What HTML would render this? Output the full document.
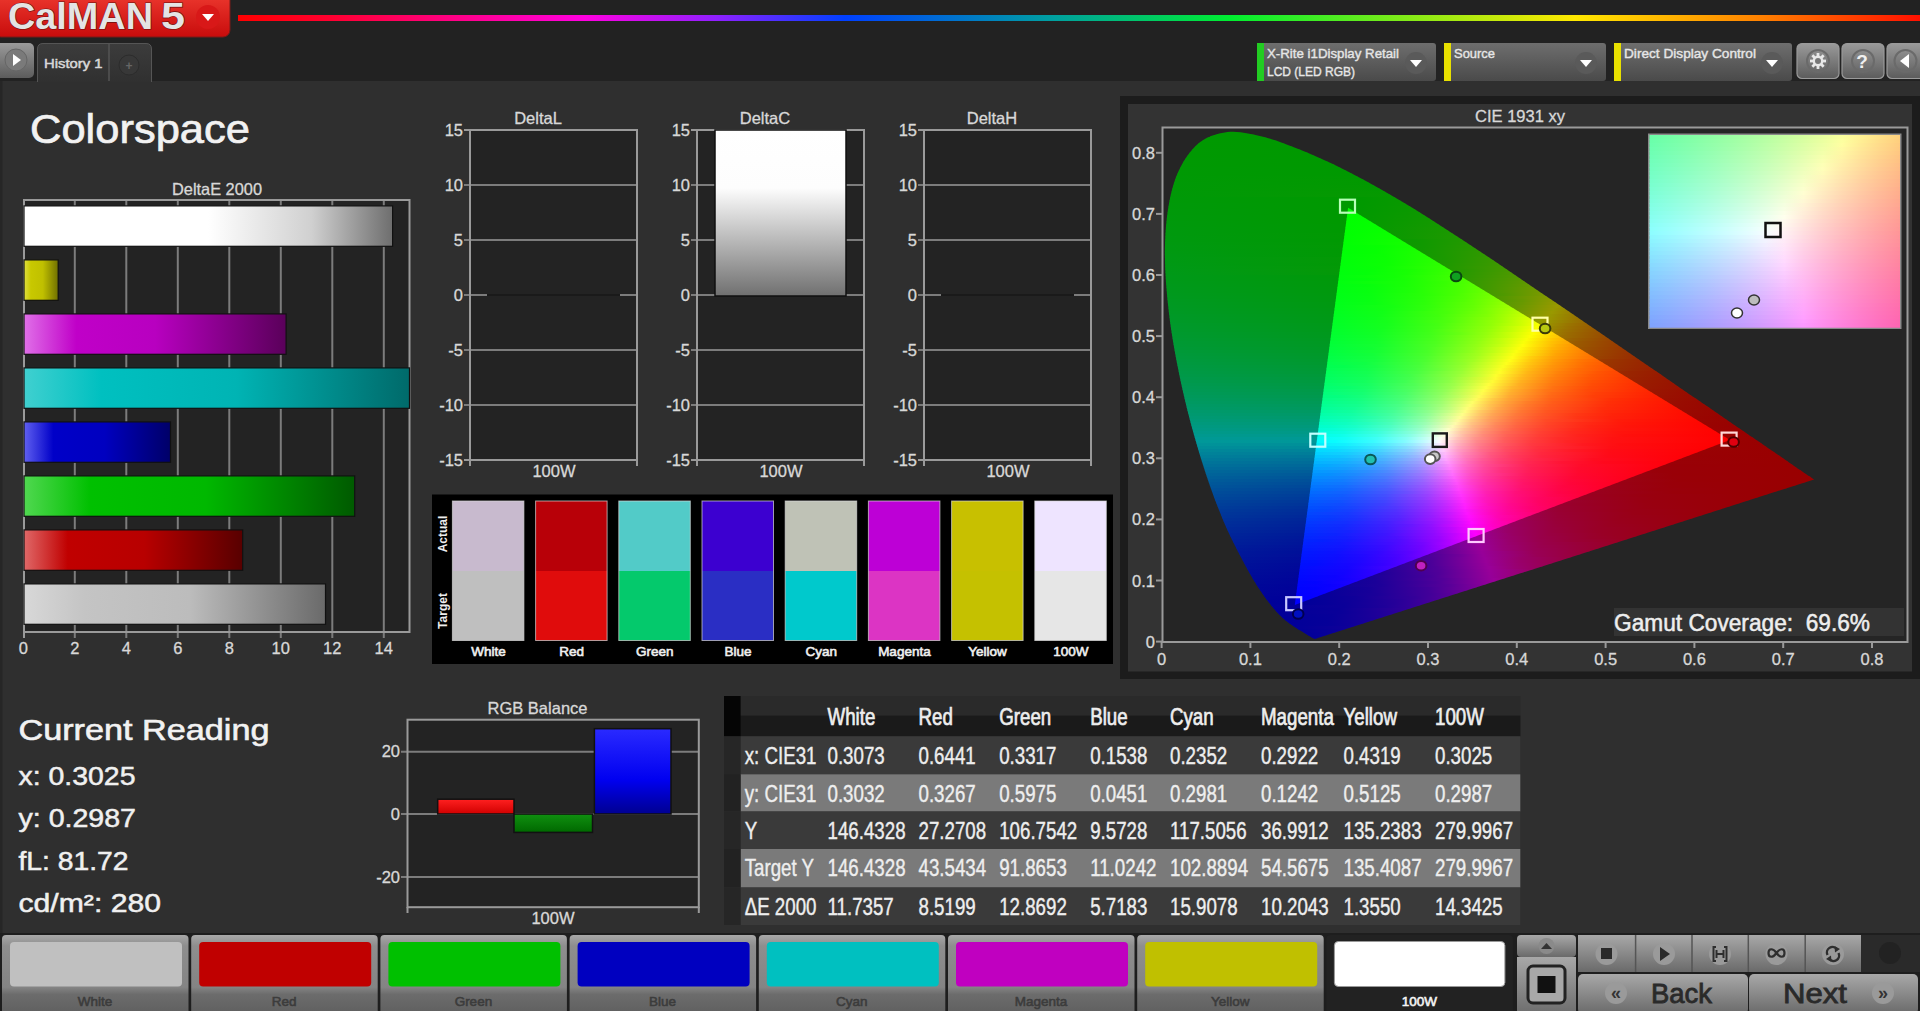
<!DOCTYPE html>
<html><head><meta charset="utf-8"><title>CalMAN 5</title>
<style>
html,body{margin:0;padding:0;background:#222;width:1920px;height:1011px;overflow:hidden}
svg{position:absolute;left:0;top:0;display:block}
text{font-family:"Liberation Sans", sans-serif}
</style></head><body>
<svg width="1920" height="1011" viewBox="0 0 1920 1011" font-family='"Liberation Sans", sans-serif'>
<defs>
<linearGradient id="logo" x1="0" y1="0" x2="0" y2="1"><stop offset="0" stop-color="#ee3a30"/><stop offset="1" stop-color="#c80c0c"/></linearGradient>
<linearGradient id="rb" gradientUnits="userSpaceOnUse" x1="238" x2="1920" y1="0" y2="0"><stop offset="0.000" stop-color="#ff0000"/><stop offset="0.055" stop-color="#ff0030"/><stop offset="0.206" stop-color="#ff00e0"/><stop offset="0.284" stop-color="#9020ff"/><stop offset="0.361" stop-color="#0040ff"/><stop offset="0.485" stop-color="#00a0a0"/><stop offset="0.590" stop-color="#00ee30"/><stop offset="0.795" stop-color="#ffe800"/><stop offset="0.906" stop-color="#ff8000"/><stop offset="1.000" stop-color="#ff1000"/></linearGradient>
<linearGradient id="gbtn" x1="0" y1="0" x2="0" y2="1"><stop offset="0" stop-color="#9a9a9a"/><stop offset="1" stop-color="#5c5c5c"/></linearGradient>
<linearGradient id="gtab" x1="0" y1="0" x2="0" y2="1"><stop offset="0" stop-color="#3c3c3c"/><stop offset="1" stop-color="#303030"/></linearGradient>
<linearGradient id="gsel" x1="0" y1="0" x2="0" y2="1"><stop offset="0" stop-color="#6e6e6e"/><stop offset="1" stop-color="#4a4a4a"/></linearGradient>
<linearGradient id="bar0" x1="0" x2="1" y1="0" y2="0"><stop offset="0" stop-color="#ffffff"/><stop offset="0.5" stop-color="#ffffff"/><stop offset="0.78" stop-color="#d0d0d0"/><stop offset="1" stop-color="#6e6e6e"/></linearGradient>
<linearGradient id="bar1" x1="0" x2="1" y1="0" y2="0"><stop offset="0" stop-color="#e0e040"/><stop offset="0.2" stop-color="#c8c800"/><stop offset="0.55" stop-color="#c0c000"/><stop offset="1" stop-color="#707000"/></linearGradient>
<linearGradient id="bar2" x1="0" x2="1" y1="0" y2="0"><stop offset="0" stop-color="#e070e8"/><stop offset="0.2" stop-color="#c000c8"/><stop offset="0.5" stop-color="#b800c0"/><stop offset="1" stop-color="#5a005a"/></linearGradient>
<linearGradient id="bar3" x1="0" x2="1" y1="0" y2="0"><stop offset="0" stop-color="#40d0d0"/><stop offset="0.2" stop-color="#00c0c0"/><stop offset="0.55" stop-color="#00b4b4"/><stop offset="1" stop-color="#006a6a"/></linearGradient>
<linearGradient id="bar4" x1="0" x2="1" y1="0" y2="0"><stop offset="0" stop-color="#6060f0"/><stop offset="0.2" stop-color="#0000c8"/><stop offset="0.55" stop-color="#0000c0"/><stop offset="1" stop-color="#000068"/></linearGradient>
<linearGradient id="bar5" x1="0" x2="1" y1="0" y2="0"><stop offset="0" stop-color="#50d850"/><stop offset="0.2" stop-color="#00c000"/><stop offset="0.55" stop-color="#00b800"/><stop offset="1" stop-color="#005a00"/></linearGradient>
<linearGradient id="bar6" x1="0" x2="1" y1="0" y2="0"><stop offset="0" stop-color="#e06868"/><stop offset="0.2" stop-color="#c00000"/><stop offset="0.55" stop-color="#b80000"/><stop offset="1" stop-color="#580000"/></linearGradient>
<linearGradient id="bar7" x1="0" x2="1" y1="0" y2="0"><stop offset="0" stop-color="#d8d8d8"/><stop offset="0.2" stop-color="#c4c4c4"/><stop offset="0.55" stop-color="#bcbcbc"/><stop offset="1" stop-color="#6a6a6a"/></linearGradient>
<linearGradient id="dc" x1="0" y1="0" x2="0" y2="1"><stop offset="0" stop-color="#ffffff"/><stop offset=".35" stop-color="#fdfdfd"/><stop offset="1" stop-color="#707070"/></linearGradient>
<clipPath id="hs"><path d="M1316.2 638.5 C1316.0 638.6 1315.3 638.7 1314.9 638.7 C1314.5 638.7 1314.1 638.6 1313.8 638.5 C1313.5 638.4 1313.2 638.2 1312.8 638.1 C1312.5 637.9 1312.1 637.7 1311.6 637.4 C1311.1 637.1 1310.5 636.8 1309.8 636.3 C1309.1 635.9 1308.4 635.5 1307.6 634.9 C1306.7 634.4 1305.8 633.9 1304.7 633.2 C1303.5 632.5 1302.2 631.7 1300.7 630.8 C1299.2 629.9 1297.6 629.0 1295.7 627.7 C1293.8 626.5 1291.8 625.2 1289.5 623.5 C1287.2 621.7 1284.9 620.1 1281.9 617.2 C1279.0 614.4 1275.6 611.1 1271.8 606.3 C1268.0 601.5 1263.8 596.2 1258.9 588.6 C1254.1 580.9 1248.7 572.1 1242.7 560.5 C1236.6 548.9 1229.4 535.5 1222.6 519.0 C1215.8 502.4 1208.6 482.9 1201.9 461.4 C1195.2 439.8 1188.0 414.2 1182.5 389.4 C1177.0 364.7 1171.8 337.3 1168.9 312.6 C1166.0 288.0 1164.2 263.1 1165.1 241.5 C1165.9 219.9 1168.8 199.2 1173.9 183.2 C1179.1 167.2 1187.2 154.0 1196.1 145.5 C1205.1 137.0 1216.4 133.6 1227.6 132.1 C1238.7 130.7 1251.1 134.0 1263.0 136.8 C1274.9 139.6 1287.3 144.7 1299.0 149.2 C1310.6 153.7 1321.8 158.8 1332.9 164.0 C1344.0 169.3 1354.7 174.9 1365.5 180.7 C1376.3 186.6 1387.0 192.7 1397.6 199.1 C1408.3 205.4 1418.8 211.9 1429.4 218.6 C1440.0 225.3 1450.5 232.1 1461.1 239.0 C1471.7 245.9 1482.3 253.0 1492.9 260.0 C1503.5 267.1 1514.0 274.2 1524.5 281.4 C1535.0 288.5 1545.6 295.6 1556.0 302.7 C1566.3 309.7 1576.7 316.8 1586.8 323.8 C1596.9 330.7 1606.9 337.6 1616.7 344.3 C1626.5 351.0 1636.1 357.6 1645.4 364.0 C1654.7 370.3 1663.8 376.5 1672.4 382.4 C1681.0 388.3 1689.3 394.1 1697.0 399.3 C1704.6 404.6 1711.7 409.4 1718.4 414.0 C1725.1 418.6 1731.5 423.0 1737.2 426.9 C1742.9 430.8 1748.1 434.3 1752.8 437.5 C1757.6 440.8 1761.7 443.6 1765.5 446.3 C1769.3 448.9 1772.6 451.2 1775.7 453.2 C1778.7 455.3 1781.3 457.1 1783.7 458.7 C1786.2 460.4 1788.2 461.8 1790.2 463.2 C1792.2 464.6 1794.0 465.8 1795.6 466.9 C1797.3 468.0 1798.7 469.1 1800.1 470.0 C1801.4 470.9 1802.6 471.7 1803.6 472.4 C1804.7 473.1 1805.3 473.5 1806.3 474.2 C1807.3 474.9 1808.7 475.9 1809.8 476.6 C1810.9 477.4 1812.2 478.2 1812.9 478.7 C1813.6 479.2 1813.8 479.4 1814.0 479.5 Z"/></clipPath>
<clipPath id="tri"><path d="M1729.9 440.0 L1348.1 207.8 L1294.8 604.9 Z"/></clipPath>
<linearGradient id="c0" gradientUnits="userSpaceOnUse" x1="1216.7" x2="1256.2" y1="0" y2="0"><stop offset="0.000" stop-color="#009900"/><stop offset="1.000" stop-color="#009900"/></linearGradient>
<linearGradient id="c1" gradientUnits="userSpaceOnUse" x1="1209.6" x2="1271.0" y1="0" y2="0"><stop offset="0.000" stop-color="#009900"/><stop offset="1.000" stop-color="#009900"/></linearGradient>
<linearGradient id="c2" gradientUnits="userSpaceOnUse" x1="1202.5" x2="1279.7" y1="0" y2="0"><stop offset="0.000" stop-color="#009901"/><stop offset="1.000" stop-color="#009900"/></linearGradient>
<linearGradient id="c3" gradientUnits="userSpaceOnUse" x1="1195.4" x2="1288.4" y1="0" y2="0"><stop offset="0.000" stop-color="#009901"/><stop offset="1.000" stop-color="#009900"/></linearGradient>
<linearGradient id="c4" gradientUnits="userSpaceOnUse" x1="1191.9" x2="1297.1" y1="0" y2="0"><stop offset="0.000" stop-color="#009901"/><stop offset="1.000" stop-color="#009900"/></linearGradient>
<linearGradient id="c5" gradientUnits="userSpaceOnUse" x1="1190.2" x2="1305.0" y1="0" y2="0"><stop offset="0.000" stop-color="#009901"/><stop offset="1.000" stop-color="#009900"/></linearGradient>
<linearGradient id="c6" gradientUnits="userSpaceOnUse" x1="1188.4" x2="1311.8" y1="0" y2="0"><stop offset="0.000" stop-color="#009902"/><stop offset="1.000" stop-color="#009900"/></linearGradient>
<linearGradient id="c7" gradientUnits="userSpaceOnUse" x1="1186.7" x2="1318.7" y1="0" y2="0"><stop offset="0.000" stop-color="#009902"/><stop offset="1.000" stop-color="#009900"/></linearGradient>
<linearGradient id="c8" gradientUnits="userSpaceOnUse" x1="1184.9" x2="1325.5" y1="0" y2="0"><stop offset="0.000" stop-color="#009902"/><stop offset="1.000" stop-color="#009900"/></linearGradient>
<linearGradient id="c9" gradientUnits="userSpaceOnUse" x1="1183.1" x2="1332.4" y1="0" y2="0"><stop offset="0.000" stop-color="#009903"/><stop offset="1.000" stop-color="#009900"/></linearGradient>
<linearGradient id="c10" gradientUnits="userSpaceOnUse" x1="1181.4" x2="1338.7" y1="0" y2="0"><stop offset="0.000" stop-color="#009903"/><stop offset="1.000" stop-color="#009900"/></linearGradient>
<linearGradient id="c11" gradientUnits="userSpaceOnUse" x1="1179.6" x2="1344.6" y1="0" y2="0"><stop offset="0.000" stop-color="#009903"/><stop offset="1.000" stop-color="#009900"/></linearGradient>
<linearGradient id="c12" gradientUnits="userSpaceOnUse" x1="1177.8" x2="1350.5" y1="0" y2="0"><stop offset="0.000" stop-color="#009904"/><stop offset="1.000" stop-color="#009900"/></linearGradient>
<linearGradient id="c13" gradientUnits="userSpaceOnUse" x1="1176.1" x2="1356.3" y1="0" y2="0"><stop offset="0.000" stop-color="#009904"/><stop offset="1.000" stop-color="#009900"/></linearGradient>
<linearGradient id="c14" gradientUnits="userSpaceOnUse" x1="1174.3" x2="1362.2" y1="0" y2="0"><stop offset="0.000" stop-color="#009904"/><stop offset="1.000" stop-color="#009900"/></linearGradient>
<linearGradient id="c15" gradientUnits="userSpaceOnUse" x1="1172.5" x2="1368.0" y1="0" y2="0"><stop offset="0.000" stop-color="#009905"/><stop offset="1.000" stop-color="#019900"/></linearGradient>
<linearGradient id="c16" gradientUnits="userSpaceOnUse" x1="1170.9" x2="1373.4" y1="0" y2="0"><stop offset="0.000" stop-color="#009905"/><stop offset="1.000" stop-color="#029900"/></linearGradient>
<linearGradient id="c17" gradientUnits="userSpaceOnUse" x1="1170.4" x2="1378.6" y1="0" y2="0"><stop offset="0.000" stop-color="#009906"/><stop offset="1.000" stop-color="#029900"/></linearGradient>
<linearGradient id="c18" gradientUnits="userSpaceOnUse" x1="1170.0" x2="1383.9" y1="0" y2="0"><stop offset="0.000" stop-color="#009906"/><stop offset="1.000" stop-color="#039900"/></linearGradient>
<linearGradient id="c19" gradientUnits="userSpaceOnUse" x1="1169.5" x2="1389.1" y1="0" y2="0"><stop offset="0.000" stop-color="#009906"/><stop offset="1.000" stop-color="#049900"/></linearGradient>
<linearGradient id="c20" gradientUnits="userSpaceOnUse" x1="1169.1" x2="1394.4" y1="0" y2="0"><stop offset="0.000" stop-color="#009907"/><stop offset="1.000" stop-color="#059900"/></linearGradient>
<linearGradient id="c21" gradientUnits="userSpaceOnUse" x1="1168.6" x2="1399.7" y1="0" y2="0"><stop offset="0.000" stop-color="#009907"/><stop offset="1.000" stop-color="#069900"/></linearGradient>
<linearGradient id="c22" gradientUnits="userSpaceOnUse" x1="1168.2" x2="1404.6" y1="0" y2="0"><stop offset="0.000" stop-color="#009908"/><stop offset="0.798" stop-color="#009900"/><stop offset="1.000" stop-color="#089900"/></linearGradient>
<linearGradient id="c23" gradientUnits="userSpaceOnUse" x1="1167.7" x2="1409.5" y1="0" y2="0"><stop offset="0.000" stop-color="#009908"/><stop offset="0.785" stop-color="#009900"/><stop offset="1.000" stop-color="#099900"/></linearGradient>
<linearGradient id="c24" gradientUnits="userSpaceOnUse" x1="1167.2" x2="1414.4" y1="0" y2="0"><stop offset="0.000" stop-color="#009909"/><stop offset="0.766" stop-color="#009900"/><stop offset="1.000" stop-color="#0a9900"/></linearGradient>
<linearGradient id="c25" gradientUnits="userSpaceOnUse" x1="1166.8" x2="1419.2" y1="0" y2="0"><stop offset="0.000" stop-color="#009909"/><stop offset="0.748" stop-color="#009900"/><stop offset="1.000" stop-color="#0c9900"/></linearGradient>
<linearGradient id="c26" gradientUnits="userSpaceOnUse" x1="1166.3" x2="1424.1" y1="0" y2="0"><stop offset="0.000" stop-color="#00990a"/><stop offset="0.736" stop-color="#009900"/><stop offset="1.000" stop-color="#0d9900"/></linearGradient>
<linearGradient id="c27" gradientUnits="userSpaceOnUse" x1="1165.9" x2="1429.0" y1="0" y2="0"><stop offset="0.000" stop-color="#00990a"/><stop offset="0.720" stop-color="#009900"/><stop offset="1.000" stop-color="#0f9900"/></linearGradient>
<linearGradient id="c28" gradientUnits="userSpaceOnUse" x1="1165.4" x2="1433.8" y1="0" y2="0"><stop offset="0.000" stop-color="#00990b"/><stop offset="0.704" stop-color="#009900"/><stop offset="1.000" stop-color="#119900"/></linearGradient>
<linearGradient id="c29" gradientUnits="userSpaceOnUse" x1="1165.0" x2="1438.5" y1="0" y2="0"><stop offset="0.000" stop-color="#00990b"/><stop offset="0.693" stop-color="#009900"/><stop offset="1.000" stop-color="#139900"/></linearGradient>
<linearGradient id="c30" gradientUnits="userSpaceOnUse" x1="1164.5" x2="1443.1" y1="0" y2="0"><stop offset="0.000" stop-color="#00990c"/><stop offset="0.679" stop-color="#009900"/><stop offset="1.000" stop-color="#159900"/></linearGradient>
<linearGradient id="c31" gradientUnits="userSpaceOnUse" x1="1164.0" x2="1447.8" y1="0" y2="0"><stop offset="0.000" stop-color="#00990c"/><stop offset="0.669" stop-color="#009901"/><stop offset="1.000" stop-color="#179900"/></linearGradient>
<linearGradient id="c32" gradientUnits="userSpaceOnUse" x1="1163.6" x2="1452.5" y1="0" y2="0"><stop offset="0.000" stop-color="#00990d"/><stop offset="0.655" stop-color="#009901"/><stop offset="1.000" stop-color="#1a9900"/></linearGradient>
<linearGradient id="c33" gradientUnits="userSpaceOnUse" x1="1163.1" x2="1457.1" y1="0" y2="0"><stop offset="0.000" stop-color="#00990e"/><stop offset="0.646" stop-color="#009901"/><stop offset="1.000" stop-color="#1c9900"/></linearGradient>
<linearGradient id="c34" gradientUnits="userSpaceOnUse" x1="1162.7" x2="1461.8" y1="0" y2="0"><stop offset="0.000" stop-color="#00990e"/><stop offset="0.667" stop-color="#019901"/><stop offset="1.000" stop-color="#1f9900"/></linearGradient>
<linearGradient id="c35" gradientUnits="userSpaceOnUse" x1="1162.2" x2="1466.4" y1="0" y2="0"><stop offset="0.000" stop-color="#00990f"/><stop offset="0.654" stop-color="#019901"/><stop offset="1.000" stop-color="#219900"/></linearGradient>
<linearGradient id="c36" gradientUnits="userSpaceOnUse" x1="1162.1" x2="1470.9" y1="0" y2="0"><stop offset="0.000" stop-color="#00990f"/><stop offset="0.613" stop-color="#009902"/><stop offset="0.826" stop-color="#0e9900"/><stop offset="1.000" stop-color="#249900"/></linearGradient>
<linearGradient id="c37" gradientUnits="userSpaceOnUse" x1="1162.1" x2="1475.4" y1="0" y2="0"><stop offset="0.000" stop-color="#009910"/><stop offset="0.631" stop-color="#019902"/><stop offset="0.822" stop-color="#0f9900"/><stop offset="1.000" stop-color="#279900"/></linearGradient>
<linearGradient id="c38" gradientUnits="userSpaceOnUse" x1="1162.2" x2="1480.0" y1="0" y2="0"><stop offset="0.000" stop-color="#009911"/><stop offset="0.642" stop-color="#029902"/><stop offset="0.824" stop-color="#119900"/><stop offset="1.000" stop-color="#2b9900"/></linearGradient>
<linearGradient id="c39" gradientUnits="userSpaceOnUse" x1="1162.3" x2="1484.5" y1="0" y2="0"><stop offset="0.000" stop-color="#009911"/><stop offset="0.611" stop-color="#019903"/><stop offset="0.809" stop-color="#119900"/><stop offset="1.000" stop-color="#2e9900"/></linearGradient>
<linearGradient id="c40" gradientUnits="userSpaceOnUse" x1="1162.5" x2="1489.1" y1="0" y2="0"><stop offset="0.000" stop-color="#009912"/><stop offset="0.598" stop-color="#019903"/><stop offset="0.811" stop-color="#139900"/><stop offset="1.000" stop-color="#329900"/></linearGradient>
<linearGradient id="c41" gradientUnits="userSpaceOnUse" x1="1162.7" x2="1493.6" y1="0" y2="0"><stop offset="0.000" stop-color="#009913"/><stop offset="0.590" stop-color="#019903"/><stop offset="0.819" stop-color="#169900"/><stop offset="1.000" stop-color="#359900"/></linearGradient>
<linearGradient id="c42" gradientUnits="userSpaceOnUse" x1="1162.8" x2="1498.1" y1="0" y2="0"><stop offset="0.000" stop-color="#009914"/><stop offset="0.631" stop-color="#049903"/><stop offset="0.839" stop-color="#1b9900"/><stop offset="1.000" stop-color="#3a9900"/></linearGradient>
<linearGradient id="c43" gradientUnits="userSpaceOnUse" x1="1163.0" x2="1502.5" y1="0" y2="0"><stop offset="0.000" stop-color="#009914"/><stop offset="0.606" stop-color="#039904"/><stop offset="0.812" stop-color="#199900"/><stop offset="1.000" stop-color="#3e9900"/></linearGradient>
<linearGradient id="c44" gradientUnits="userSpaceOnUse" x1="1163.1" x2="1507.0" y1="0" y2="0"><stop offset="0.000" stop-color="#009915"/><stop offset="0.581" stop-color="#029904"/><stop offset="0.791" stop-color="#189900"/><stop offset="1.000" stop-color="#429900"/></linearGradient>
<linearGradient id="c45" gradientUnits="userSpaceOnUse" x1="1163.3" x2="1511.4" y1="0" y2="0"><stop offset="0.000" stop-color="#009916"/><stop offset="0.600" stop-color="#049904"/><stop offset="0.777" stop-color="#189900"/><stop offset="1.000" stop-color="#479900"/></linearGradient>
<linearGradient id="c46" gradientUnits="userSpaceOnUse" x1="1163.5" x2="1515.9" y1="0" y2="0"><stop offset="0.000" stop-color="#009917"/><stop offset="0.605" stop-color="#059904"/><stop offset="0.853" stop-color="#289900"/><stop offset="1.000" stop-color="#4c9900"/></linearGradient>
<linearGradient id="c47" gradientUnits="userSpaceOnUse" x1="1163.6" x2="1520.3" y1="0" y2="0"><stop offset="0.000" stop-color="#009918"/><stop offset="0.581" stop-color="#049905"/><stop offset="0.838" stop-color="#289900"/><stop offset="1.000" stop-color="#529900"/></linearGradient>
<linearGradient id="c48" gradientUnits="userSpaceOnUse" x1="1163.8" x2="1524.8" y1="0" y2="0"><stop offset="0.000" stop-color="#009919"/><stop offset="0.503" stop-color="#009908"/><stop offset="0.597" stop-color="#069905"/><stop offset="0.823" stop-color="#289900"/><stop offset="1.000" stop-color="#589900"/></linearGradient>
<linearGradient id="c49" gradientUnits="userSpaceOnUse" x1="1163.9" x2="1529.2" y1="0" y2="0"><stop offset="0.000" stop-color="#009919"/><stop offset="0.497" stop-color="#009909"/><stop offset="0.607" stop-color="#089905"/><stop offset="0.809" stop-color="#289900"/><stop offset="1.000" stop-color="#5e9900"/></linearGradient>
<linearGradient id="c50" gradientUnits="userSpaceOnUse" x1="1164.1" x2="1533.6" y1="0" y2="0"><stop offset="0.000" stop-color="#00991a"/><stop offset="0.486" stop-color="#00990a"/><stop offset="0.605" stop-color="#099905"/><stop offset="0.800" stop-color="#299900"/><stop offset="1.000" stop-color="#649900"/></linearGradient>
<linearGradient id="c51" gradientUnits="userSpaceOnUse" x1="1164.3" x2="1538.1" y1="0" y2="0"><stop offset="0.000" stop-color="#00991b"/><stop offset="0.481" stop-color="#00990a"/><stop offset="0.578" stop-color="#079907"/><stop offset="0.807" stop-color="#2e9900"/><stop offset="1.000" stop-color="#6b9900"/></linearGradient>
<linearGradient id="c52" gradientUnits="userSpaceOnUse" x1="1164.4" x2="1542.5" y1="0" y2="0"><stop offset="0.000" stop-color="#00991c"/><stop offset="0.474" stop-color="#00990b"/><stop offset="0.595" stop-color="#0a9907"/><stop offset="0.821" stop-color="#359900"/><stop offset="1.000" stop-color="#739900"/></linearGradient>
<linearGradient id="c53" gradientUnits="userSpaceOnUse" x1="1164.6" x2="1546.9" y1="0" y2="0"><stop offset="0.000" stop-color="#00991d"/><stop offset="0.469" stop-color="#00990c"/><stop offset="0.578" stop-color="#099908"/><stop offset="0.818" stop-color="#389900"/><stop offset="1.000" stop-color="#7b9900"/></linearGradient>
<linearGradient id="c54" gradientUnits="userSpaceOnUse" x1="1164.7" x2="1551.3" y1="0" y2="0"><stop offset="0.000" stop-color="#00991e"/><stop offset="0.459" stop-color="#00990d"/><stop offset="0.577" stop-color="#0a9908"/><stop offset="0.778" stop-color="#319901"/><stop offset="0.881" stop-color="#519900"/><stop offset="1.000" stop-color="#839900"/></linearGradient>
<linearGradient id="c55" gradientUnits="userSpaceOnUse" x1="1164.9" x2="1555.7" y1="0" y2="0"><stop offset="0.000" stop-color="#00991f"/><stop offset="0.454" stop-color="#00990e"/><stop offset="0.597" stop-color="#0e9908"/><stop offset="0.816" stop-color="#409900"/><stop offset="1.000" stop-color="#8c9900"/></linearGradient>
<linearGradient id="c56" gradientUnits="userSpaceOnUse" x1="1165.1" x2="1560.2" y1="0" y2="0"><stop offset="0.000" stop-color="#009921"/><stop offset="0.449" stop-color="#00990e"/><stop offset="0.581" stop-color="#0d9909"/><stop offset="0.793" stop-color="#3d9901"/><stop offset="0.904" stop-color="#669900"/><stop offset="1.000" stop-color="#969900"/></linearGradient>
<linearGradient id="c57" gradientUnits="userSpaceOnUse" x1="1165.2" x2="1564.5" y1="0" y2="0"><stop offset="0.000" stop-color="#009922"/><stop offset="0.440" stop-color="#009910"/><stop offset="0.585" stop-color="#0f9909"/><stop offset="0.780" stop-color="#3d9902"/><stop offset="0.895" stop-color="#699900"/><stop offset="0.985" stop-color="#979900"/><stop offset="1.000" stop-color="#999200"/></linearGradient>
<linearGradient id="c58" gradientUnits="userSpaceOnUse" x1="1165.4" x2="1568.9" y1="0" y2="0"><stop offset="0.000" stop-color="#009923"/><stop offset="0.436" stop-color="#009910"/><stop offset="0.569" stop-color="#0e990a"/><stop offset="0.757" stop-color="#3a9902"/><stop offset="0.866" stop-color="#639900"/><stop offset="0.970" stop-color="#999900"/><stop offset="1.000" stop-color="#998900"/></linearGradient>
<linearGradient id="c59" gradientUnits="userSpaceOnUse" x1="1165.6" x2="1573.3" y1="0" y2="0"><stop offset="0.000" stop-color="#009924"/><stop offset="0.426" stop-color="#009912"/><stop offset="0.534" stop-color="#0a990d"/><stop offset="0.647" stop-color="#1f9907"/><stop offset="0.760" stop-color="#3f9903"/><stop offset="0.858" stop-color="#669900"/><stop offset="0.951" stop-color="#979900"/><stop offset="1.000" stop-color="#998000"/></linearGradient>
<linearGradient id="c60" gradientUnits="userSpaceOnUse" x1="1165.7" x2="1577.7" y1="0" y2="0"><stop offset="0.000" stop-color="#009925"/><stop offset="0.422" stop-color="#009913"/><stop offset="0.539" stop-color="#0c990d"/><stop offset="0.665" stop-color="#269907"/><stop offset="0.767" stop-color="#469903"/><stop offset="0.864" stop-color="#709900"/><stop offset="0.937" stop-color="#999900"/><stop offset="1.000" stop-color="#997800"/></linearGradient>
<linearGradient id="c61" gradientUnits="userSpaceOnUse" x1="1165.9" x2="1582.1" y1="0" y2="0"><stop offset="0.000" stop-color="#009927"/><stop offset="0.416" stop-color="#009914"/><stop offset="0.531" stop-color="#0c990e"/><stop offset="0.732" stop-color="#3e9904"/><stop offset="0.823" stop-color="#639901"/><stop offset="0.919" stop-color="#979900"/><stop offset="1.000" stop-color="#997000"/></linearGradient>
<linearGradient id="c62" gradientUnits="userSpaceOnUse" x1="1166.4" x2="1586.5" y1="0" y2="0"><stop offset="0.000" stop-color="#009928"/><stop offset="0.412" stop-color="#009915"/><stop offset="0.517" stop-color="#0b9910"/><stop offset="0.640" stop-color="#259909"/><stop offset="0.725" stop-color="#409905"/><stop offset="0.815" stop-color="#669901"/><stop offset="0.905" stop-color="#999900"/><stop offset="1.000" stop-color="#996900"/></linearGradient>
<linearGradient id="c63" gradientUnits="userSpaceOnUse" x1="1166.9" x2="1590.9" y1="0" y2="0"><stop offset="0.000" stop-color="#009929"/><stop offset="0.406" stop-color="#009916"/><stop offset="0.495" stop-color="#099911"/><stop offset="0.594" stop-color="#1c990c"/><stop offset="0.708" stop-color="#3e9906"/><stop offset="0.797" stop-color="#649902"/><stop offset="0.887" stop-color="#979900"/><stop offset="1.000" stop-color="#996200"/></linearGradient>
<linearGradient id="c64" gradientUnits="userSpaceOnUse" x1="1167.4" x2="1595.2" y1="0" y2="0"><stop offset="0.000" stop-color="#00992b"/><stop offset="0.397" stop-color="#009918"/><stop offset="0.500" stop-color="#0b9912"/><stop offset="0.589" stop-color="#1d990d"/><stop offset="0.701" stop-color="#409907"/><stop offset="0.799" stop-color="#6c9902"/><stop offset="0.874" stop-color="#999900"/><stop offset="0.935" stop-color="#997600"/><stop offset="1.000" stop-color="#995b00"/></linearGradient>
<linearGradient id="c65" gradientUnits="userSpaceOnUse" x1="1168.0" x2="1599.6" y1="0" y2="0"><stop offset="0.000" stop-color="#00992c"/><stop offset="0.394" stop-color="#009919"/><stop offset="0.486" stop-color="#0a9914"/><stop offset="0.602" stop-color="#23990d"/><stop offset="0.694" stop-color="#429908"/><stop offset="0.778" stop-color="#689903"/><stop offset="0.856" stop-color="#979900"/><stop offset="0.931" stop-color="#997000"/><stop offset="1.000" stop-color="#995500"/></linearGradient>
<linearGradient id="c66" gradientUnits="userSpaceOnUse" x1="1168.5" x2="1604.0" y1="0" y2="0"><stop offset="0.000" stop-color="#00992d"/><stop offset="0.385" stop-color="#00991a"/><stop offset="0.472" stop-color="#099915"/><stop offset="0.573" stop-color="#1e9910"/><stop offset="0.670" stop-color="#3d990a"/><stop offset="0.757" stop-color="#649905"/><stop offset="0.844" stop-color="#999901"/><stop offset="0.908" stop-color="#997300"/><stop offset="1.000" stop-color="#994f00"/></linearGradient>
<linearGradient id="c67" gradientUnits="userSpaceOnUse" x1="1169.0" x2="1608.3" y1="0" y2="0"><stop offset="0.000" stop-color="#00992f"/><stop offset="0.382" stop-color="#00991c"/><stop offset="0.477" stop-color="#0b9916"/><stop offset="0.659" stop-color="#3d990b"/><stop offset="0.736" stop-color="#609906"/><stop offset="0.827" stop-color="#979902"/><stop offset="0.909" stop-color="#996b00"/><stop offset="1.000" stop-color="#994a00"/></linearGradient>
<linearGradient id="c68" gradientUnits="userSpaceOnUse" x1="1169.6" x2="1612.7" y1="0" y2="0"><stop offset="0.000" stop-color="#009930"/><stop offset="0.374" stop-color="#00991d"/><stop offset="0.486" stop-color="#0e9917"/><stop offset="0.658" stop-color="#41990c"/><stop offset="0.739" stop-color="#689907"/><stop offset="0.815" stop-color="#999902"/><stop offset="0.883" stop-color="#997000"/><stop offset="1.000" stop-color="#994500"/></linearGradient>
<linearGradient id="c69" gradientUnits="userSpaceOnUse" x1="1170.1" x2="1617.1" y1="0" y2="0"><stop offset="0.000" stop-color="#009932"/><stop offset="0.371" stop-color="#00991f"/><stop offset="0.473" stop-color="#0d9919"/><stop offset="0.576" stop-color="#279912"/><stop offset="0.661" stop-color="#47990c"/><stop offset="0.737" stop-color="#6e9907"/><stop offset="0.799" stop-color="#989903"/><stop offset="0.897" stop-color="#996200"/><stop offset="1.000" stop-color="#994000"/></linearGradient>
<linearGradient id="c70" gradientUnits="userSpaceOnUse" x1="1170.6" x2="1621.5" y1="0" y2="0"><stop offset="0.000" stop-color="#009934"/><stop offset="0.363" stop-color="#009921"/><stop offset="0.460" stop-color="#0c991b"/><stop offset="0.624" stop-color="#3c9910"/><stop offset="0.726" stop-color="#6f9908"/><stop offset="0.788" stop-color="#999904"/><stop offset="0.832" stop-color="#997b02"/><stop offset="0.898" stop-color="#995b00"/><stop offset="1.000" stop-color="#993b00"/></linearGradient>
<linearGradient id="c71" gradientUnits="userSpaceOnUse" x1="1171.2" x2="1625.8" y1="0" y2="0"><stop offset="0.000" stop-color="#009935"/><stop offset="0.360" stop-color="#009922"/><stop offset="0.443" stop-color="#0a991d"/><stop offset="0.535" stop-color="#209917"/><stop offset="0.618" stop-color="#3e9911"/><stop offset="0.693" stop-color="#63990b"/><stop offset="0.772" stop-color="#989906"/><stop offset="0.868" stop-color="#996100"/><stop offset="1.000" stop-color="#993700"/></linearGradient>
<linearGradient id="c72" gradientUnits="userSpaceOnUse" x1="1171.7" x2="1630.2" y1="0" y2="0"><stop offset="0.000" stop-color="#009937"/><stop offset="0.352" stop-color="#009924"/><stop offset="0.457" stop-color="#0e991d"/><stop offset="0.591" stop-color="#379914"/><stop offset="0.683" stop-color="#64990d"/><stop offset="0.757" stop-color="#969907"/><stop offset="0.870" stop-color="#995a00"/><stop offset="1.000" stop-color="#993300"/></linearGradient>
<linearGradient id="c73" gradientUnits="userSpaceOnUse" x1="1172.2" x2="1634.6" y1="0" y2="0"><stop offset="0.000" stop-color="#009939"/><stop offset="0.349" stop-color="#009926"/><stop offset="0.440" stop-color="#0c9920"/><stop offset="0.586" stop-color="#399915"/><stop offset="0.681" stop-color="#6a990e"/><stop offset="0.746" stop-color="#989909"/><stop offset="0.810" stop-color="#996f03"/><stop offset="0.866" stop-color="#995500"/><stop offset="1.000" stop-color="#992f00"/></linearGradient>
<linearGradient id="c74" gradientUnits="userSpaceOnUse" x1="1172.8" x2="1639.0" y1="0" y2="0"><stop offset="0.000" stop-color="#00993b"/><stop offset="0.346" stop-color="#009928"/><stop offset="0.427" stop-color="#0b9922"/><stop offset="0.581" stop-color="#3b9917"/><stop offset="0.658" stop-color="#639911"/><stop offset="0.731" stop-color="#96990b"/><stop offset="0.846" stop-color="#995701"/><stop offset="1.000" stop-color="#992b00"/></linearGradient>
<linearGradient id="c75" gradientUnits="userSpaceOnUse" x1="1173.3" x2="1643.3" y1="0" y2="0"><stop offset="0.000" stop-color="#00993d"/><stop offset="0.339" stop-color="#00992a"/><stop offset="0.411" stop-color="#099925"/><stop offset="0.551" stop-color="#32991b"/><stop offset="0.648" stop-color="#649913"/><stop offset="0.720" stop-color="#98990c"/><stop offset="0.784" stop-color="#996e05"/><stop offset="0.843" stop-color="#995201"/><stop offset="1.000" stop-color="#992800"/></linearGradient>
<linearGradient id="c76" gradientUnits="userSpaceOnUse" x1="1173.8" x2="1647.7" y1="0" y2="0"><stop offset="0.000" stop-color="#00993f"/><stop offset="0.333" stop-color="#00992c"/><stop offset="0.409" stop-color="#0a9927"/><stop offset="0.494" stop-color="#209921"/><stop offset="0.591" stop-color="#499919"/><stop offset="0.709" stop-color="#99990e"/><stop offset="0.759" stop-color="#997407"/><stop offset="0.819" stop-color="#995603"/><stop offset="0.911" stop-color="#993700"/><stop offset="1.000" stop-color="#992500"/></linearGradient>
<linearGradient id="c77" gradientUnits="userSpaceOnUse" x1="1174.3" x2="1652.1" y1="0" y2="0"><stop offset="0.000" stop-color="#009941"/><stop offset="0.331" stop-color="#00992e"/><stop offset="0.393" stop-color="#08992a"/><stop offset="0.544" stop-color="#37991e"/><stop offset="0.623" stop-color="#629917"/><stop offset="0.695" stop-color="#979911"/><stop offset="0.762" stop-color="#996b07"/><stop offset="0.816" stop-color="#995103"/><stop offset="0.891" stop-color="#993800"/><stop offset="1.000" stop-color="#992200"/></linearGradient>
<linearGradient id="c78" gradientUnits="userSpaceOnUse" x1="1174.9" x2="1656.5" y1="0" y2="0"><stop offset="0.000" stop-color="#009943"/><stop offset="0.324" stop-color="#009931"/><stop offset="0.407" stop-color="#0c992b"/><stop offset="0.548" stop-color="#3d991f"/><stop offset="0.614" stop-color="#63991a"/><stop offset="0.685" stop-color="#999913"/><stop offset="0.747" stop-color="#996c09"/><stop offset="0.809" stop-color="#994e03"/><stop offset="0.871" stop-color="#993901"/><stop offset="1.000" stop-color="#991f00"/></linearGradient>
<linearGradient id="c79" gradientUnits="userSpaceOnUse" x1="1175.4" x2="1660.9" y1="0" y2="0"><stop offset="0.000" stop-color="#009945"/><stop offset="0.321" stop-color="#009933"/><stop offset="0.391" stop-color="#0a992e"/><stop offset="0.494" stop-color="#299926"/><stop offset="0.556" stop-color="#469920"/><stop offset="0.601" stop-color="#61991c"/><stop offset="0.671" stop-color="#989915"/><stop offset="0.728" stop-color="#996f0b"/><stop offset="0.794" stop-color="#994e04"/><stop offset="0.864" stop-color="#993701"/><stop offset="1.000" stop-color="#991c00"/></linearGradient>
<linearGradient id="c80" gradientUnits="userSpaceOnUse" x1="1175.9" x2="1665.3" y1="0" y2="0"><stop offset="0.000" stop-color="#009947"/><stop offset="0.314" stop-color="#009935"/><stop offset="0.376" stop-color="#089931"/><stop offset="0.445" stop-color="#1a992c"/><stop offset="0.543" stop-color="#449923"/><stop offset="0.592" stop-color="#62991f"/><stop offset="0.657" stop-color="#969918"/><stop offset="0.718" stop-color="#996d0d"/><stop offset="0.788" stop-color="#994b05"/><stop offset="0.914" stop-color="#992700"/><stop offset="1.000" stop-color="#991a00"/></linearGradient>
<linearGradient id="c81" gradientUnits="userSpaceOnUse" x1="1176.5" x2="1669.7" y1="0" y2="0"><stop offset="0.000" stop-color="#009949"/><stop offset="0.312" stop-color="#009938"/><stop offset="0.364" stop-color="#079934"/><stop offset="0.449" stop-color="#1e992e"/><stop offset="0.526" stop-color="#409927"/><stop offset="0.579" stop-color="#609922"/><stop offset="0.648" stop-color="#98991b"/><stop offset="0.713" stop-color="#99690e"/><stop offset="0.798" stop-color="#994204"/><stop offset="0.874" stop-color="#992c01"/><stop offset="1.000" stop-color="#991700"/></linearGradient>
<linearGradient id="c82" gradientUnits="userSpaceOnUse" x1="1177.0" x2="1674.0" y1="0" y2="0"><stop offset="0.000" stop-color="#00994c"/><stop offset="0.305" stop-color="#00993b"/><stop offset="0.373" stop-color="#0a9936"/><stop offset="0.506" stop-color="#3a992b"/><stop offset="0.570" stop-color="#619925"/><stop offset="0.635" stop-color="#96991e"/><stop offset="0.703" stop-color="#99670f"/><stop offset="0.791" stop-color="#993f05"/><stop offset="0.871" stop-color="#992901"/><stop offset="1.000" stop-color="#991500"/></linearGradient>
<linearGradient id="c83" gradientUnits="userSpaceOnUse" x1="1177.5" x2="1678.4" y1="0" y2="0"><stop offset="0.000" stop-color="#00994e"/><stop offset="0.303" stop-color="#00993d"/><stop offset="0.359" stop-color="#089939"/><stop offset="0.450" stop-color="#249932"/><stop offset="0.514" stop-color="#43992c"/><stop offset="0.582" stop-color="#719926"/><stop offset="0.625" stop-color="#989921"/><stop offset="0.685" stop-color="#996a12"/><stop offset="0.777" stop-color="#993f06"/><stop offset="0.884" stop-color="#992300"/><stop offset="1.000" stop-color="#991300"/></linearGradient>
<linearGradient id="c84" gradientUnits="userSpaceOnUse" x1="1178.1" x2="1682.8" y1="0" y2="0"><stop offset="0.000" stop-color="#009951"/><stop offset="0.296" stop-color="#009940"/><stop offset="0.348" stop-color="#07993d"/><stop offset="0.411" stop-color="#189938"/><stop offset="0.498" stop-color="#3f9930"/><stop offset="0.549" stop-color="#60992b"/><stop offset="0.613" stop-color="#969925"/><stop offset="0.680" stop-color="#996613"/><stop offset="0.763" stop-color="#993f07"/><stop offset="0.874" stop-color="#992201"/><stop offset="1.000" stop-color="#991100"/></linearGradient>
<linearGradient id="c85" gradientUnits="userSpaceOnUse" x1="1178.6" x2="1687.1" y1="0" y2="0"><stop offset="0.000" stop-color="#009954"/><stop offset="0.294" stop-color="#009943"/><stop offset="0.361" stop-color="#0b993f"/><stop offset="0.486" stop-color="#3d9934"/><stop offset="0.553" stop-color="#6a992e"/><stop offset="0.604" stop-color="#999928"/><stop offset="0.671" stop-color="#996415"/><stop offset="0.749" stop-color="#993f09"/><stop offset="0.847" stop-color="#992402"/><stop offset="1.000" stop-color="#990f00"/></linearGradient>
<linearGradient id="c86" gradientUnits="userSpaceOnUse" x1="1179.1" x2="1691.5" y1="0" y2="0"><stop offset="0.000" stop-color="#009956"/><stop offset="0.288" stop-color="#009947"/><stop offset="0.342" stop-color="#089943"/><stop offset="0.401" stop-color="#19993e"/><stop offset="0.475" stop-color="#3b9938"/><stop offset="0.541" stop-color="#689932"/><stop offset="0.591" stop-color="#97992c"/><stop offset="0.654" stop-color="#996719"/><stop offset="0.743" stop-color="#993c0a"/><stop offset="0.852" stop-color="#992002"/><stop offset="1.000" stop-color="#990d00"/></linearGradient>
<linearGradient id="c87" gradientUnits="userSpaceOnUse" x1="1179.8" x2="1695.8" y1="0" y2="0"><stop offset="0.000" stop-color="#009959"/><stop offset="0.286" stop-color="#00994a"/><stop offset="0.371" stop-color="#119944"/><stop offset="0.475" stop-color="#40993b"/><stop offset="0.529" stop-color="#669936"/><stop offset="0.583" stop-color="#999930"/><stop offset="0.645" stop-color="#99651b"/><stop offset="0.741" stop-color="#99380a"/><stop offset="0.830" stop-color="#992103"/><stop offset="1.000" stop-color="#990b00"/></linearGradient>
<linearGradient id="c88" gradientUnits="userSpaceOnUse" x1="1180.6" x2="1700.2" y1="0" y2="0"><stop offset="0.000" stop-color="#00995c"/><stop offset="0.281" stop-color="#00994d"/><stop offset="0.362" stop-color="#109948"/><stop offset="0.473" stop-color="#44993e"/><stop offset="0.523" stop-color="#699939"/><stop offset="0.569" stop-color="#969934"/><stop offset="0.642" stop-color="#995f1b"/><stop offset="0.731" stop-color="#99370b"/><stop offset="0.854" stop-color="#991a02"/><stop offset="1.000" stop-color="#990a00"/></linearGradient>
<linearGradient id="c89" gradientUnits="userSpaceOnUse" x1="1181.4" x2="1704.6" y1="0" y2="0"><stop offset="0.000" stop-color="#00995f"/><stop offset="0.275" stop-color="#009951"/><stop offset="0.355" stop-color="#10994c"/><stop offset="0.405" stop-color="#239948"/><stop offset="0.473" stop-color="#4a9942"/><stop offset="0.561" stop-color="#989939"/><stop offset="0.634" stop-color="#995d1d"/><stop offset="0.725" stop-color="#99340c"/><stop offset="0.863" stop-color="#991601"/><stop offset="1.000" stop-color="#990900"/></linearGradient>
<linearGradient id="c90" gradientUnits="userSpaceOnUse" x1="1182.2" x2="1709.0" y1="0" y2="0"><stop offset="0.000" stop-color="#009962"/><stop offset="0.273" stop-color="#009955"/><stop offset="0.352" stop-color="#11994f"/><stop offset="0.462" stop-color="#489947"/><stop offset="0.549" stop-color="#96993e"/><stop offset="0.625" stop-color="#995b1f"/><stop offset="0.708" stop-color="#99350e"/><stop offset="0.833" stop-color="#991803"/><stop offset="1.000" stop-color="#990700"/></linearGradient>
<linearGradient id="c91" gradientUnits="userSpaceOnUse" x1="1183.0" x2="1713.3" y1="0" y2="0"><stop offset="0.000" stop-color="#009966"/><stop offset="0.267" stop-color="#009959"/><stop offset="0.327" stop-color="#0b9955"/><stop offset="0.436" stop-color="#3c994d"/><stop offset="0.496" stop-color="#6a9947"/><stop offset="0.541" stop-color="#999943"/><stop offset="0.571" stop-color="#997a33"/><stop offset="0.617" stop-color="#995922"/><stop offset="0.711" stop-color="#99300e"/><stop offset="0.823" stop-color="#991703"/><stop offset="1.000" stop-color="#990600"/></linearGradient>
<linearGradient id="c92" gradientUnits="userSpaceOnUse" x1="1183.8" x2="1717.7" y1="0" y2="0"><stop offset="0.000" stop-color="#009969"/><stop offset="0.262" stop-color="#00995d"/><stop offset="0.341" stop-color="#119958"/><stop offset="0.446" stop-color="#489950"/><stop offset="0.528" stop-color="#959948"/><stop offset="0.607" stop-color="#995824"/><stop offset="0.697" stop-color="#993010"/><stop offset="0.820" stop-color="#991503"/><stop offset="1.000" stop-color="#990500"/></linearGradient>
<linearGradient id="c93" gradientUnits="userSpaceOnUse" x1="1184.6" x2="1722.1" y1="0" y2="0"><stop offset="0.000" stop-color="#00996d"/><stop offset="0.260" stop-color="#009961"/><stop offset="0.320" stop-color="#0c995e"/><stop offset="0.375" stop-color="#22995a"/><stop offset="0.435" stop-color="#469956"/><stop offset="0.483" stop-color="#6f9951"/><stop offset="0.520" stop-color="#98994e"/><stop offset="0.595" stop-color="#995828"/><stop offset="0.680" stop-color="#993112"/><stop offset="0.810" stop-color="#991404"/><stop offset="1.000" stop-color="#990400"/></linearGradient>
<linearGradient id="c94" gradientUnits="userSpaceOnUse" x1="1185.4" x2="1726.5" y1="0" y2="0"><stop offset="0.000" stop-color="#009970"/><stop offset="0.255" stop-color="#009966"/><stop offset="0.317" stop-color="#0d9962"/><stop offset="0.373" stop-color="#24995f"/><stop offset="0.424" stop-color="#44995b"/><stop offset="0.472" stop-color="#6d9957"/><stop offset="0.509" stop-color="#969954"/><stop offset="0.587" stop-color="#99562b"/><stop offset="0.679" stop-color="#992d12"/><stop offset="0.808" stop-color="#991204"/><stop offset="1.000" stop-color="#990300"/></linearGradient>
<linearGradient id="c95" gradientUnits="userSpaceOnUse" x1="1186.2" x2="1730.9" y1="0" y2="0"><stop offset="0.000" stop-color="#009974"/><stop offset="0.253" stop-color="#00996b"/><stop offset="0.315" stop-color="#0e9967"/><stop offset="0.414" stop-color="#429961"/><stop offset="0.462" stop-color="#6b995d"/><stop offset="0.502" stop-color="#99995a"/><stop offset="0.535" stop-color="#997543"/><stop offset="0.575" stop-color="#99562f"/><stop offset="0.659" stop-color="#992f16"/><stop offset="0.824" stop-color="#990e03"/><stop offset="1.000" stop-color="#990200"/></linearGradient>
<linearGradient id="c96" gradientUnits="userSpaceOnUse" x1="1187.1" x2="1735.2" y1="0" y2="0"><stop offset="0.000" stop-color="#009978"/><stop offset="0.247" stop-color="#009970"/><stop offset="0.309" stop-color="#0e996d"/><stop offset="0.404" stop-color="#409967"/><stop offset="0.451" stop-color="#699964"/><stop offset="0.495" stop-color="#99965f"/><stop offset="0.535" stop-color="#996c42"/><stop offset="0.567" stop-color="#995431"/><stop offset="0.662" stop-color="#992a15"/><stop offset="0.807" stop-color="#990e04"/><stop offset="1.000" stop-color="#990200"/></linearGradient>
<linearGradient id="c97" gradientUnits="userSpaceOnUse" x1="1187.9" x2="1739.6" y1="0" y2="0"><stop offset="0.000" stop-color="#00997d"/><stop offset="0.243" stop-color="#009975"/><stop offset="0.304" stop-color="#0e9972"/><stop offset="0.395" stop-color="#3f996e"/><stop offset="0.438" stop-color="#65996b"/><stop offset="0.486" stop-color="#999665"/><stop offset="0.514" stop-color="#99754e"/><stop offset="0.554" stop-color="#995537"/><stop offset="0.649" stop-color="#992a18"/><stop offset="0.808" stop-color="#990c04"/><stop offset="1.000" stop-color="#990100"/></linearGradient>
<linearGradient id="c98" gradientUnits="userSpaceOnUse" x1="1188.7" x2="1744.0" y1="0" y2="0"><stop offset="0.000" stop-color="#009981"/><stop offset="0.241" stop-color="#00997a"/><stop offset="0.284" stop-color="#099979"/><stop offset="0.327" stop-color="#1a9977"/><stop offset="0.385" stop-color="#3d9974"/><stop offset="0.428" stop-color="#639972"/><stop offset="0.475" stop-color="#99976e"/><stop offset="0.511" stop-color="#996f4f"/><stop offset="0.547" stop-color="#99533a"/><stop offset="0.629" stop-color="#992c1c"/><stop offset="0.791" stop-color="#990c05"/><stop offset="1.000" stop-color="#990000"/></linearGradient>
<linearGradient id="c99" gradientUnits="userSpaceOnUse" x1="1189.5" x2="1748.4" y1="0" y2="0"><stop offset="0.000" stop-color="#009985"/><stop offset="0.236" stop-color="#009980"/><stop offset="0.282" stop-color="#0a997f"/><stop offset="0.375" stop-color="#3b997c"/><stop offset="0.418" stop-color="#61997a"/><stop offset="0.464" stop-color="#999977"/><stop offset="0.496" stop-color="#997358"/><stop offset="0.536" stop-color="#99533f"/><stop offset="0.632" stop-color="#99271b"/><stop offset="0.775" stop-color="#990c07"/><stop offset="1.000" stop-color="#990000"/></linearGradient>
<linearGradient id="c100" gradientUnits="userSpaceOnUse" x1="1190.3" x2="1752.9" y1="0" y2="0"><stop offset="0.000" stop-color="#00998a"/><stop offset="0.230" stop-color="#009986"/><stop offset="0.280" stop-color="#0b9985"/><stop offset="0.365" stop-color="#399983"/><stop offset="0.404" stop-color="#5b9982"/><stop offset="0.457" stop-color="#99967d"/><stop offset="0.493" stop-color="#996d5a"/><stop offset="0.535" stop-color="#994c3e"/><stop offset="0.585" stop-color="#993329"/><stop offset="0.652" stop-color="#991e17"/><stop offset="0.787" stop-color="#990906"/><stop offset="1.000" stop-color="#990000"/></linearGradient>
<linearGradient id="c101" gradientUnits="userSpaceOnUse" x1="1191.1" x2="1757.2" y1="0" y2="0"><stop offset="0.000" stop-color="#00998f"/><stop offset="0.229" stop-color="#00998d"/><stop offset="0.278" stop-color="#0c998c"/><stop offset="0.366" stop-color="#3f998a"/><stop offset="0.405" stop-color="#64998a"/><stop offset="0.447" stop-color="#999887"/><stop offset="0.486" stop-color="#996a5e"/><stop offset="0.525" stop-color="#994c43"/><stop offset="0.627" stop-color="#99211c"/><stop offset="0.782" stop-color="#990806"/><stop offset="1.000" stop-color="#990000"/></linearGradient>
<linearGradient id="c102" gradientUnits="userSpaceOnUse" x1="1191.9" x2="1761.6" y1="0" y2="0"><stop offset="0.000" stop-color="#009994"/><stop offset="0.225" stop-color="#009994"/><stop offset="0.274" stop-color="#0c9993"/><stop offset="0.361" stop-color="#419993"/><stop offset="0.389" stop-color="#5c9993"/><stop offset="0.439" stop-color="#999790"/><stop offset="0.477" stop-color="#996964"/><stop offset="0.516" stop-color="#994b47"/><stop offset="0.572" stop-color="#992f2c"/><stop offset="0.621" stop-color="#991f1e"/><stop offset="0.779" stop-color="#990706"/><stop offset="1.000" stop-color="#990000"/></linearGradient>
<linearGradient id="c103" gradientUnits="userSpaceOnUse" x1="1192.7" x2="1766.0" y1="0" y2="0"><stop offset="0.000" stop-color="#009899"/><stop offset="0.220" stop-color="#009799"/><stop offset="0.258" stop-color="#089799"/><stop offset="0.296" stop-color="#189799"/><stop offset="0.345" stop-color="#389799"/><stop offset="0.380" stop-color="#589699"/><stop offset="0.432" stop-color="#999497"/><stop offset="0.467" stop-color="#996a6c"/><stop offset="0.505" stop-color="#994b4d"/><stop offset="0.564" stop-color="#992d2f"/><stop offset="0.617" stop-color="#991d1e"/><stop offset="0.767" stop-color="#990707"/><stop offset="1.000" stop-color="#990000"/></linearGradient>
<linearGradient id="c104" gradientUnits="userSpaceOnUse" x1="1193.5" x2="1770.3" y1="0" y2="0"><stop offset="0.000" stop-color="#009399"/><stop offset="0.218" stop-color="#009099"/><stop offset="0.263" stop-color="#0b9099"/><stop offset="0.343" stop-color="#388e99"/><stop offset="0.384" stop-color="#5f8d99"/><stop offset="0.429" stop-color="#998c98"/><stop offset="0.460" stop-color="#996771"/><stop offset="0.505" stop-color="#99454c"/><stop offset="0.550" stop-color="#992e34"/><stop offset="0.616" stop-color="#991a1e"/><stop offset="0.768" stop-color="#990507"/><stop offset="1.000" stop-color="#990000"/></linearGradient>
<linearGradient id="c105" gradientUnits="userSpaceOnUse" x1="1194.4" x2="1774.7" y1="0" y2="0"><stop offset="0.000" stop-color="#008e99"/><stop offset="0.213" stop-color="#008a99"/><stop offset="0.258" stop-color="#0a8999"/><stop offset="0.344" stop-color="#3b8699"/><stop offset="0.378" stop-color="#5b8599"/><stop offset="0.430" stop-color="#997f95"/><stop offset="0.460" stop-color="#995e6f"/><stop offset="0.505" stop-color="#993e4b"/><stop offset="0.553" stop-color="#992932"/><stop offset="0.615" stop-color="#99171e"/><stop offset="0.780" stop-color="#990406"/><stop offset="1.000" stop-color="#990000"/></linearGradient>
<linearGradient id="c106" gradientUnits="userSpaceOnUse" x1="1195.2" x2="1779.1" y1="0" y2="0"><stop offset="0.000" stop-color="#008899"/><stop offset="0.212" stop-color="#008399"/><stop offset="0.260" stop-color="#0c8299"/><stop offset="0.342" stop-color="#3c7e99"/><stop offset="0.377" stop-color="#5c7d99"/><stop offset="0.425" stop-color="#997a99"/><stop offset="0.459" stop-color="#99576f"/><stop offset="0.503" stop-color="#99394b"/><stop offset="0.603" stop-color="#991721"/><stop offset="0.767" stop-color="#990307"/><stop offset="1.000" stop-color="#990000"/></linearGradient>
<linearGradient id="c107" gradientUnits="userSpaceOnUse" x1="1196.0" x2="1783.5" y1="0" y2="0"><stop offset="0.000" stop-color="#008399"/><stop offset="0.207" stop-color="#007d99"/><stop offset="0.248" stop-color="#097b99"/><stop offset="0.296" stop-color="#1e7999"/><stop offset="0.344" stop-color="#3f7799"/><stop offset="0.381" stop-color="#637499"/><stop offset="0.425" stop-color="#996f95"/><stop offset="0.456" stop-color="#995170"/><stop offset="0.507" stop-color="#993248"/><stop offset="0.605" stop-color="#991420"/><stop offset="0.769" stop-color="#990207"/><stop offset="1.000" stop-color="#990000"/></linearGradient>
<linearGradient id="c108" gradientUnits="userSpaceOnUse" x1="1196.8" x2="1787.9" y1="0" y2="0"><stop offset="0.000" stop-color="#007f99"/><stop offset="0.206" stop-color="#007799"/><stop offset="0.257" stop-color="#0d7599"/><stop offset="0.341" stop-color="#3f7099"/><stop offset="0.375" stop-color="#5f6d99"/><stop offset="0.422" stop-color="#996897"/><stop offset="0.456" stop-color="#994a6e"/><stop offset="0.490" stop-color="#993552"/><stop offset="0.547" stop-color="#991f33"/><stop offset="0.605" stop-color="#991120"/><stop offset="0.780" stop-color="#990106"/><stop offset="1.000" stop-color="#990000"/></linearGradient>
<linearGradient id="c109" gradientUnits="userSpaceOnUse" x1="1197.6" x2="1792.2" y1="0" y2="0"><stop offset="0.000" stop-color="#007a99"/><stop offset="0.201" stop-color="#007199"/><stop offset="0.248" stop-color="#0b6f99"/><stop offset="0.289" stop-color="#1d6c99"/><stop offset="0.342" stop-color="#426899"/><stop offset="0.379" stop-color="#666599"/><stop offset="0.419" stop-color="#996198"/><stop offset="0.450" stop-color="#994773"/><stop offset="0.490" stop-color="#993051"/><stop offset="0.537" stop-color="#991e37"/><stop offset="0.604" stop-color="#990f20"/><stop offset="0.768" stop-color="#990107"/><stop offset="1.000" stop-color="#990000"/></linearGradient>
<linearGradient id="c110" gradientUnits="userSpaceOnUse" x1="1198.4" x2="1796.6" y1="0" y2="0"><stop offset="0.000" stop-color="#007599"/><stop offset="0.200" stop-color="#006c99"/><stop offset="0.253" stop-color="#0e6999"/><stop offset="0.297" stop-color="#236599"/><stop offset="0.340" stop-color="#426299"/><stop offset="0.420" stop-color="#995895"/><stop offset="0.450" stop-color="#994071"/><stop offset="0.490" stop-color="#992b50"/><stop offset="0.533" stop-color="#991c38"/><stop offset="0.603" stop-color="#990d20"/><stop offset="0.757" stop-color="#990108"/><stop offset="1.000" stop-color="#990000"/></linearGradient>
<linearGradient id="c111" gradientUnits="userSpaceOnUse" x1="1199.3" x2="1800.9" y1="0" y2="0"><stop offset="0.000" stop-color="#007199"/><stop offset="0.196" stop-color="#006799"/><stop offset="0.243" stop-color="#0b6399"/><stop offset="0.296" stop-color="#245f99"/><stop offset="0.339" stop-color="#435c99"/><stop offset="0.382" stop-color="#6e5799"/><stop offset="0.415" stop-color="#995399"/><stop offset="0.445" stop-color="#993d74"/><stop offset="0.488" stop-color="#992750"/><stop offset="0.595" stop-color="#990c22"/><stop offset="0.767" stop-color="#990007"/><stop offset="1.000" stop-color="#990000"/></linearGradient>
<linearGradient id="c112" gradientUnits="userSpaceOnUse" x1="1200.4" x2="1805.4" y1="0" y2="0"><stop offset="0.000" stop-color="#006c99"/><stop offset="0.191" stop-color="#006299"/><stop offset="0.248" stop-color="#0e5e99"/><stop offset="0.330" stop-color="#3e5699"/><stop offset="0.363" stop-color="#5c5399"/><stop offset="0.416" stop-color="#994a95"/><stop offset="0.442" stop-color="#993875"/><stop offset="0.485" stop-color="#992351"/><stop offset="0.538" stop-color="#991435"/><stop offset="0.597" stop-color="#990a21"/><stop offset="0.756" stop-color="#990008"/><stop offset="1.000" stop-color="#990000"/></linearGradient>
<linearGradient id="c113" gradientUnits="userSpaceOnUse" x1="1201.5" x2="1809.7" y1="0" y2="0"><stop offset="0.000" stop-color="#006899"/><stop offset="0.187" stop-color="#005d99"/><stop offset="0.236" stop-color="#0b5999"/><stop offset="0.275" stop-color="#1c5699"/><stop offset="0.331" stop-color="#415099"/><stop offset="0.413" stop-color="#994596"/><stop offset="0.439" stop-color="#993376"/><stop offset="0.482" stop-color="#992052"/><stop offset="0.534" stop-color="#991236"/><stop offset="0.597" stop-color="#990821"/><stop offset="0.757" stop-color="#990008"/><stop offset="1.000" stop-color="#990000"/></linearGradient>
<linearGradient id="c114" gradientUnits="userSpaceOnUse" x1="1202.6" x2="1814.1" y1="0" y2="0"><stop offset="0.000" stop-color="#006499"/><stop offset="0.186" stop-color="#005899"/><stop offset="0.239" stop-color="#0d5499"/><stop offset="0.275" stop-color="#1d5099"/><stop offset="0.333" stop-color="#454a99"/><stop offset="0.373" stop-color="#6b4599"/><stop offset="0.408" stop-color="#994199"/><stop offset="0.444" stop-color="#992b6f"/><stop offset="0.480" stop-color="#991d52"/><stop offset="0.533" stop-color="#990f36"/><stop offset="0.588" stop-color="#990723"/><stop offset="0.768" stop-color="#990007"/><stop offset="1.000" stop-color="#990000"/></linearGradient>
<linearGradient id="c115" gradientUnits="userSpaceOnUse" x1="1203.6" x2="1817.0" y1="0" y2="0"><stop offset="0.000" stop-color="#006099"/><stop offset="0.182" stop-color="#005499"/><stop offset="0.244" stop-color="#104e99"/><stop offset="0.326" stop-color="#404699"/><stop offset="0.365" stop-color="#644199"/><stop offset="0.410" stop-color="#993995"/><stop offset="0.436" stop-color="#992a76"/><stop offset="0.476" stop-color="#991b55"/><stop offset="0.537" stop-color="#990c34"/><stop offset="0.596" stop-color="#990521"/><stop offset="0.759" stop-color="#990008"/><stop offset="1.000" stop-color="#990000"/></linearGradient>
<linearGradient id="c116" gradientUnits="userSpaceOnUse" x1="1204.7" x2="1817.0" y1="0" y2="0"><stop offset="0.000" stop-color="#005c99"/><stop offset="0.179" stop-color="#004f99"/><stop offset="0.238" stop-color="#0e4a99"/><stop offset="0.329" stop-color="#434099"/><stop offset="0.410" stop-color="#993497"/><stop offset="0.440" stop-color="#992574"/><stop offset="0.479" stop-color="#991754"/><stop offset="0.537" stop-color="#990b35"/><stop offset="0.599" stop-color="#990421"/><stop offset="0.775" stop-color="#990007"/><stop offset="1.000" stop-color="#990000"/></linearGradient>
<linearGradient id="c117" gradientUnits="userSpaceOnUse" x1="1205.8" x2="1813.9" y1="0" y2="0"><stop offset="0.000" stop-color="#005899"/><stop offset="0.180" stop-color="#004b99"/><stop offset="0.243" stop-color="#104599"/><stop offset="0.285" stop-color="#244199"/><stop offset="0.334" stop-color="#463b99"/><stop offset="0.413" stop-color="#993097"/><stop offset="0.459" stop-color="#991b66"/><stop offset="0.508" stop-color="#990f45"/><stop offset="0.610" stop-color="#990220"/><stop offset="0.761" stop-color="#990009"/><stop offset="1.000" stop-color="#990000"/></linearGradient>
<linearGradient id="c118" gradientUnits="userSpaceOnUse" x1="1206.9" x2="1804.5" y1="0" y2="0"><stop offset="0.000" stop-color="#005599"/><stop offset="0.181" stop-color="#004799"/><stop offset="0.251" stop-color="#124099"/><stop offset="0.334" stop-color="#423799"/><stop offset="0.421" stop-color="#992a96"/><stop offset="0.462" stop-color="#991a6b"/><stop offset="0.518" stop-color="#990c45"/><stop offset="0.619" stop-color="#990221"/><stop offset="0.779" stop-color="#990009"/><stop offset="1.000" stop-color="#990000"/></linearGradient>
<linearGradient id="c119" gradientUnits="userSpaceOnUse" x1="1207.9" x2="1795.1" y1="0" y2="0"><stop offset="0.000" stop-color="#005199"/><stop offset="0.180" stop-color="#004399"/><stop offset="0.248" stop-color="#103d99"/><stop offset="0.344" stop-color="#453299"/><stop offset="0.429" stop-color="#992697"/><stop offset="0.459" stop-color="#991a75"/><stop offset="0.493" stop-color="#99115a"/><stop offset="0.558" stop-color="#990638"/><stop offset="0.612" stop-color="#990226"/><stop offset="0.765" stop-color="#99000c"/><stop offset="1.000" stop-color="#990000"/></linearGradient>
<linearGradient id="c120" gradientUnits="userSpaceOnUse" x1="1209.0" x2="1785.7" y1="0" y2="0"><stop offset="0.000" stop-color="#004d99"/><stop offset="0.180" stop-color="#004099"/><stop offset="0.242" stop-color="#0d3a99"/><stop offset="0.343" stop-color="#402f99"/><stop offset="0.384" stop-color="#622a99"/><stop offset="0.436" stop-color="#992297"/><stop offset="0.471" stop-color="#991673"/><stop offset="0.516" stop-color="#990c52"/><stop offset="0.633" stop-color="#990124"/><stop offset="0.803" stop-color="#99000a"/><stop offset="1.000" stop-color="#990001"/></linearGradient>
<linearGradient id="c121" gradientUnits="userSpaceOnUse" x1="1210.1" x2="1776.3" y1="0" y2="0"><stop offset="0.000" stop-color="#004a99"/><stop offset="0.183" stop-color="#003c99"/><stop offset="0.254" stop-color="#103599"/><stop offset="0.303" stop-color="#253099"/><stop offset="0.359" stop-color="#482a99"/><stop offset="0.444" stop-color="#991e98"/><stop offset="0.493" stop-color="#991068"/><stop offset="0.535" stop-color="#99094d"/><stop offset="0.651" stop-color="#990023"/><stop offset="0.771" stop-color="#99000f"/><stop offset="1.000" stop-color="#990001"/></linearGradient>
<linearGradient id="c122" gradientUnits="userSpaceOnUse" x1="1211.2" x2="1766.9" y1="0" y2="0"><stop offset="0.000" stop-color="#004799"/><stop offset="0.183" stop-color="#003999"/><stop offset="0.263" stop-color="#123199"/><stop offset="0.309" stop-color="#262c99"/><stop offset="0.371" stop-color="#4c2599"/><stop offset="0.453" stop-color="#991a97"/><stop offset="0.496" stop-color="#990f6d"/><stop offset="0.550" stop-color="#99064b"/><stop offset="0.662" stop-color="#990024"/><stop offset="0.799" stop-color="#99000e"/><stop offset="1.000" stop-color="#990002"/></linearGradient>
<linearGradient id="c123" gradientUnits="userSpaceOnUse" x1="1212.3" x2="1757.5" y1="0" y2="0"><stop offset="0.000" stop-color="#004399"/><stop offset="0.183" stop-color="#003699"/><stop offset="0.256" stop-color="#0f2f99"/><stop offset="0.363" stop-color="#422499"/><stop offset="0.418" stop-color="#6d1d99"/><stop offset="0.462" stop-color="#991797"/><stop offset="0.535" stop-color="#99085a"/><stop offset="0.619" stop-color="#990134"/><stop offset="0.791" stop-color="#990011"/><stop offset="1.000" stop-color="#990003"/></linearGradient>
<linearGradient id="c124" gradientUnits="userSpaceOnUse" x1="1213.3" x2="1748.2" y1="0" y2="0"><stop offset="0.000" stop-color="#004099"/><stop offset="0.183" stop-color="#003399"/><stop offset="0.269" stop-color="#122b99"/><stop offset="0.321" stop-color="#272599"/><stop offset="0.388" stop-color="#4f1e99"/><stop offset="0.470" stop-color="#991498"/><stop offset="0.541" stop-color="#99075d"/><stop offset="0.649" stop-color="#99002f"/><stop offset="0.810" stop-color="#990011"/><stop offset="1.000" stop-color="#990004"/></linearGradient>
<linearGradient id="c125" gradientUnits="userSpaceOnUse" x1="1214.4" x2="1738.8" y1="0" y2="0"><stop offset="0.000" stop-color="#003d99"/><stop offset="0.186" stop-color="#002f99"/><stop offset="0.266" stop-color="#102899"/><stop offset="0.380" stop-color="#451c99"/><stop offset="0.437" stop-color="#701699"/><stop offset="0.479" stop-color="#991199"/><stop offset="0.551" stop-color="#99055e"/><stop offset="0.654" stop-color="#990032"/><stop offset="0.821" stop-color="#990012"/><stop offset="1.000" stop-color="#990005"/></linearGradient>
<linearGradient id="c126" gradientUnits="userSpaceOnUse" x1="1215.5" x2="1729.4" y1="0" y2="0"><stop offset="0.000" stop-color="#003a99"/><stop offset="0.187" stop-color="#002c99"/><stop offset="0.276" stop-color="#122599"/><stop offset="0.385" stop-color="#441a99"/><stop offset="0.444" stop-color="#6e1399"/><stop offset="0.490" stop-color="#990e97"/><stop offset="0.572" stop-color="#990359"/><stop offset="0.669" stop-color="#990032"/><stop offset="0.802" stop-color="#990017"/><stop offset="1.000" stop-color="#990006"/></linearGradient>
<linearGradient id="c127" gradientUnits="userSpaceOnUse" x1="1216.6" x2="1720.0" y1="0" y2="0"><stop offset="0.000" stop-color="#003799"/><stop offset="0.187" stop-color="#002a99"/><stop offset="0.290" stop-color="#152199"/><stop offset="0.401" stop-color="#491699"/><stop offset="0.500" stop-color="#990b98"/><stop offset="0.579" stop-color="#99025c"/><stop offset="0.679" stop-color="#990034"/><stop offset="0.829" stop-color="#990016"/><stop offset="1.000" stop-color="#990007"/></linearGradient>
<linearGradient id="c128" gradientUnits="userSpaceOnUse" x1="1217.6" x2="1710.6" y1="0" y2="0"><stop offset="0.000" stop-color="#003599"/><stop offset="0.190" stop-color="#002799"/><stop offset="0.287" stop-color="#131f99"/><stop offset="0.397" stop-color="#421499"/><stop offset="0.466" stop-color="#710e99"/><stop offset="0.510" stop-color="#990999"/><stop offset="0.591" stop-color="#99015d"/><stop offset="0.688" stop-color="#990036"/><stop offset="0.822" stop-color="#99001a"/><stop offset="1.000" stop-color="#990009"/></linearGradient>
<linearGradient id="c129" gradientUnits="userSpaceOnUse" x1="1218.7" x2="1701.2" y1="0" y2="0"><stop offset="0.000" stop-color="#003299"/><stop offset="0.190" stop-color="#002499"/><stop offset="0.302" stop-color="#161b99"/><stop offset="0.413" stop-color="#471199"/><stop offset="0.521" stop-color="#980799"/><stop offset="0.599" stop-color="#990160"/><stop offset="0.698" stop-color="#990038"/><stop offset="0.822" stop-color="#99001d"/><stop offset="1.000" stop-color="#99000b"/></linearGradient>
<linearGradient id="c130" gradientUnits="userSpaceOnUse" x1="1219.9" x2="1691.8" y1="0" y2="0"><stop offset="0.000" stop-color="#002f99"/><stop offset="0.191" stop-color="#002299"/><stop offset="0.292" stop-color="#121a99"/><stop offset="0.419" stop-color="#460f99"/><stop offset="0.483" stop-color="#6f0999"/><stop offset="0.530" stop-color="#960599"/><stop offset="0.606" stop-color="#990064"/><stop offset="0.712" stop-color="#990039"/><stop offset="0.843" stop-color="#99001d"/><stop offset="1.000" stop-color="#99000d"/></linearGradient>
<linearGradient id="c131" gradientUnits="userSpaceOnUse" x1="1221.3" x2="1682.4" y1="0" y2="0"><stop offset="0.000" stop-color="#002d99"/><stop offset="0.190" stop-color="#002099"/><stop offset="0.307" stop-color="#151799"/><stop offset="0.433" stop-color="#490c99"/><stop offset="0.489" stop-color="#6c0899"/><stop offset="0.541" stop-color="#960499"/><stop offset="0.632" stop-color="#99005e"/><stop offset="0.723" stop-color="#99003b"/><stop offset="0.840" stop-color="#990021"/><stop offset="1.000" stop-color="#99000f"/></linearGradient>
<linearGradient id="c132" gradientUnits="userSpaceOnUse" x1="1222.8" x2="1673.0" y1="0" y2="0"><stop offset="0.000" stop-color="#002a99"/><stop offset="0.190" stop-color="#001e99"/><stop offset="0.319" stop-color="#171499"/><stop offset="0.451" stop-color="#4e0a99"/><stop offset="0.558" stop-color="#990299"/><stop offset="0.637" stop-color="#990063"/><stop offset="0.721" stop-color="#990041"/><stop offset="0.827" stop-color="#990027"/><stop offset="1.000" stop-color="#990011"/></linearGradient>
<linearGradient id="c133" gradientUnits="userSpaceOnUse" x1="1224.2" x2="1663.6" y1="0" y2="0"><stop offset="0.000" stop-color="#002899"/><stop offset="0.205" stop-color="#011b99"/><stop offset="0.327" stop-color="#181299"/><stop offset="0.445" stop-color="#460999"/><stop offset="0.500" stop-color="#650599"/><stop offset="0.568" stop-color="#970199"/><stop offset="0.645" stop-color="#990067"/><stop offset="0.750" stop-color="#99003e"/><stop offset="0.850" stop-color="#990027"/><stop offset="1.000" stop-color="#990014"/></linearGradient>
<linearGradient id="c134" gradientUnits="userSpaceOnUse" x1="1225.7" x2="1654.3" y1="0" y2="0"><stop offset="0.000" stop-color="#002599"/><stop offset="0.195" stop-color="#001999"/><stop offset="0.321" stop-color="#151199"/><stop offset="0.447" stop-color="#420899"/><stop offset="0.516" stop-color="#680399"/><stop offset="0.581" stop-color="#970099"/><stop offset="0.670" stop-color="#990063"/><stop offset="0.753" stop-color="#990043"/><stop offset="0.879" stop-color="#990026"/><stop offset="1.000" stop-color="#990016"/></linearGradient>
<linearGradient id="c135" gradientUnits="userSpaceOnUse" x1="1227.1" x2="1644.9" y1="0" y2="0"><stop offset="0.000" stop-color="#002399"/><stop offset="0.196" stop-color="#001799"/><stop offset="0.330" stop-color="#160e99"/><stop offset="0.469" stop-color="#480599"/><stop offset="0.598" stop-color="#980099"/><stop offset="0.665" stop-color="#99006e"/><stop offset="0.751" stop-color="#99004a"/><stop offset="0.876" stop-color="#99002b"/><stop offset="1.000" stop-color="#990019"/></linearGradient>
<linearGradient id="c136" gradientUnits="userSpaceOnUse" x1="1228.6" x2="1635.5" y1="0" y2="0"><stop offset="0.000" stop-color="#002199"/><stop offset="0.211" stop-color="#011499"/><stop offset="0.348" stop-color="#190c99"/><stop offset="0.490" stop-color="#4d0399"/><stop offset="0.613" stop-color="#980099"/><stop offset="0.691" stop-color="#99006a"/><stop offset="0.760" stop-color="#99004e"/><stop offset="0.843" stop-color="#990037"/><stop offset="1.000" stop-color="#99001d"/></linearGradient>
<linearGradient id="c137" gradientUnits="userSpaceOnUse" x1="1230.0" x2="1626.1" y1="0" y2="0"><stop offset="0.000" stop-color="#001f99"/><stop offset="0.196" stop-color="#001499"/><stop offset="0.342" stop-color="#160b99"/><stop offset="0.497" stop-color="#4b0299"/><stop offset="0.628" stop-color="#980099"/><stop offset="0.704" stop-color="#99006d"/><stop offset="0.794" stop-color="#99004a"/><stop offset="1.000" stop-color="#990021"/></linearGradient>
<linearGradient id="c138" gradientUnits="userSpaceOnUse" x1="1231.5" x2="1616.7" y1="0" y2="0"><stop offset="0.000" stop-color="#001c99"/><stop offset="0.212" stop-color="#011199"/><stop offset="0.352" stop-color="#170999"/><stop offset="0.503" stop-color="#480299"/><stop offset="0.648" stop-color="#990099"/><stop offset="0.705" stop-color="#990076"/><stop offset="0.798" stop-color="#990050"/><stop offset="1.000" stop-color="#990025"/></linearGradient>
<linearGradient id="c139" gradientUnits="userSpaceOnUse" x1="1232.9" x2="1607.3" y1="0" y2="0"><stop offset="0.000" stop-color="#001a99"/><stop offset="0.213" stop-color="#010f99"/><stop offset="0.372" stop-color="#1a0799"/><stop offset="0.527" stop-color="#4d0199"/><stop offset="0.665" stop-color="#990099"/><stop offset="0.723" stop-color="#990077"/><stop offset="0.803" stop-color="#990056"/><stop offset="1.000" stop-color="#990029"/></linearGradient>
<linearGradient id="c140" gradientUnits="userSpaceOnUse" x1="1234.4" x2="1597.9" y1="0" y2="0"><stop offset="0.000" stop-color="#001899"/><stop offset="0.198" stop-color="#000f99"/><stop offset="0.357" stop-color="#150799"/><stop offset="0.533" stop-color="#4a0099"/><stop offset="0.681" stop-color="#970099"/><stop offset="0.824" stop-color="#990057"/><stop offset="1.000" stop-color="#99002e"/></linearGradient>
<linearGradient id="c141" gradientUnits="userSpaceOnUse" x1="1235.8" x2="1588.5" y1="0" y2="0"><stop offset="0.000" stop-color="#001799"/><stop offset="0.232" stop-color="#020c99"/><stop offset="0.379" stop-color="#180599"/><stop offset="0.542" stop-color="#480099"/><stop offset="0.633" stop-color="#700099"/><stop offset="0.701" stop-color="#970099"/><stop offset="0.853" stop-color="#990056"/><stop offset="1.000" stop-color="#990034"/></linearGradient>
<linearGradient id="c142" gradientUnits="userSpaceOnUse" x1="1237.2" x2="1579.1" y1="0" y2="0"><stop offset="0.000" stop-color="#001599"/><stop offset="0.234" stop-color="#020a99"/><stop offset="0.392" stop-color="#190499"/><stop offset="0.573" stop-color="#4e0099"/><stop offset="0.725" stop-color="#980099"/><stop offset="0.830" stop-color="#990067"/><stop offset="1.000" stop-color="#99003a"/></linearGradient>
<linearGradient id="c143" gradientUnits="userSpaceOnUse" x1="1238.7" x2="1569.7" y1="0" y2="0"><stop offset="0.000" stop-color="#001399"/><stop offset="0.223" stop-color="#010a99"/><stop offset="0.416" stop-color="#1c0299"/><stop offset="0.584" stop-color="#4c0099"/><stop offset="0.747" stop-color="#980099"/><stop offset="0.849" stop-color="#99006a"/><stop offset="1.000" stop-color="#990040"/></linearGradient>
<linearGradient id="c144" gradientUnits="userSpaceOnUse" x1="1240.2" x2="1560.4" y1="0" y2="0"><stop offset="0.000" stop-color="#001199"/><stop offset="0.224" stop-color="#010899"/><stop offset="0.410" stop-color="#190299"/><stop offset="0.590" stop-color="#480099"/><stop offset="0.770" stop-color="#970099"/><stop offset="0.870" stop-color="#99006d"/><stop offset="1.000" stop-color="#990048"/></linearGradient>
<linearGradient id="c145" gradientUnits="userSpaceOnUse" x1="1242.0" x2="1551.0" y1="0" y2="0"><stop offset="0.000" stop-color="#001099"/><stop offset="0.226" stop-color="#010799"/><stop offset="0.426" stop-color="#1a0199"/><stop offset="0.626" stop-color="#4e0099"/><stop offset="0.800" stop-color="#990099"/><stop offset="0.884" stop-color="#990073"/><stop offset="1.000" stop-color="#990050"/></linearGradient>
<linearGradient id="c146" gradientUnits="userSpaceOnUse" x1="1243.7" x2="1541.6" y1="0" y2="0"><stop offset="0.000" stop-color="#000e99"/><stop offset="0.242" stop-color="#020699"/><stop offset="0.436" stop-color="#1a0099"/><stop offset="0.658" stop-color="#520099"/><stop offset="0.826" stop-color="#980099"/><stop offset="1.000" stop-color="#990059"/></linearGradient>
<linearGradient id="c147" gradientUnits="userSpaceOnUse" x1="1245.5" x2="1532.2" y1="0" y2="0"><stop offset="0.000" stop-color="#000d99"/><stop offset="0.229" stop-color="#010599"/><stop offset="0.465" stop-color="#1d0099"/><stop offset="0.674" stop-color="#500099"/><stop offset="0.854" stop-color="#970099"/><stop offset="1.000" stop-color="#990064"/></linearGradient>
<linearGradient id="c148" gradientUnits="userSpaceOnUse" x1="1247.2" x2="1522.8" y1="0" y2="0"><stop offset="0.000" stop-color="#000b99"/><stop offset="0.246" stop-color="#020499"/><stop offset="0.442" stop-color="#170099"/><stop offset="0.667" stop-color="#470099"/><stop offset="0.884" stop-color="#960099"/><stop offset="1.000" stop-color="#99006f"/></linearGradient>
<linearGradient id="c149" gradientUnits="userSpaceOnUse" x1="1248.9" x2="1513.4" y1="0" y2="0"><stop offset="0.000" stop-color="#000a99"/><stop offset="0.233" stop-color="#010399"/><stop offset="0.474" stop-color="#1a0099"/><stop offset="0.737" stop-color="#540099"/><stop offset="0.925" stop-color="#990099"/><stop offset="1.000" stop-color="#99007c"/></linearGradient>
<linearGradient id="c150" gradientUnits="userSpaceOnUse" x1="1250.7" x2="1504.0" y1="0" y2="0"><stop offset="0.000" stop-color="#000999"/><stop offset="0.252" stop-color="#020299"/><stop offset="0.496" stop-color="#1b0099"/><stop offset="0.732" stop-color="#4b0099"/><stop offset="0.961" stop-color="#980099"/><stop offset="1.000" stop-color="#99008b"/></linearGradient>
<linearGradient id="c151" gradientUnits="userSpaceOnUse" x1="1252.4" x2="1494.6" y1="0" y2="0"><stop offset="0.000" stop-color="#000799"/><stop offset="0.238" stop-color="#010299"/><stop offset="0.533" stop-color="#1e0099"/><stop offset="0.811" stop-color="#580099"/><stop offset="1.000" stop-color="#970099"/></linearGradient>
<linearGradient id="c152" gradientUnits="userSpaceOnUse" x1="1254.1" x2="1485.2" y1="0" y2="0"><stop offset="0.000" stop-color="#000699"/><stop offset="0.259" stop-color="#020199"/><stop offset="0.500" stop-color="#170099"/><stop offset="0.759" stop-color="#430099"/><stop offset="1.000" stop-color="#860099"/></linearGradient>
<linearGradient id="c153" gradientUnits="userSpaceOnUse" x1="1255.9" x2="1475.8" y1="0" y2="0"><stop offset="0.000" stop-color="#000599"/><stop offset="0.264" stop-color="#020199"/><stop offset="0.518" stop-color="#170099"/><stop offset="0.782" stop-color="#410099"/><stop offset="1.000" stop-color="#780099"/></linearGradient>
<linearGradient id="c154" gradientUnits="userSpaceOnUse" x1="1258.1" x2="1466.5" y1="0" y2="0"><stop offset="0.000" stop-color="#000499"/><stop offset="0.267" stop-color="#020099"/><stop offset="0.571" stop-color="#1b0099"/><stop offset="0.829" stop-color="#430099"/><stop offset="1.000" stop-color="#6a0099"/></linearGradient>
<linearGradient id="c155" gradientUnits="userSpaceOnUse" x1="1260.2" x2="1457.1" y1="0" y2="0"><stop offset="0.000" stop-color="#000399"/><stop offset="0.212" stop-color="#000099"/><stop offset="0.475" stop-color="#0f0099"/><stop offset="0.788" stop-color="#350099"/><stop offset="1.000" stop-color="#5e0099"/></linearGradient>
<linearGradient id="c156" gradientUnits="userSpaceOnUse" x1="1262.4" x2="1447.7" y1="0" y2="0"><stop offset="0.000" stop-color="#000299"/><stop offset="0.247" stop-color="#010099"/><stop offset="0.505" stop-color="#100099"/><stop offset="0.742" stop-color="#290099"/><stop offset="1.000" stop-color="#530099"/></linearGradient>
<linearGradient id="c157" gradientUnits="userSpaceOnUse" x1="1264.6" x2="1438.3" y1="0" y2="0"><stop offset="0.000" stop-color="#000299"/><stop offset="0.207" stop-color="#000099"/><stop offset="0.471" stop-color="#0c0099"/><stop offset="0.747" stop-color="#250099"/><stop offset="1.000" stop-color="#490099"/></linearGradient>
<linearGradient id="c158" gradientUnits="userSpaceOnUse" x1="1266.8" x2="1428.9" y1="0" y2="0"><stop offset="0.000" stop-color="#000199"/><stop offset="0.476" stop-color="#0b0099"/><stop offset="0.720" stop-color="#1e0099"/><stop offset="1.000" stop-color="#400099"/></linearGradient>
<linearGradient id="c159" gradientUnits="userSpaceOnUse" x1="1269.0" x2="1419.5" y1="0" y2="0"><stop offset="0.000" stop-color="#000099"/><stop offset="0.461" stop-color="#090099"/><stop offset="1.000" stop-color="#370099"/></linearGradient>
<linearGradient id="c160" gradientUnits="userSpaceOnUse" x1="1271.8" x2="1410.1" y1="0" y2="0"><stop offset="0.000" stop-color="#000099"/><stop offset="0.500" stop-color="#0a0099"/><stop offset="1.000" stop-color="#300099"/></linearGradient>
<linearGradient id="c161" gradientUnits="userSpaceOnUse" x1="1274.6" x2="1400.7" y1="0" y2="0"><stop offset="0.000" stop-color="#000099"/><stop offset="0.453" stop-color="#070099"/><stop offset="1.000" stop-color="#290099"/></linearGradient>
<linearGradient id="c162" gradientUnits="userSpaceOnUse" x1="1277.3" x2="1391.3" y1="0" y2="0"><stop offset="0.000" stop-color="#000099"/><stop offset="0.448" stop-color="#060099"/><stop offset="1.000" stop-color="#230099"/></linearGradient>
<linearGradient id="c163" gradientUnits="userSpaceOnUse" x1="1280.5" x2="1381.9" y1="0" y2="0"><stop offset="0.000" stop-color="#000099"/><stop offset="0.471" stop-color="#060099"/><stop offset="1.000" stop-color="#1d0099"/></linearGradient>
<linearGradient id="c164" gradientUnits="userSpaceOnUse" x1="1284.1" x2="1372.6" y1="0" y2="0"><stop offset="0.000" stop-color="#000099"/><stop offset="0.533" stop-color="#070099"/><stop offset="1.000" stop-color="#180099"/></linearGradient>
<linearGradient id="c165" gradientUnits="userSpaceOnUse" x1="1288.0" x2="1363.2" y1="0" y2="0"><stop offset="0.000" stop-color="#000099"/><stop offset="1.000" stop-color="#130099"/></linearGradient>
<linearGradient id="c166" gradientUnits="userSpaceOnUse" x1="1292.4" x2="1353.8" y1="0" y2="0"><stop offset="0.000" stop-color="#000099"/><stop offset="1.000" stop-color="#0f0099"/></linearGradient>
<linearGradient id="c167" gradientUnits="userSpaceOnUse" x1="1297.2" x2="1344.4" y1="0" y2="0"><stop offset="0.000" stop-color="#000099"/><stop offset="1.000" stop-color="#0c0099"/></linearGradient>
<linearGradient id="c168" gradientUnits="userSpaceOnUse" x1="1302.2" x2="1335.0" y1="0" y2="0"><stop offset="0.000" stop-color="#010099"/><stop offset="1.000" stop-color="#090099"/></linearGradient>
<linearGradient id="c169" gradientUnits="userSpaceOnUse" x1="1307.1" x2="1325.6" y1="0" y2="0"><stop offset="0.000" stop-color="#020099"/><stop offset="1.000" stop-color="#060099"/></linearGradient>
<linearGradient id="c170" gradientUnits="userSpaceOnUse" x1="1344.7" x2="1355.5" y1="0" y2="0"><stop offset="0.000" stop-color="#00ff00"/><stop offset="1.000" stop-color="#01ff00"/></linearGradient>
<linearGradient id="c171" gradientUnits="userSpaceOnUse" x1="1344.3" x2="1360.5" y1="0" y2="0"><stop offset="0.000" stop-color="#00ff00"/><stop offset="1.000" stop-color="#01ff00"/></linearGradient>
<linearGradient id="c172" gradientUnits="userSpaceOnUse" x1="1343.9" x2="1365.4" y1="0" y2="0"><stop offset="0.000" stop-color="#00ff00"/><stop offset="1.000" stop-color="#02ff00"/></linearGradient>
<linearGradient id="c173" gradientUnits="userSpaceOnUse" x1="1343.5" x2="1370.3" y1="0" y2="0"><stop offset="0.000" stop-color="#00ff01"/><stop offset="1.000" stop-color="#04ff00"/></linearGradient>
<linearGradient id="c174" gradientUnits="userSpaceOnUse" x1="1343.1" x2="1375.3" y1="0" y2="0"><stop offset="0.000" stop-color="#00ff01"/><stop offset="1.000" stop-color="#05ff00"/></linearGradient>
<linearGradient id="c175" gradientUnits="userSpaceOnUse" x1="1342.7" x2="1380.2" y1="0" y2="0"><stop offset="0.000" stop-color="#00ff01"/><stop offset="1.000" stop-color="#07ff00"/></linearGradient>
<linearGradient id="c176" gradientUnits="userSpaceOnUse" x1="1342.3" x2="1385.1" y1="0" y2="0"><stop offset="0.000" stop-color="#00ff02"/><stop offset="1.000" stop-color="#08ff00"/></linearGradient>
<linearGradient id="c177" gradientUnits="userSpaceOnUse" x1="1341.9" x2="1390.1" y1="0" y2="0"><stop offset="0.000" stop-color="#00ff02"/><stop offset="1.000" stop-color="#0aff00"/></linearGradient>
<linearGradient id="c178" gradientUnits="userSpaceOnUse" x1="1341.5" x2="1395.0" y1="0" y2="0"><stop offset="0.000" stop-color="#00ff03"/><stop offset="1.000" stop-color="#0cff00"/></linearGradient>
<linearGradient id="c179" gradientUnits="userSpaceOnUse" x1="1341.1" x2="1399.9" y1="0" y2="0"><stop offset="0.000" stop-color="#00ff03"/><stop offset="1.000" stop-color="#0fff00"/></linearGradient>
<linearGradient id="c180" gradientUnits="userSpaceOnUse" x1="1340.7" x2="1404.9" y1="0" y2="0"><stop offset="0.000" stop-color="#00ff04"/><stop offset="1.000" stop-color="#11ff00"/></linearGradient>
<linearGradient id="c181" gradientUnits="userSpaceOnUse" x1="1340.3" x2="1409.8" y1="0" y2="0"><stop offset="0.000" stop-color="#00ff04"/><stop offset="1.000" stop-color="#14ff00"/></linearGradient>
<linearGradient id="c182" gradientUnits="userSpaceOnUse" x1="1339.9" x2="1414.7" y1="0" y2="0"><stop offset="0.000" stop-color="#00ff05"/><stop offset="1.000" stop-color="#17ff00"/></linearGradient>
<linearGradient id="c183" gradientUnits="userSpaceOnUse" x1="1339.5" x2="1419.7" y1="0" y2="0"><stop offset="0.000" stop-color="#00ff06"/><stop offset="0.512" stop-color="#08ff02"/><stop offset="1.000" stop-color="#1aff00"/></linearGradient>
<linearGradient id="c184" gradientUnits="userSpaceOnUse" x1="1339.1" x2="1424.6" y1="0" y2="0"><stop offset="0.000" stop-color="#00ff06"/><stop offset="0.442" stop-color="#07ff03"/><stop offset="1.000" stop-color="#1eff00"/></linearGradient>
<linearGradient id="c185" gradientUnits="userSpaceOnUse" x1="1338.7" x2="1429.5" y1="0" y2="0"><stop offset="0.000" stop-color="#00ff07"/><stop offset="0.413" stop-color="#07ff03"/><stop offset="1.000" stop-color="#22ff00"/></linearGradient>
<linearGradient id="c186" gradientUnits="userSpaceOnUse" x1="1338.3" x2="1434.5" y1="0" y2="0"><stop offset="0.000" stop-color="#00ff08"/><stop offset="0.469" stop-color="#0aff03"/><stop offset="1.000" stop-color="#26ff00"/></linearGradient>
<linearGradient id="c187" gradientUnits="userSpaceOnUse" x1="1337.9" x2="1439.4" y1="0" y2="0"><stop offset="0.000" stop-color="#00ff09"/><stop offset="0.490" stop-color="#0cff03"/><stop offset="1.000" stop-color="#2aff00"/></linearGradient>
<linearGradient id="c188" gradientUnits="userSpaceOnUse" x1="1337.5" x2="1444.3" y1="0" y2="0"><stop offset="0.000" stop-color="#00ff0a"/><stop offset="0.463" stop-color="#0cff04"/><stop offset="1.000" stop-color="#2fff00"/></linearGradient>
<linearGradient id="c189" gradientUnits="userSpaceOnUse" x1="1337.1" x2="1449.3" y1="0" y2="0"><stop offset="0.000" stop-color="#00ff0b"/><stop offset="0.456" stop-color="#0dff04"/><stop offset="1.000" stop-color="#34ff00"/></linearGradient>
<linearGradient id="c190" gradientUnits="userSpaceOnUse" x1="1336.7" x2="1454.2" y1="0" y2="0"><stop offset="0.000" stop-color="#00ff0c"/><stop offset="0.373" stop-color="#0aff06"/><stop offset="1.000" stop-color="#39ff00"/></linearGradient>
<linearGradient id="c191" gradientUnits="userSpaceOnUse" x1="1336.3" x2="1459.1" y1="0" y2="0"><stop offset="0.000" stop-color="#00ff0d"/><stop offset="0.290" stop-color="#07ff08"/><stop offset="0.597" stop-color="#19ff03"/><stop offset="1.000" stop-color="#3fff00"/></linearGradient>
<linearGradient id="c192" gradientUnits="userSpaceOnUse" x1="1335.9" x2="1464.1" y1="0" y2="0"><stop offset="0.000" stop-color="#00ff0e"/><stop offset="0.231" stop-color="#05ff0a"/><stop offset="0.554" stop-color="#18ff04"/><stop offset="1.000" stop-color="#45ff00"/></linearGradient>
<linearGradient id="c193" gradientUnits="userSpaceOnUse" x1="1335.5" x2="1469.0" y1="0" y2="0"><stop offset="0.000" stop-color="#00ff0f"/><stop offset="0.448" stop-color="#12ff06"/><stop offset="1.000" stop-color="#4bff00"/></linearGradient>
<linearGradient id="c194" gradientUnits="userSpaceOnUse" x1="1335.1" x2="1473.9" y1="0" y2="0"><stop offset="0.000" stop-color="#00ff10"/><stop offset="0.229" stop-color="#06ff0b"/><stop offset="0.514" stop-color="#19ff06"/><stop offset="1.000" stop-color="#52ff00"/></linearGradient>
<linearGradient id="c195" gradientUnits="userSpaceOnUse" x1="1334.7" x2="1478.9" y1="0" y2="0"><stop offset="0.000" stop-color="#00ff11"/><stop offset="0.479" stop-color="#18ff07"/><stop offset="0.767" stop-color="#37ff02"/><stop offset="1.000" stop-color="#5aff00"/></linearGradient>
<linearGradient id="c196" gradientUnits="userSpaceOnUse" x1="1334.3" x2="1483.8" y1="0" y2="0"><stop offset="0.000" stop-color="#00ff13"/><stop offset="0.227" stop-color="#07ff0d"/><stop offset="0.480" stop-color="#1aff07"/><stop offset="0.747" stop-color="#39ff02"/><stop offset="1.000" stop-color="#62ff00"/></linearGradient>
<linearGradient id="c197" gradientUnits="userSpaceOnUse" x1="1333.8" x2="1488.7" y1="0" y2="0"><stop offset="0.000" stop-color="#00ff14"/><stop offset="0.282" stop-color="#0bff0d"/><stop offset="0.526" stop-color="#21ff07"/><stop offset="0.769" stop-color="#41ff02"/><stop offset="1.000" stop-color="#6aff00"/></linearGradient>
<linearGradient id="c198" gradientUnits="userSpaceOnUse" x1="1333.4" x2="1493.7" y1="0" y2="0"><stop offset="0.000" stop-color="#00ff15"/><stop offset="0.210" stop-color="#07ff10"/><stop offset="0.494" stop-color="#20ff08"/><stop offset="0.802" stop-color="#4cff02"/><stop offset="1.000" stop-color="#73ff00"/></linearGradient>
<linearGradient id="c199" gradientUnits="userSpaceOnUse" x1="1333.0" x2="1498.6" y1="0" y2="0"><stop offset="0.000" stop-color="#00ff17"/><stop offset="0.217" stop-color="#08ff11"/><stop offset="0.554" stop-color="#2aff07"/><stop offset="0.747" stop-color="#48ff03"/><stop offset="1.000" stop-color="#7dff00"/></linearGradient>
<linearGradient id="c200" gradientUnits="userSpaceOnUse" x1="1332.6" x2="1503.5" y1="0" y2="0"><stop offset="0.000" stop-color="#00ff18"/><stop offset="0.221" stop-color="#09ff12"/><stop offset="0.523" stop-color="#29ff09"/><stop offset="0.779" stop-color="#54ff03"/><stop offset="1.000" stop-color="#88ff00"/></linearGradient>
<linearGradient id="c201" gradientUnits="userSpaceOnUse" x1="1332.2" x2="1508.5" y1="0" y2="0"><stop offset="0.000" stop-color="#00ff1a"/><stop offset="0.213" stop-color="#09ff13"/><stop offset="0.517" stop-color="#2bff0a"/><stop offset="0.753" stop-color="#55ff03"/><stop offset="1.000" stop-color="#93ff00"/></linearGradient>
<linearGradient id="c202" gradientUnits="userSpaceOnUse" x1="1331.8" x2="1513.4" y1="0" y2="0"><stop offset="0.000" stop-color="#00ff1c"/><stop offset="0.242" stop-color="#0cff13"/><stop offset="0.516" stop-color="#2eff0a"/><stop offset="0.780" stop-color="#62ff03"/><stop offset="1.000" stop-color="#9fff00"/></linearGradient>
<linearGradient id="c203" gradientUnits="userSpaceOnUse" x1="1331.4" x2="1518.4" y1="0" y2="0"><stop offset="0.000" stop-color="#00ff1d"/><stop offset="0.319" stop-color="#15ff12"/><stop offset="0.532" stop-color="#34ff0b"/><stop offset="0.755" stop-color="#63ff04"/><stop offset="1.000" stop-color="#acff00"/></linearGradient>
<linearGradient id="c204" gradientUnits="userSpaceOnUse" x1="1331.0" x2="1523.3" y1="0" y2="0"><stop offset="0.000" stop-color="#00ff1f"/><stop offset="0.268" stop-color="#11ff15"/><stop offset="0.485" stop-color="#2fff0d"/><stop offset="0.742" stop-color="#67ff05"/><stop offset="1.000" stop-color="#baff00"/></linearGradient>
<linearGradient id="c205" gradientUnits="userSpaceOnUse" x1="1330.6" x2="1528.2" y1="0" y2="0"><stop offset="0.000" stop-color="#00ff21"/><stop offset="0.263" stop-color="#11ff17"/><stop offset="0.586" stop-color="#47ff0a"/><stop offset="0.788" stop-color="#7cff04"/><stop offset="1.000" stop-color="#c9ff00"/></linearGradient>
<linearGradient id="c206" gradientUnits="userSpaceOnUse" x1="1330.2" x2="1533.2" y1="0" y2="0"><stop offset="0.000" stop-color="#00ff23"/><stop offset="0.235" stop-color="#0fff19"/><stop offset="0.529" stop-color="#3fff0d"/><stop offset="0.775" stop-color="#81ff04"/><stop offset="1.000" stop-color="#d9ff00"/></linearGradient>
<linearGradient id="c207" gradientUnits="userSpaceOnUse" x1="1329.8" x2="1538.1" y1="0" y2="0"><stop offset="0.000" stop-color="#00ff25"/><stop offset="0.219" stop-color="#0eff1c"/><stop offset="0.524" stop-color="#42ff0f"/><stop offset="0.790" stop-color="#90ff04"/><stop offset="1.000" stop-color="#eaff00"/></linearGradient>
<linearGradient id="c208" gradientUnits="userSpaceOnUse" x1="1329.4" x2="1543.0" y1="0" y2="0"><stop offset="0.000" stop-color="#00ff27"/><stop offset="0.271" stop-color="#16ff1b"/><stop offset="0.561" stop-color="#50ff0e"/><stop offset="0.804" stop-color="#a0ff04"/><stop offset="1.000" stop-color="#fdff00"/></linearGradient>
<linearGradient id="c209" gradientUnits="userSpaceOnUse" x1="1329.0" x2="1548.0" y1="0" y2="0"><stop offset="0.000" stop-color="#00ff29"/><stop offset="0.264" stop-color="#16ff1d"/><stop offset="0.500" stop-color="#45ff12"/><stop offset="0.736" stop-color="#90ff07"/><stop offset="0.864" stop-color="#c7ff02"/><stop offset="0.964" stop-color="#fcff00"/><stop offset="1.000" stop-color="#ffee00"/></linearGradient>
<linearGradient id="c210" gradientUnits="userSpaceOnUse" x1="1328.6" x2="1552.9" y1="0" y2="0"><stop offset="0.000" stop-color="#00ff2b"/><stop offset="0.248" stop-color="#15ff1f"/><stop offset="0.487" stop-color="#46ff14"/><stop offset="0.726" stop-color="#96ff08"/><stop offset="0.929" stop-color="#fbff01"/><stop offset="1.000" stop-color="#ffdd00"/></linearGradient>
<linearGradient id="c211" gradientUnits="userSpaceOnUse" x1="1328.2" x2="1557.8" y1="0" y2="0"><stop offset="0.000" stop-color="#00ff2e"/><stop offset="0.226" stop-color="#13ff22"/><stop offset="0.443" stop-color="#3fff17"/><stop offset="0.687" stop-color="#90ff0a"/><stop offset="0.800" stop-color="#c4ff05"/><stop offset="0.904" stop-color="#ffff01"/><stop offset="1.000" stop-color="#ffcc00"/></linearGradient>
<linearGradient id="c212" gradientUnits="userSpaceOnUse" x1="1327.8" x2="1562.8" y1="0" y2="0"><stop offset="0.000" stop-color="#00ff30"/><stop offset="0.212" stop-color="#12ff25"/><stop offset="0.441" stop-color="#42ff19"/><stop offset="0.559" stop-color="#67ff12"/><stop offset="0.678" stop-color="#96ff0c"/><stop offset="0.873" stop-color="#feff02"/><stop offset="1.000" stop-color="#ffbd00"/></linearGradient>
<linearGradient id="c213" gradientUnits="userSpaceOnUse" x1="1327.4" x2="1567.7" y1="0" y2="0"><stop offset="0.000" stop-color="#00ff33"/><stop offset="0.198" stop-color="#11ff28"/><stop offset="0.430" stop-color="#43ff1b"/><stop offset="0.645" stop-color="#91ff0e"/><stop offset="0.752" stop-color="#c6ff08"/><stop offset="0.843" stop-color="#fdff04"/><stop offset="1.000" stop-color="#ffaf00"/></linearGradient>
<linearGradient id="c214" gradientUnits="userSpaceOnUse" x1="1327.0" x2="1572.6" y1="0" y2="0"><stop offset="0.000" stop-color="#00ff35"/><stop offset="0.211" stop-color="#14ff2a"/><stop offset="0.439" stop-color="#4aff1c"/><stop offset="0.626" stop-color="#92ff11"/><stop offset="0.813" stop-color="#fbff06"/><stop offset="0.911" stop-color="#ffc901"/><stop offset="1.000" stop-color="#ffa200"/></linearGradient>
<linearGradient id="c215" gradientUnits="userSpaceOnUse" x1="1326.6" x2="1577.6" y1="0" y2="0"><stop offset="0.000" stop-color="#00ff38"/><stop offset="0.198" stop-color="#13ff2d"/><stop offset="0.437" stop-color="#4eff1e"/><stop offset="0.595" stop-color="#8dff14"/><stop offset="0.690" stop-color="#beff0e"/><stop offset="0.786" stop-color="#faff08"/><stop offset="0.897" stop-color="#ffc102"/><stop offset="1.000" stop-color="#ff9600"/></linearGradient>
<linearGradient id="c216" gradientUnits="userSpaceOnUse" x1="1326.2" x2="1582.5" y1="0" y2="0"><stop offset="0.000" stop-color="#00ff3b"/><stop offset="0.209" stop-color="#16ff2f"/><stop offset="0.426" stop-color="#4fff21"/><stop offset="0.589" stop-color="#93ff15"/><stop offset="0.690" stop-color="#cbff0f"/><stop offset="0.767" stop-color="#ffff0a"/><stop offset="0.899" stop-color="#ffb202"/><stop offset="1.000" stop-color="#ff8a00"/></linearGradient>
<linearGradient id="c217" gradientUnits="userSpaceOnUse" x1="1325.8" x2="1587.4" y1="0" y2="0"><stop offset="0.000" stop-color="#00ff3e"/><stop offset="0.176" stop-color="#11ff33"/><stop offset="0.389" stop-color="#47ff25"/><stop offset="0.573" stop-color="#94ff18"/><stop offset="0.740" stop-color="#fdff0c"/><stop offset="0.863" stop-color="#ffb603"/><stop offset="1.000" stop-color="#ff7f00"/></linearGradient>
<linearGradient id="c218" gradientUnits="userSpaceOnUse" x1="1325.4" x2="1592.4" y1="0" y2="0"><stop offset="0.000" stop-color="#00ff41"/><stop offset="0.201" stop-color="#17ff34"/><stop offset="0.381" stop-color="#48ff28"/><stop offset="0.537" stop-color="#8bff1c"/><stop offset="0.627" stop-color="#beff16"/><stop offset="0.716" stop-color="#fcff0f"/><stop offset="0.858" stop-color="#ffab03"/><stop offset="1.000" stop-color="#ff7500"/></linearGradient>
<linearGradient id="c219" gradientUnits="userSpaceOnUse" x1="1325.0" x2="1597.3" y1="0" y2="0"><stop offset="0.000" stop-color="#00ff44"/><stop offset="0.175" stop-color="#13ff39"/><stop offset="0.380" stop-color="#4cff2a"/><stop offset="0.562" stop-color="#a2ff1c"/><stop offset="0.693" stop-color="#fcff12"/><stop offset="0.847" stop-color="#ffa404"/><stop offset="1.000" stop-color="#ff6c00"/></linearGradient>
<linearGradient id="c220" gradientUnits="userSpaceOnUse" x1="1324.6" x2="1602.2" y1="0" y2="0"><stop offset="0.000" stop-color="#00ff48"/><stop offset="0.180" stop-color="#15ff3c"/><stop offset="0.360" stop-color="#49ff2f"/><stop offset="0.540" stop-color="#9fff20"/><stop offset="0.676" stop-color="#ffff15"/><stop offset="0.741" stop-color="#ffd00c"/><stop offset="0.820" stop-color="#ffa406"/><stop offset="1.000" stop-color="#ff6300"/></linearGradient>
<linearGradient id="c221" gradientUnits="userSpaceOnUse" x1="1324.2" x2="1607.2" y1="0" y2="0"><stop offset="0.000" stop-color="#00ff4b"/><stop offset="0.183" stop-color="#17ff3f"/><stop offset="0.359" stop-color="#4dff31"/><stop offset="0.528" stop-color="#a2ff23"/><stop offset="0.655" stop-color="#ffff18"/><stop offset="0.732" stop-color="#ffc70d"/><stop offset="0.810" stop-color="#ff9d06"/><stop offset="0.901" stop-color="#ff7802"/><stop offset="1.000" stop-color="#ff5b00"/></linearGradient>
<linearGradient id="c222" gradientUnits="userSpaceOnUse" x1="1323.8" x2="1612.1" y1="0" y2="0"><stop offset="0.000" stop-color="#00ff4f"/><stop offset="0.145" stop-color="#10ff45"/><stop offset="0.331" stop-color="#46ff37"/><stop offset="0.490" stop-color="#94ff29"/><stop offset="0.634" stop-color="#feff1c"/><stop offset="0.703" stop-color="#ffcb11"/><stop offset="0.800" stop-color="#ff9607"/><stop offset="0.903" stop-color="#ff6e01"/><stop offset="1.000" stop-color="#ff5300"/></linearGradient>
<linearGradient id="c223" gradientUnits="userSpaceOnUse" x1="1323.4" x2="1617.0" y1="0" y2="0"><stop offset="0.000" stop-color="#00ff53"/><stop offset="0.068" stop-color="#04ff4e"/><stop offset="0.177" stop-color="#18ff46"/><stop offset="0.333" stop-color="#4bff3a"/><stop offset="0.483" stop-color="#99ff2c"/><stop offset="0.612" stop-color="#fbff20"/><stop offset="0.701" stop-color="#ffbf11"/><stop offset="0.776" stop-color="#ff9609"/><stop offset="0.898" stop-color="#ff6702"/><stop offset="1.000" stop-color="#ff4c00"/></linearGradient>
<linearGradient id="c224" gradientUnits="userSpaceOnUse" x1="1323.0" x2="1622.0" y1="0" y2="0"><stop offset="0.000" stop-color="#00ff57"/><stop offset="0.147" stop-color="#12ff4c"/><stop offset="0.307" stop-color="#44ff3f"/><stop offset="0.387" stop-color="#69ff38"/><stop offset="0.467" stop-color="#98ff31"/><stop offset="0.593" stop-color="#fbff24"/><stop offset="0.680" stop-color="#ffbf14"/><stop offset="0.747" stop-color="#ff990c"/><stop offset="0.853" stop-color="#ff6d04"/><stop offset="1.000" stop-color="#ff4600"/></linearGradient>
<linearGradient id="c225" gradientUnits="userSpaceOnUse" x1="1322.6" x2="1626.9" y1="0" y2="0"><stop offset="0.000" stop-color="#00ff5b"/><stop offset="0.150" stop-color="#14ff50"/><stop offset="0.314" stop-color="#4bff42"/><stop offset="0.458" stop-color="#9bff35"/><stop offset="0.582" stop-color="#fffe28"/><stop offset="0.673" stop-color="#ffb615"/><stop offset="0.778" stop-color="#ff8009"/><stop offset="0.902" stop-color="#ff5602"/><stop offset="1.000" stop-color="#ff3f00"/></linearGradient>
<linearGradient id="c226" gradientUnits="userSpaceOnUse" x1="1322.2" x2="1631.8" y1="0" y2="0"><stop offset="0.000" stop-color="#00ff5f"/><stop offset="0.142" stop-color="#13ff54"/><stop offset="0.284" stop-color="#42ff49"/><stop offset="0.432" stop-color="#93ff3a"/><stop offset="0.497" stop-color="#c3ff34"/><stop offset="0.561" stop-color="#fdff2d"/><stop offset="0.652" stop-color="#ffb719"/><stop offset="0.755" stop-color="#ff800b"/><stop offset="0.871" stop-color="#ff5703"/><stop offset="1.000" stop-color="#ff3a00"/></linearGradient>
<linearGradient id="c227" gradientUnits="userSpaceOnUse" x1="1321.8" x2="1636.8" y1="0" y2="0"><stop offset="0.000" stop-color="#00ff63"/><stop offset="0.146" stop-color="#15ff58"/><stop offset="0.285" stop-color="#46ff4d"/><stop offset="0.405" stop-color="#89ff41"/><stop offset="0.551" stop-color="#fffb30"/><stop offset="0.627" stop-color="#ffbb1d"/><stop offset="0.728" stop-color="#ff820e"/><stop offset="0.842" stop-color="#ff5804"/><stop offset="1.000" stop-color="#ff3400"/></linearGradient>
<linearGradient id="c228" gradientUnits="userSpaceOnUse" x1="1321.4" x2="1641.7" y1="0" y2="0"><stop offset="0.000" stop-color="#00ff68"/><stop offset="0.130" stop-color="#12ff5e"/><stop offset="0.261" stop-color="#3fff53"/><stop offset="0.398" stop-color="#8cff46"/><stop offset="0.534" stop-color="#fffb36"/><stop offset="0.621" stop-color="#ffb21f"/><stop offset="0.727" stop-color="#ff790e"/><stop offset="0.845" stop-color="#ff5004"/><stop offset="1.000" stop-color="#ff2f00"/></linearGradient>
<linearGradient id="c229" gradientUnits="userSpaceOnUse" x1="1321.0" x2="1646.6" y1="0" y2="0"><stop offset="0.000" stop-color="#00ff6d"/><stop offset="0.141" stop-color="#16ff62"/><stop offset="0.288" stop-color="#50ff55"/><stop offset="0.411" stop-color="#9fff49"/><stop offset="0.515" stop-color="#fffe3c"/><stop offset="0.607" stop-color="#ffaf22"/><stop offset="0.706" stop-color="#ff7911"/><stop offset="0.834" stop-color="#ff4c05"/><stop offset="1.000" stop-color="#ff2a00"/></linearGradient>
<linearGradient id="c230" gradientUnits="userSpaceOnUse" x1="1320.6" x2="1651.6" y1="0" y2="0"><stop offset="0.000" stop-color="#00ff72"/><stop offset="0.084" stop-color="#09ff6c"/><stop offset="0.151" stop-color="#1aff66"/><stop offset="0.289" stop-color="#55ff5a"/><stop offset="0.392" stop-color="#99ff4f"/><stop offset="0.500" stop-color="#ffff42"/><stop offset="0.578" stop-color="#ffb729"/><stop offset="0.705" stop-color="#ff7011"/><stop offset="0.813" stop-color="#ff4b06"/><stop offset="1.000" stop-color="#ff2600"/></linearGradient>
<linearGradient id="c231" gradientUnits="userSpaceOnUse" x1="1320.2" x2="1656.5" y1="0" y2="0"><stop offset="0.000" stop-color="#00ff77"/><stop offset="0.130" stop-color="#15ff6d"/><stop offset="0.266" stop-color="#4dff61"/><stop offset="0.373" stop-color="#93ff56"/><stop offset="0.485" stop-color="#ffff49"/><stop offset="0.568" stop-color="#ffb22b"/><stop offset="0.669" stop-color="#ff7716"/><stop offset="0.793" stop-color="#ff4a08"/><stop offset="1.000" stop-color="#ff2200"/></linearGradient>
<linearGradient id="c232" gradientUnits="userSpaceOnUse" x1="1319.8" x2="1661.4" y1="0" y2="0"><stop offset="0.000" stop-color="#00ff7d"/><stop offset="0.123" stop-color="#14ff73"/><stop offset="0.251" stop-color="#49ff68"/><stop offset="0.357" stop-color="#8fff5d"/><stop offset="0.474" stop-color="#fffc4e"/><stop offset="0.556" stop-color="#ffaf2f"/><stop offset="0.678" stop-color="#ff6a15"/><stop offset="0.807" stop-color="#ff4007"/><stop offset="1.000" stop-color="#ff1e00"/></linearGradient>
<linearGradient id="c233" gradientUnits="userSpaceOnUse" x1="1319.4" x2="1666.4" y1="0" y2="0"><stop offset="0.000" stop-color="#00ff82"/><stop offset="0.057" stop-color="#05ff7e"/><stop offset="0.132" stop-color="#18ff78"/><stop offset="0.253" stop-color="#4eff6e"/><stop offset="0.339" stop-color="#89ff65"/><stop offset="0.397" stop-color="#bcff5e"/><stop offset="0.460" stop-color="#fffc56"/><stop offset="0.546" stop-color="#ffaa32"/><stop offset="0.661" stop-color="#ff6917"/><stop offset="0.787" stop-color="#ff3f08"/><stop offset="1.000" stop-color="#ff1a00"/></linearGradient>
<linearGradient id="c234" gradientUnits="userSpaceOnUse" x1="1319.0" x2="1671.3" y1="0" y2="0"><stop offset="0.000" stop-color="#00ff89"/><stop offset="0.113" stop-color="#13ff80"/><stop offset="0.237" stop-color="#49ff75"/><stop offset="0.339" stop-color="#91ff6b"/><stop offset="0.446" stop-color="#fffc5d"/><stop offset="0.492" stop-color="#ffcb46"/><stop offset="0.537" stop-color="#ffa535"/><stop offset="0.655" stop-color="#ff6318"/><stop offset="0.825" stop-color="#ff3106"/><stop offset="1.000" stop-color="#ff1700"/></linearGradient>
<linearGradient id="c235" gradientUnits="userSpaceOnUse" x1="1318.6" x2="1676.2" y1="0" y2="0"><stop offset="0.000" stop-color="#00ff8f"/><stop offset="0.106" stop-color="#12ff87"/><stop offset="0.223" stop-color="#45ff7d"/><stop offset="0.341" stop-color="#9cff71"/><stop offset="0.430" stop-color="#feff67"/><stop offset="0.480" stop-color="#ffc84b"/><stop offset="0.525" stop-color="#ffa239"/><stop offset="0.581" stop-color="#ff7e28"/><stop offset="0.654" stop-color="#ff5c19"/><stop offset="0.810" stop-color="#ff2f07"/><stop offset="1.000" stop-color="#ff1400"/></linearGradient>
<linearGradient id="c236" gradientUnits="userSpaceOnUse" x1="1318.2" x2="1681.2" y1="0" y2="0"><stop offset="0.000" stop-color="#00ff95"/><stop offset="0.110" stop-color="#14ff8d"/><stop offset="0.225" stop-color="#4aff84"/><stop offset="0.280" stop-color="#70ff7e"/><stop offset="0.341" stop-color="#a5ff78"/><stop offset="0.418" stop-color="#feff6f"/><stop offset="0.473" stop-color="#ffc24f"/><stop offset="0.516" stop-color="#ff9d3c"/><stop offset="0.571" stop-color="#ff7a2b"/><stop offset="0.637" stop-color="#ff5b1c"/><stop offset="0.797" stop-color="#ff2d08"/><stop offset="1.000" stop-color="#ff1100"/></linearGradient>
<linearGradient id="c237" gradientUnits="userSpaceOnUse" x1="1317.8" x2="1686.1" y1="0" y2="0"><stop offset="0.000" stop-color="#00ff9c"/><stop offset="0.097" stop-color="#11ff95"/><stop offset="0.211" stop-color="#45ff8c"/><stop offset="0.314" stop-color="#94ff82"/><stop offset="0.362" stop-color="#c7ff7d"/><stop offset="0.405" stop-color="#feff78"/><stop offset="0.486" stop-color="#ffa949"/><stop offset="0.551" stop-color="#ff7c31"/><stop offset="0.616" stop-color="#ff5c20"/><stop offset="0.773" stop-color="#ff2d0a"/><stop offset="1.000" stop-color="#ff0e00"/></linearGradient>
<linearGradient id="c238" gradientUnits="userSpaceOnUse" x1="1317.3" x2="1691.0" y1="0" y2="0"><stop offset="0.000" stop-color="#00ffa3"/><stop offset="0.091" stop-color="#10ff9d"/><stop offset="0.203" stop-color="#44ff95"/><stop offset="0.294" stop-color="#8aff8c"/><stop offset="0.348" stop-color="#c2ff87"/><stop offset="0.396" stop-color="#fffe80"/><stop offset="0.433" stop-color="#ffcf65"/><stop offset="0.476" stop-color="#ffa64e"/><stop offset="0.545" stop-color="#ff7632"/><stop offset="0.615" stop-color="#ff5520"/><stop offset="0.770" stop-color="#ff290a"/><stop offset="1.000" stop-color="#ff0c00"/></linearGradient>
<linearGradient id="c239" gradientUnits="userSpaceOnUse" x1="1316.9" x2="1696.0" y1="0" y2="0"><stop offset="0.000" stop-color="#00ffab"/><stop offset="0.095" stop-color="#12ffa5"/><stop offset="0.189" stop-color="#3fff9e"/><stop offset="0.242" stop-color="#64ff99"/><stop offset="0.295" stop-color="#93ff95"/><stop offset="0.384" stop-color="#fffe8a"/><stop offset="0.432" stop-color="#ffc366"/><stop offset="0.463" stop-color="#ffa554"/><stop offset="0.526" stop-color="#ff7839"/><stop offset="0.595" stop-color="#ff5625"/><stop offset="0.684" stop-color="#ff3814"/><stop offset="0.779" stop-color="#ff2309"/><stop offset="1.000" stop-color="#ff0a00"/></linearGradient>
<linearGradient id="c240" gradientUnits="userSpaceOnUse" x1="1316.5" x2="1700.9" y1="0" y2="0"><stop offset="0.000" stop-color="#00ffb3"/><stop offset="0.083" stop-color="#0fffae"/><stop offset="0.145" stop-color="#29ffaa"/><stop offset="0.202" stop-color="#4bffa5"/><stop offset="0.285" stop-color="#92ff9f"/><stop offset="0.373" stop-color="#fffe95"/><stop offset="0.415" stop-color="#ffc872"/><stop offset="0.451" stop-color="#ffa45b"/><stop offset="0.508" stop-color="#ff7a40"/><stop offset="0.575" stop-color="#ff572a"/><stop offset="0.679" stop-color="#ff3415"/><stop offset="0.762" stop-color="#ff220b"/><stop offset="1.000" stop-color="#ff0800"/></linearGradient>
<linearGradient id="c241" gradientUnits="userSpaceOnUse" x1="1316.1" x2="1705.8" y1="0" y2="0"><stop offset="0.000" stop-color="#00ffbb"/><stop offset="0.087" stop-color="#11ffb6"/><stop offset="0.195" stop-color="#4affaf"/><stop offset="0.277" stop-color="#92ffa9"/><stop offset="0.364" stop-color="#fffb9e"/><stop offset="0.395" stop-color="#ffd181"/><stop offset="0.441" stop-color="#ffa160"/><stop offset="0.513" stop-color="#ff6e3e"/><stop offset="0.590" stop-color="#ff4a26"/><stop offset="0.774" stop-color="#ff1c0a"/><stop offset="1.000" stop-color="#ff0600"/></linearGradient>
<linearGradient id="c242" gradientUnits="userSpaceOnUse" x1="1315.7" x2="1710.8" y1="0" y2="0"><stop offset="0.000" stop-color="#00ffc4"/><stop offset="0.076" stop-color="#0effc0"/><stop offset="0.131" stop-color="#26ffbd"/><stop offset="0.192" stop-color="#4cffb9"/><stop offset="0.278" stop-color="#9cffb3"/><stop offset="0.354" stop-color="#fffbaa"/><stop offset="0.394" stop-color="#ffc482"/><stop offset="0.455" stop-color="#ff8b59"/><stop offset="0.510" stop-color="#ff673f"/><stop offset="0.586" stop-color="#ff4527"/><stop offset="0.667" stop-color="#ff2d17"/><stop offset="0.778" stop-color="#ff1809"/><stop offset="1.000" stop-color="#ff0400"/></linearGradient>
<linearGradient id="c243" gradientUnits="userSpaceOnUse" x1="1315.3" x2="1715.7" y1="0" y2="0"><stop offset="0.000" stop-color="#00ffcd"/><stop offset="0.035" stop-color="#03ffcb"/><stop offset="0.100" stop-color="#18ffc8"/><stop offset="0.189" stop-color="#4effc4"/><stop offset="0.264" stop-color="#95ffbf"/><stop offset="0.343" stop-color="#fffab6"/><stop offset="0.393" stop-color="#ffb883"/><stop offset="0.448" stop-color="#ff865d"/><stop offset="0.502" stop-color="#ff6342"/><stop offset="0.577" stop-color="#ff4229"/><stop offset="0.682" stop-color="#ff2514"/><stop offset="0.776" stop-color="#ff150a"/><stop offset="1.000" stop-color="#ff0300"/></linearGradient>
<linearGradient id="c244" gradientUnits="userSpaceOnUse" x1="1314.9" x2="1720.6" y1="0" y2="0"><stop offset="0.000" stop-color="#00ffd6"/><stop offset="0.049" stop-color="#07ffd5"/><stop offset="0.099" stop-color="#19ffd3"/><stop offset="0.182" stop-color="#4dffcf"/><stop offset="0.261" stop-color="#9bffcb"/><stop offset="0.330" stop-color="#feffc7"/><stop offset="0.369" stop-color="#ffc799"/><stop offset="0.419" stop-color="#ff936f"/><stop offset="0.488" stop-color="#ff6348"/><stop offset="0.547" stop-color="#ff4732"/><stop offset="0.640" stop-color="#ff2a1b"/><stop offset="0.734" stop-color="#ff180e"/><stop offset="1.000" stop-color="#ff0200"/></linearGradient>
<linearGradient id="c245" gradientUnits="userSpaceOnUse" x1="1314.5" x2="1725.6" y1="0" y2="0"><stop offset="0.000" stop-color="#00ffe0"/><stop offset="0.073" stop-color="#0fffde"/><stop offset="0.160" stop-color="#40ffdc"/><stop offset="0.243" stop-color="#8effd8"/><stop offset="0.277" stop-color="#baffd7"/><stop offset="0.320" stop-color="#feffd5"/><stop offset="0.354" stop-color="#ffcca9"/><stop offset="0.408" stop-color="#ff9277"/><stop offset="0.461" stop-color="#ff6a55"/><stop offset="0.549" stop-color="#ff4032"/><stop offset="0.621" stop-color="#ff2a1f"/><stop offset="0.738" stop-color="#ff140d"/><stop offset="1.000" stop-color="#ff0100"/></linearGradient>
<linearGradient id="c246" gradientUnits="userSpaceOnUse" x1="1314.1" x2="1730.5" y1="0" y2="0"><stop offset="0.000" stop-color="#00ffeb"/><stop offset="0.062" stop-color="#0cffea"/><stop offset="0.153" stop-color="#3effe8"/><stop offset="0.230" stop-color="#87ffe6"/><stop offset="0.263" stop-color="#b2ffe5"/><stop offset="0.311" stop-color="#feffe4"/><stop offset="0.364" stop-color="#ffb39f"/><stop offset="0.407" stop-color="#ff8878"/><stop offset="0.464" stop-color="#ff6054"/><stop offset="0.541" stop-color="#ff3d34"/><stop offset="0.636" stop-color="#ff221c"/><stop offset="0.746" stop-color="#ff100c"/><stop offset="1.000" stop-color="#ff0000"/></linearGradient>
<linearGradient id="c247" gradientUnits="userSpaceOnUse" x1="1313.7" x2="1732.1" y1="0" y2="0"><stop offset="0.000" stop-color="#00fff6"/><stop offset="0.076" stop-color="#12fff5"/><stop offset="0.152" stop-color="#40fff5"/><stop offset="0.224" stop-color="#86fff4"/><stop offset="0.271" stop-color="#c7fff4"/><stop offset="0.305" stop-color="#fffef3"/><stop offset="0.343" stop-color="#ffc3ba"/><stop offset="0.386" stop-color="#ff938c"/><stop offset="0.457" stop-color="#ff5e59"/><stop offset="0.529" stop-color="#ff3d3a"/><stop offset="0.586" stop-color="#ff2b28"/><stop offset="0.714" stop-color="#ff1211"/><stop offset="1.000" stop-color="#ff0000"/></linearGradient>
<linearGradient id="c248" gradientUnits="userSpaceOnUse" x1="1313.3" x2="1732.1" y1="0" y2="0"><stop offset="0.000" stop-color="#00fcff"/><stop offset="0.052" stop-color="#09fcff"/><stop offset="0.143" stop-color="#3afbff"/><stop offset="0.219" stop-color="#83fbff"/><stop offset="0.271" stop-color="#cbfaff"/><stop offset="0.300" stop-color="#fcfaff"/><stop offset="0.305" stop-color="#fff4f9"/><stop offset="0.338" stop-color="#ffc1c5"/><stop offset="0.390" stop-color="#ff888c"/><stop offset="0.457" stop-color="#ff5a5c"/><stop offset="0.519" stop-color="#ff3d3f"/><stop offset="0.605" stop-color="#ff2425"/><stop offset="0.710" stop-color="#ff1113"/><stop offset="1.000" stop-color="#ff0000"/></linearGradient>
<linearGradient id="c249" gradientUnits="userSpaceOnUse" x1="1312.9" x2="1728.9" y1="0" y2="0"><stop offset="0.000" stop-color="#00f1ff"/><stop offset="0.077" stop-color="#12f0ff"/><stop offset="0.159" stop-color="#44eeff"/><stop offset="0.240" stop-color="#98ecff"/><stop offset="0.308" stop-color="#ffe9ff"/><stop offset="0.346" stop-color="#ffb2c3"/><stop offset="0.394" stop-color="#ff818f"/><stop offset="0.447" stop-color="#ff5c68"/><stop offset="0.524" stop-color="#ff3941"/><stop offset="0.649" stop-color="#ff191f"/><stop offset="0.740" stop-color="#ff0d10"/><stop offset="1.000" stop-color="#ff0000"/></linearGradient>
<linearGradient id="c250" gradientUnits="userSpaceOnUse" x1="1312.5" x2="1721.0" y1="0" y2="0"><stop offset="0.000" stop-color="#00e6ff"/><stop offset="0.063" stop-color="#0ce4ff"/><stop offset="0.112" stop-color="#22e3ff"/><stop offset="0.161" stop-color="#42e1ff"/><stop offset="0.229" stop-color="#82deff"/><stop offset="0.263" stop-color="#acddff"/><stop offset="0.317" stop-color="#ffdaff"/><stop offset="0.356" stop-color="#ffa6c4"/><stop offset="0.410" stop-color="#ff758c"/><stop offset="0.473" stop-color="#ff4e60"/><stop offset="0.551" stop-color="#ff303d"/><stop offset="0.732" stop-color="#ff0e14"/><stop offset="1.000" stop-color="#ff0001"/></linearGradient>
<linearGradient id="c251" gradientUnits="userSpaceOnUse" x1="1312.1" x2="1713.1" y1="0" y2="0"><stop offset="0.000" stop-color="#00dbff"/><stop offset="0.060" stop-color="#0ad9ff"/><stop offset="0.119" stop-color="#24d7ff"/><stop offset="0.164" stop-color="#41d5ff"/><stop offset="0.249" stop-color="#90d0ff"/><stop offset="0.328" stop-color="#ffc9fc"/><stop offset="0.363" stop-color="#ff9ec9"/><stop offset="0.418" stop-color="#ff6f90"/><stop offset="0.483" stop-color="#ff4a63"/><stop offset="0.557" stop-color="#ff2e41"/><stop offset="0.647" stop-color="#ff1a27"/><stop offset="0.741" stop-color="#ff0c16"/><stop offset="1.000" stop-color="#ff0002"/></linearGradient>
<linearGradient id="c252" gradientUnits="userSpaceOnUse" x1="1311.7" x2="1705.1" y1="0" y2="0"><stop offset="0.000" stop-color="#00d1ff"/><stop offset="0.091" stop-color="#15cdff"/><stop offset="0.178" stop-color="#47c8ff"/><stop offset="0.254" stop-color="#8dc3ff"/><stop offset="0.340" stop-color="#ffb9fa"/><stop offset="0.386" stop-color="#ff88bc"/><stop offset="0.452" stop-color="#ff5980"/><stop offset="0.508" stop-color="#ff3f5e"/><stop offset="0.584" stop-color="#ff273e"/><stop offset="0.756" stop-color="#ff0b17"/><stop offset="1.000" stop-color="#ff0003"/></linearGradient>
<linearGradient id="c253" gradientUnits="userSpaceOnUse" x1="1311.3" x2="1697.2" y1="0" y2="0"><stop offset="0.000" stop-color="#00c7ff"/><stop offset="0.073" stop-color="#0dc4ff"/><stop offset="0.176" stop-color="#42bdff"/><stop offset="0.238" stop-color="#75b9ff"/><stop offset="0.275" stop-color="#9bb6ff"/><stop offset="0.347" stop-color="#feb0ff"/><stop offset="0.399" stop-color="#ff7dbb"/><stop offset="0.466" stop-color="#ff5280"/><stop offset="0.523" stop-color="#ff395e"/><stop offset="0.596" stop-color="#ff2440"/><stop offset="0.767" stop-color="#ff0a19"/><stop offset="1.000" stop-color="#ff0004"/></linearGradient>
<linearGradient id="c254" gradientUnits="userSpaceOnUse" x1="1310.9" x2="1689.3" y1="0" y2="0"><stop offset="0.000" stop-color="#00beff"/><stop offset="0.095" stop-color="#14b8ff"/><stop offset="0.195" stop-color="#4bb2ff"/><stop offset="0.284" stop-color="#9caaff"/><stop offset="0.358" stop-color="#fea3ff"/><stop offset="0.411" stop-color="#ff74bc"/><stop offset="0.453" stop-color="#ff5995"/><stop offset="0.495" stop-color="#ff4477"/><stop offset="0.574" stop-color="#ff2a4f"/><stop offset="0.747" stop-color="#ff0c20"/><stop offset="1.000" stop-color="#ff0006"/></linearGradient>
<linearGradient id="c255" gradientUnits="userSpaceOnUse" x1="1310.5" x2="1681.4" y1="0" y2="0"><stop offset="0.000" stop-color="#00b5ff"/><stop offset="0.086" stop-color="#10b0ff"/><stop offset="0.194" stop-color="#46a8ff"/><stop offset="0.290" stop-color="#999fff"/><stop offset="0.371" stop-color="#ff96fe"/><stop offset="0.425" stop-color="#ff6abb"/><stop offset="0.462" stop-color="#ff5399"/><stop offset="0.511" stop-color="#ff3e77"/><stop offset="0.575" stop-color="#ff2956"/><stop offset="0.677" stop-color="#ff1434"/><stop offset="0.790" stop-color="#ff081d"/><stop offset="1.000" stop-color="#ff0008"/></linearGradient>
<linearGradient id="c256" gradientUnits="userSpaceOnUse" x1="1310.1" x2="1673.5" y1="0" y2="0"><stop offset="0.000" stop-color="#00acff"/><stop offset="0.044" stop-color="#04a9ff"/><stop offset="0.121" stop-color="#1ca4ff"/><stop offset="0.209" stop-color="#4c9dff"/><stop offset="0.297" stop-color="#9695ff"/><stop offset="0.385" stop-color="#ff89fc"/><stop offset="0.423" stop-color="#ff6bcb"/><stop offset="0.484" stop-color="#ff4994"/><stop offset="0.599" stop-color="#ff2354"/><stop offset="0.747" stop-color="#ff0c29"/><stop offset="1.000" stop-color="#ff000a"/></linearGradient>
<linearGradient id="c257" gradientUnits="userSpaceOnUse" x1="1309.7" x2="1665.6" y1="0" y2="0"><stop offset="0.000" stop-color="#00a4ff"/><stop offset="0.101" stop-color="#139dff"/><stop offset="0.208" stop-color="#4794ff"/><stop offset="0.303" stop-color="#938bff"/><stop offset="0.393" stop-color="#fd80ff"/><stop offset="0.399" stop-color="#ff7df9"/><stop offset="0.444" stop-color="#ff5ec4"/><stop offset="0.489" stop-color="#ff479c"/><stop offset="0.539" stop-color="#ff337a"/><stop offset="0.624" stop-color="#ff1e52"/><stop offset="0.753" stop-color="#ff0b2d"/><stop offset="1.000" stop-color="#ff000c"/></linearGradient>
<linearGradient id="c258" gradientUnits="userSpaceOnUse" x1="1309.3" x2="1657.7" y1="0" y2="0"><stop offset="0.000" stop-color="#009cff"/><stop offset="0.091" stop-color="#0f95ff"/><stop offset="0.166" stop-color="#2c8fff"/><stop offset="0.223" stop-color="#4c8aff"/><stop offset="0.314" stop-color="#9481ff"/><stop offset="0.411" stop-color="#ff73fa"/><stop offset="0.451" stop-color="#ff59cb"/><stop offset="0.497" stop-color="#ff43a2"/><stop offset="0.549" stop-color="#ff307f"/><stop offset="0.629" stop-color="#ff1d58"/><stop offset="0.777" stop-color="#ff092d"/><stop offset="1.000" stop-color="#ff000f"/></linearGradient>
<linearGradient id="c259" gradientUnits="userSpaceOnUse" x1="1308.9" x2="1649.8" y1="0" y2="0"><stop offset="0.000" stop-color="#0094ff"/><stop offset="0.058" stop-color="#0690ff"/><stop offset="0.135" stop-color="#1d8aff"/><stop offset="0.240" stop-color="#5280ff"/><stop offset="0.345" stop-color="#a775ff"/><stop offset="0.421" stop-color="#fe6cff"/><stop offset="0.474" stop-color="#ff4dc4"/><stop offset="0.520" stop-color="#ff3a9d"/><stop offset="0.637" stop-color="#ff1b5d"/><stop offset="0.789" stop-color="#ff0830"/><stop offset="1.000" stop-color="#ff0012"/></linearGradient>
<linearGradient id="c260" gradientUnits="userSpaceOnUse" x1="1308.5" x2="1641.8" y1="0" y2="0"><stop offset="0.000" stop-color="#008dff"/><stop offset="0.108" stop-color="#1285ff"/><stop offset="0.228" stop-color="#467aff"/><stop offset="0.341" stop-color="#996eff"/><stop offset="0.437" stop-color="#ff61fd"/><stop offset="0.479" stop-color="#ff4bce"/><stop offset="0.527" stop-color="#ff37a5"/><stop offset="0.599" stop-color="#ff2378"/><stop offset="0.659" stop-color="#ff175d"/><stop offset="0.796" stop-color="#ff0734"/><stop offset="1.000" stop-color="#ff0015"/></linearGradient>
<linearGradient id="c261" gradientUnits="userSpaceOnUse" x1="1308.1" x2="1633.9" y1="0" y2="0"><stop offset="0.000" stop-color="#0086ff"/><stop offset="0.104" stop-color="#107eff"/><stop offset="0.233" stop-color="#4572ff"/><stop offset="0.350" stop-color="#9666ff"/><stop offset="0.454" stop-color="#ff57fb"/><stop offset="0.503" stop-color="#ff40c7"/><stop offset="0.552" stop-color="#ff2fa0"/><stop offset="0.656" stop-color="#ff1767"/><stop offset="0.798" stop-color="#ff073a"/><stop offset="1.000" stop-color="#ff0019"/></linearGradient>
<linearGradient id="c262" gradientUnits="userSpaceOnUse" x1="1307.7" x2="1626.0" y1="0" y2="0"><stop offset="0.000" stop-color="#007fff"/><stop offset="0.119" stop-color="#1376ff"/><stop offset="0.256" stop-color="#4d69ff"/><stop offset="0.369" stop-color="#9c5dff"/><stop offset="0.469" stop-color="#ff4ffc"/><stop offset="0.506" stop-color="#ff3fd4"/><stop offset="0.563" stop-color="#ff2ca6"/><stop offset="0.681" stop-color="#ff1366"/><stop offset="0.825" stop-color="#ff053a"/><stop offset="1.000" stop-color="#ff001d"/></linearGradient>
<linearGradient id="c263" gradientUnits="userSpaceOnUse" x1="1307.3" x2="1618.1" y1="0" y2="0"><stop offset="0.000" stop-color="#0078ff"/><stop offset="0.115" stop-color="#116fff"/><stop offset="0.250" stop-color="#4563ff"/><stop offset="0.378" stop-color="#9955ff"/><stop offset="0.487" stop-color="#ff47fa"/><stop offset="0.564" stop-color="#ff2bb3"/><stop offset="0.686" stop-color="#ff136e"/><stop offset="0.821" stop-color="#ff0542"/><stop offset="1.000" stop-color="#ff0021"/></linearGradient>
<linearGradient id="c264" gradientUnits="userSpaceOnUse" x1="1306.9" x2="1610.2" y1="0" y2="0"><stop offset="0.000" stop-color="#0072ff"/><stop offset="0.079" stop-color="#086cff"/><stop offset="0.145" stop-color="#1866ff"/><stop offset="0.276" stop-color="#4e5aff"/><stop offset="0.401" stop-color="#a14dff"/><stop offset="0.500" stop-color="#ff41ff"/><stop offset="0.586" stop-color="#ff26b2"/><stop offset="0.711" stop-color="#ff0f6e"/><stop offset="0.829" stop-color="#ff0547"/><stop offset="1.000" stop-color="#ff0026"/></linearGradient>
<linearGradient id="c265" gradientUnits="userSpaceOnUse" x1="1306.5" x2="1602.3" y1="0" y2="0"><stop offset="0.000" stop-color="#006cff"/><stop offset="0.135" stop-color="#1461ff"/><stop offset="0.270" stop-color="#4655ff"/><stop offset="0.345" stop-color="#6f4eff"/><stop offset="0.412" stop-color="#9e46ff"/><stop offset="0.520" stop-color="#ff39fc"/><stop offset="0.608" stop-color="#ff20b1"/><stop offset="0.709" stop-color="#ff0f79"/><stop offset="0.851" stop-color="#ff0349"/><stop offset="1.000" stop-color="#ff002b"/></linearGradient>
<linearGradient id="c266" gradientUnits="userSpaceOnUse" x1="1306.1" x2="1594.4" y1="0" y2="0"><stop offset="0.000" stop-color="#0066ff"/><stop offset="0.124" stop-color="#105cff"/><stop offset="0.276" stop-color="#444fff"/><stop offset="0.421" stop-color="#9940ff"/><stop offset="0.538" stop-color="#ff33fe"/><stop offset="0.628" stop-color="#ff1cb3"/><stop offset="0.724" stop-color="#ff0e7e"/><stop offset="0.848" stop-color="#ff0452"/><stop offset="1.000" stop-color="#ff0031"/></linearGradient>
<linearGradient id="c267" gradientUnits="userSpaceOnUse" x1="1305.7" x2="1586.5" y1="0" y2="0"><stop offset="0.000" stop-color="#0060ff"/><stop offset="0.149" stop-color="#1555ff"/><stop offset="0.284" stop-color="#4349ff"/><stop offset="0.418" stop-color="#8d3cff"/><stop offset="0.560" stop-color="#ff2cfb"/><stop offset="0.631" stop-color="#ff1bc0"/><stop offset="0.738" stop-color="#ff0c84"/><stop offset="0.823" stop-color="#ff0563"/><stop offset="1.000" stop-color="#ff0038"/></linearGradient>
<linearGradient id="c268" gradientUnits="userSpaceOnUse" x1="1305.3" x2="1578.5" y1="0" y2="0"><stop offset="0.000" stop-color="#005bff"/><stop offset="0.124" stop-color="#0e52ff"/><stop offset="0.292" stop-color="#4244ff"/><stop offset="0.445" stop-color="#9435ff"/><stop offset="0.511" stop-color="#c42eff"/><stop offset="0.577" stop-color="#fe27ff"/><stop offset="0.664" stop-color="#ff15ba"/><stop offset="0.752" stop-color="#ff0b8a"/><stop offset="0.854" stop-color="#ff0363"/><stop offset="1.000" stop-color="#ff003f"/></linearGradient>
<linearGradient id="c269" gradientUnits="userSpaceOnUse" x1="1304.9" x2="1570.6" y1="0" y2="0"><stop offset="0.000" stop-color="#0056ff"/><stop offset="0.143" stop-color="#114bff"/><stop offset="0.301" stop-color="#413eff"/><stop offset="0.451" stop-color="#8d31ff"/><stop offset="0.519" stop-color="#bb2aff"/><stop offset="0.602" stop-color="#ff21fe"/><stop offset="0.692" stop-color="#ff11b9"/><stop offset="0.774" stop-color="#ff088d"/><stop offset="0.887" stop-color="#ff0263"/><stop offset="1.000" stop-color="#ff0047"/></linearGradient>
<linearGradient id="c270" gradientUnits="userSpaceOnUse" x1="1304.5" x2="1562.7" y1="0" y2="0"><stop offset="0.000" stop-color="#0051ff"/><stop offset="0.092" stop-color="#074aff"/><stop offset="0.192" stop-color="#1b43ff"/><stop offset="0.354" stop-color="#5236ff"/><stop offset="0.477" stop-color="#922bff"/><stop offset="0.554" stop-color="#c623ff"/><stop offset="0.623" stop-color="#ff1dff"/><stop offset="0.685" stop-color="#ff12cf"/><stop offset="0.785" stop-color="#ff0796"/><stop offset="0.869" stop-color="#ff0274"/><stop offset="1.000" stop-color="#ff004f"/></linearGradient>
<linearGradient id="c271" gradientUnits="userSpaceOnUse" x1="1304.1" x2="1554.8" y1="0" y2="0"><stop offset="0.000" stop-color="#004cff"/><stop offset="0.079" stop-color="#0547ff"/><stop offset="0.183" stop-color="#173fff"/><stop offset="0.365" stop-color="#5131ff"/><stop offset="0.508" stop-color="#9925ff"/><stop offset="0.643" stop-color="#fa18ff"/><stop offset="0.746" stop-color="#ff0bba"/><stop offset="0.810" stop-color="#ff0699"/><stop offset="0.913" stop-color="#ff0171"/><stop offset="1.000" stop-color="#ff0059"/></linearGradient>
<linearGradient id="c272" gradientUnits="userSpaceOnUse" x1="1303.7" x2="1546.9" y1="0" y2="0"><stop offset="0.000" stop-color="#0048ff"/><stop offset="0.180" stop-color="#153bff"/><stop offset="0.385" stop-color="#532cff"/><stop offset="0.516" stop-color="#9221ff"/><stop offset="0.598" stop-color="#c51aff"/><stop offset="0.672" stop-color="#fd14ff"/><stop offset="0.762" stop-color="#ff09c2"/><stop offset="0.836" stop-color="#ff049c"/><stop offset="1.000" stop-color="#ff0063"/></linearGradient>
<linearGradient id="c273" gradientUnits="userSpaceOnUse" x1="1303.3" x2="1539.0" y1="0" y2="0"><stop offset="0.000" stop-color="#0043ff"/><stop offset="0.110" stop-color="#083cff"/><stop offset="0.212" stop-color="#1a35ff"/><stop offset="0.407" stop-color="#5527ff"/><stop offset="0.551" stop-color="#991cff"/><stop offset="0.703" stop-color="#ff0fff"/><stop offset="0.822" stop-color="#ff05b3"/><stop offset="1.000" stop-color="#ff006e"/></linearGradient>
<linearGradient id="c274" gradientUnits="userSpaceOnUse" x1="1302.9" x2="1531.1" y1="0" y2="0"><stop offset="0.000" stop-color="#003fff"/><stop offset="0.130" stop-color="#0a37ff"/><stop offset="0.235" stop-color="#1d30ff"/><stop offset="0.426" stop-color="#5622ff"/><stop offset="0.609" stop-color="#ac15ff"/><stop offset="0.730" stop-color="#fd0cff"/><stop offset="0.870" stop-color="#ff02ad"/><stop offset="1.000" stop-color="#ff007b"/></linearGradient>
<linearGradient id="c275" gradientUnits="userSpaceOnUse" x1="1302.5" x2="1523.2" y1="0" y2="0"><stop offset="0.000" stop-color="#003bff"/><stop offset="0.198" stop-color="#142fff"/><stop offset="0.387" stop-color="#4322ff"/><stop offset="0.586" stop-color="#9215ff"/><stop offset="0.667" stop-color="#be0fff"/><stop offset="0.766" stop-color="#ff09ff"/><stop offset="0.865" stop-color="#ff02c2"/><stop offset="1.000" stop-color="#ff0089"/></linearGradient>
<linearGradient id="c276" gradientUnits="userSpaceOnUse" x1="1302.1" x2="1515.2" y1="0" y2="0"><stop offset="0.000" stop-color="#0037ff"/><stop offset="0.196" stop-color="#122bff"/><stop offset="0.383" stop-color="#3c20ff"/><stop offset="0.514" stop-color="#6817ff"/><stop offset="0.607" stop-color="#9011ff"/><stop offset="0.794" stop-color="#fb06ff"/><stop offset="0.897" stop-color="#ff01c5"/><stop offset="1.000" stop-color="#ff0099"/></linearGradient>
<linearGradient id="c277" gradientUnits="userSpaceOnUse" x1="1301.7" x2="1507.3" y1="0" y2="0"><stop offset="0.000" stop-color="#0033ff"/><stop offset="0.184" stop-color="#0f29ff"/><stop offset="0.408" stop-color="#3e1cff"/><stop offset="0.631" stop-color="#8e0eff"/><stop offset="0.738" stop-color="#c308ff"/><stop offset="0.835" stop-color="#fe04ff"/><stop offset="0.903" stop-color="#ff01d7"/><stop offset="1.000" stop-color="#ff00aa"/></linearGradient>
<linearGradient id="c278" gradientUnits="userSpaceOnUse" x1="1301.2" x2="1499.4" y1="0" y2="0"><stop offset="0.000" stop-color="#0030ff"/><stop offset="0.240" stop-color="#1623ff"/><stop offset="0.460" stop-color="#4717ff"/><stop offset="0.670" stop-color="#920bff"/><stop offset="0.870" stop-color="#fb02ff"/><stop offset="1.000" stop-color="#ff00be"/></linearGradient>
<linearGradient id="c279" gradientUnits="userSpaceOnUse" x1="1300.8" x2="1491.5" y1="0" y2="0"><stop offset="0.000" stop-color="#002cff"/><stop offset="0.188" stop-color="#0d23ff"/><stop offset="0.448" stop-color="#3e15ff"/><stop offset="0.698" stop-color="#9009ff"/><stop offset="0.813" stop-color="#c404ff"/><stop offset="0.917" stop-color="#fe00ff"/><stop offset="1.000" stop-color="#ff00d4"/></linearGradient>
<linearGradient id="c280" gradientUnits="userSpaceOnUse" x1="1300.4" x2="1483.6" y1="0" y2="0"><stop offset="0.000" stop-color="#0029ff"/><stop offset="0.250" stop-color="#141dff"/><stop offset="0.522" stop-color="#4b10ff"/><stop offset="0.761" stop-color="#9b05ff"/><stop offset="0.957" stop-color="#fa00ff"/><stop offset="1.000" stop-color="#ff00ec"/></linearGradient>
<linearGradient id="c281" gradientUnits="userSpaceOnUse" x1="1300.0" x2="1475.7" y1="0" y2="0"><stop offset="0.000" stop-color="#0026ff"/><stop offset="0.125" stop-color="#0520ff"/><stop offset="0.284" stop-color="#1719ff"/><stop offset="0.568" stop-color="#500cff"/><stop offset="0.795" stop-color="#9903ff"/><stop offset="1.000" stop-color="#f700ff"/></linearGradient>
<linearGradient id="c282" gradientUnits="userSpaceOnUse" x1="1299.6" x2="1467.8" y1="0" y2="0"><stop offset="0.000" stop-color="#0023ff"/><stop offset="0.235" stop-color="#0f19ff"/><stop offset="0.553" stop-color="#450cff"/><stop offset="0.741" stop-color="#7805ff"/><stop offset="1.000" stop-color="#dc00ff"/></linearGradient>
<linearGradient id="c283" gradientUnits="userSpaceOnUse" x1="1299.2" x2="1459.9" y1="0" y2="0"><stop offset="0.000" stop-color="#0020ff"/><stop offset="0.284" stop-color="#1315ff"/><stop offset="0.531" stop-color="#3a0bff"/><stop offset="0.765" stop-color="#7303ff"/><stop offset="1.000" stop-color="#c500ff"/></linearGradient>
<linearGradient id="c284" gradientUnits="userSpaceOnUse" x1="1298.8" x2="1451.9" y1="0" y2="0"><stop offset="0.000" stop-color="#001dff"/><stop offset="0.273" stop-color="#1013ff"/><stop offset="0.545" stop-color="#370aff"/><stop offset="0.779" stop-color="#6b03ff"/><stop offset="1.000" stop-color="#af00ff"/></linearGradient>
<linearGradient id="c285" gradientUnits="userSpaceOnUse" x1="1298.4" x2="1444.0" y1="0" y2="0"><stop offset="0.000" stop-color="#001aff"/><stop offset="0.247" stop-color="#0c12ff"/><stop offset="0.548" stop-color="#3208ff"/><stop offset="0.781" stop-color="#6002ff"/><stop offset="1.000" stop-color="#9c00ff"/></linearGradient>
<linearGradient id="c286" gradientUnits="userSpaceOnUse" x1="1298.0" x2="1436.1" y1="0" y2="0"><stop offset="0.000" stop-color="#0018ff"/><stop offset="0.286" stop-color="#0e0fff"/><stop offset="0.486" stop-color="#2409ff"/><stop offset="0.729" stop-color="#4b03ff"/><stop offset="1.000" stop-color="#8a00ff"/></linearGradient>
<linearGradient id="c287" gradientUnits="userSpaceOnUse" x1="1297.6" x2="1428.2" y1="0" y2="0"><stop offset="0.000" stop-color="#0016ff"/><stop offset="0.303" stop-color="#0e0dff"/><stop offset="0.485" stop-color="#2008ff"/><stop offset="0.742" stop-color="#4502ff"/><stop offset="1.000" stop-color="#7900ff"/></linearGradient>
<linearGradient id="c288" gradientUnits="userSpaceOnUse" x1="1297.2" x2="1420.3" y1="0" y2="0"><stop offset="0.000" stop-color="#0013ff"/><stop offset="0.145" stop-color="#0310ff"/><stop offset="0.500" stop-color="#1e07ff"/><stop offset="0.742" stop-color="#3d02ff"/><stop offset="1.000" stop-color="#6b00ff"/></linearGradient>
<linearGradient id="c289" gradientUnits="userSpaceOnUse" x1="1296.8" x2="1412.4" y1="0" y2="0"><stop offset="0.000" stop-color="#0011ff"/><stop offset="0.155" stop-color="#030eff"/><stop offset="0.483" stop-color="#1906ff"/><stop offset="0.759" stop-color="#3801ff"/><stop offset="1.000" stop-color="#5d00ff"/></linearGradient>
<linearGradient id="c290" gradientUnits="userSpaceOnUse" x1="1296.4" x2="1404.5" y1="0" y2="0"><stop offset="0.000" stop-color="#000fff"/><stop offset="0.473" stop-color="#1506ff"/><stop offset="1.000" stop-color="#5100ff"/></linearGradient>
<linearGradient id="c291" gradientUnits="userSpaceOnUse" x1="1296.0" x2="1396.6" y1="0" y2="0"><stop offset="0.000" stop-color="#000dff"/><stop offset="0.510" stop-color="#1504ff"/><stop offset="1.000" stop-color="#4600ff"/></linearGradient>
<linearGradient id="c292" gradientUnits="userSpaceOnUse" x1="1295.6" x2="1388.6" y1="0" y2="0"><stop offset="0.000" stop-color="#000cff"/><stop offset="0.511" stop-color="#1204ff"/><stop offset="1.000" stop-color="#3c00ff"/></linearGradient>
<linearGradient id="c293" gradientUnits="userSpaceOnUse" x1="1295.2" x2="1380.7" y1="0" y2="0"><stop offset="0.000" stop-color="#000aff"/><stop offset="0.465" stop-color="#0d03ff"/><stop offset="1.000" stop-color="#3300ff"/></linearGradient>
<linearGradient id="c294" gradientUnits="userSpaceOnUse" x1="1294.8" x2="1372.8" y1="0" y2="0"><stop offset="0.000" stop-color="#0008ff"/><stop offset="0.600" stop-color="#1102ff"/><stop offset="1.000" stop-color="#2b00ff"/></linearGradient>
<linearGradient id="c295" gradientUnits="userSpaceOnUse" x1="1294.4" x2="1364.9" y1="0" y2="0"><stop offset="0.000" stop-color="#0007ff"/><stop offset="0.306" stop-color="#0404ff"/><stop offset="1.000" stop-color="#2300ff"/></linearGradient>
<linearGradient id="c296" gradientUnits="userSpaceOnUse" x1="1294.0" x2="1357.0" y1="0" y2="0"><stop offset="0.000" stop-color="#0006ff"/><stop offset="0.563" stop-color="#0a01ff"/><stop offset="1.000" stop-color="#1c00ff"/></linearGradient>
<linearGradient id="c297" gradientUnits="userSpaceOnUse" x1="1293.6" x2="1349.1" y1="0" y2="0"><stop offset="0.000" stop-color="#0004ff"/><stop offset="0.393" stop-color="#0402ff"/><stop offset="1.000" stop-color="#1700ff"/></linearGradient>
<linearGradient id="c298" gradientUnits="userSpaceOnUse" x1="1293.2" x2="1341.2" y1="0" y2="0"><stop offset="0.000" stop-color="#0003ff"/><stop offset="1.000" stop-color="#1100ff"/></linearGradient>
<linearGradient id="c299" gradientUnits="userSpaceOnUse" x1="1292.8" x2="1333.2" y1="0" y2="0"><stop offset="0.000" stop-color="#0002ff"/><stop offset="1.000" stop-color="#0d00ff"/></linearGradient>
<linearGradient id="c300" gradientUnits="userSpaceOnUse" x1="1292.4" x2="1325.3" y1="0" y2="0"><stop offset="0.000" stop-color="#0001ff"/><stop offset="1.000" stop-color="#0900ff"/></linearGradient>
<linearGradient id="c301" gradientUnits="userSpaceOnUse" x1="1292.0" x2="1317.4" y1="0" y2="0"><stop offset="0.000" stop-color="#0001ff"/><stop offset="1.000" stop-color="#0600ff"/></linearGradient>
<linearGradient id="c302" gradientUnits="userSpaceOnUse" x1="1291.9" x2="1309.5" y1="0" y2="0"><stop offset="0.000" stop-color="#0000ff"/><stop offset="1.000" stop-color="#0300ff"/></linearGradient>
<linearGradient id="c303" gradientUnits="userSpaceOnUse" x1="1291.9" x2="1301.6" y1="0" y2="0"><stop offset="0.000" stop-color="#0000ff"/><stop offset="1.000" stop-color="#0100ff"/></linearGradient>
<linearGradient id="c304" gradientUnits="userSpaceOnUse" x1="1649.5" x2="1900" y1="0" y2="0"><stop offset="0.000" stop-color="#69ffa8"/><stop offset="0.077" stop-color="#74ffa7"/><stop offset="0.154" stop-color="#80ffa6"/><stop offset="0.231" stop-color="#8cffa5"/><stop offset="0.308" stop-color="#99ffa4"/><stop offset="0.385" stop-color="#a7ffa3"/><stop offset="0.462" stop-color="#b6ffa2"/><stop offset="0.538" stop-color="#c6ffa1"/><stop offset="0.615" stop-color="#d6ff9f"/><stop offset="0.692" stop-color="#e8ff9e"/><stop offset="0.769" stop-color="#faff9d"/><stop offset="0.846" stop-color="#fff193"/><stop offset="0.923" stop-color="#ffe087"/><stop offset="1.000" stop-color="#ffd07d"/></linearGradient>
<linearGradient id="c305" gradientUnits="userSpaceOnUse" x1="1649.5" x2="1900" y1="0" y2="0"><stop offset="0.000" stop-color="#6affab"/><stop offset="0.077" stop-color="#75ffaa"/><stop offset="0.154" stop-color="#81ffa9"/><stop offset="0.231" stop-color="#8effa8"/><stop offset="0.308" stop-color="#9bffa7"/><stop offset="0.385" stop-color="#a9ffa6"/><stop offset="0.462" stop-color="#b8ffa5"/><stop offset="0.538" stop-color="#c8ffa4"/><stop offset="0.615" stop-color="#d9ffa2"/><stop offset="0.692" stop-color="#ebffa1"/><stop offset="0.769" stop-color="#fdffa0"/><stop offset="0.846" stop-color="#ffee94"/><stop offset="0.923" stop-color="#ffdd89"/><stop offset="1.000" stop-color="#ffce7e"/></linearGradient>
<linearGradient id="c306" gradientUnits="userSpaceOnUse" x1="1649.5" x2="1900" y1="0" y2="0"><stop offset="0.000" stop-color="#6bffae"/><stop offset="0.077" stop-color="#77ffad"/><stop offset="0.154" stop-color="#83ffac"/><stop offset="0.231" stop-color="#90ffab"/><stop offset="0.308" stop-color="#9dffaa"/><stop offset="0.385" stop-color="#abffa9"/><stop offset="0.462" stop-color="#bbffa8"/><stop offset="0.538" stop-color="#cbffa7"/><stop offset="0.615" stop-color="#dcffa6"/><stop offset="0.692" stop-color="#edffa5"/><stop offset="0.769" stop-color="#fffea2"/><stop offset="0.846" stop-color="#ffeb95"/><stop offset="0.923" stop-color="#ffda8a"/><stop offset="1.000" stop-color="#ffcb7f"/></linearGradient>
<linearGradient id="c307" gradientUnits="userSpaceOnUse" x1="1649.5" x2="1900" y1="0" y2="0"><stop offset="0.000" stop-color="#6dffb1"/><stop offset="0.077" stop-color="#78ffb0"/><stop offset="0.154" stop-color="#84ffaf"/><stop offset="0.231" stop-color="#91ffae"/><stop offset="0.308" stop-color="#9fffad"/><stop offset="0.385" stop-color="#adffac"/><stop offset="0.462" stop-color="#bdffab"/><stop offset="0.538" stop-color="#cdffaa"/><stop offset="0.615" stop-color="#deffa9"/><stop offset="0.692" stop-color="#f0ffa8"/><stop offset="0.769" stop-color="#fffaa4"/><stop offset="0.846" stop-color="#ffe897"/><stop offset="0.923" stop-color="#ffd88b"/><stop offset="1.000" stop-color="#ffc980"/></linearGradient>
<linearGradient id="c308" gradientUnits="userSpaceOnUse" x1="1649.5" x2="1900" y1="0" y2="0"><stop offset="0.000" stop-color="#6effb4"/><stop offset="0.077" stop-color="#7affb3"/><stop offset="0.154" stop-color="#86ffb2"/><stop offset="0.231" stop-color="#93ffb2"/><stop offset="0.308" stop-color="#a1ffb1"/><stop offset="0.385" stop-color="#b0ffb0"/><stop offset="0.462" stop-color="#bfffaf"/><stop offset="0.538" stop-color="#d0ffad"/><stop offset="0.615" stop-color="#e1ffac"/><stop offset="0.692" stop-color="#f3ffab"/><stop offset="0.769" stop-color="#fff7a5"/><stop offset="0.846" stop-color="#ffe598"/><stop offset="0.923" stop-color="#ffd58c"/><stop offset="1.000" stop-color="#ffc681"/></linearGradient>
<linearGradient id="c309" gradientUnits="userSpaceOnUse" x1="1649.5" x2="1900" y1="0" y2="0"><stop offset="0.000" stop-color="#6fffb7"/><stop offset="0.077" stop-color="#7bffb7"/><stop offset="0.154" stop-color="#87ffb6"/><stop offset="0.231" stop-color="#95ffb5"/><stop offset="0.308" stop-color="#a3ffb4"/><stop offset="0.385" stop-color="#b2ffb3"/><stop offset="0.462" stop-color="#c1ffb2"/><stop offset="0.538" stop-color="#d2ffb1"/><stop offset="0.615" stop-color="#e4ffb0"/><stop offset="0.692" stop-color="#f7ffaf"/><stop offset="0.769" stop-color="#fff4a6"/><stop offset="0.846" stop-color="#ffe299"/><stop offset="0.923" stop-color="#ffd28d"/><stop offset="1.000" stop-color="#ffc382"/></linearGradient>
<linearGradient id="c310" gradientUnits="userSpaceOnUse" x1="1649.5" x2="1900" y1="0" y2="0"><stop offset="0.000" stop-color="#71ffbb"/><stop offset="0.077" stop-color="#7cffba"/><stop offset="0.154" stop-color="#89ffb9"/><stop offset="0.231" stop-color="#97ffb8"/><stop offset="0.308" stop-color="#a5ffb7"/><stop offset="0.385" stop-color="#b4ffb6"/><stop offset="0.462" stop-color="#c4ffb5"/><stop offset="0.538" stop-color="#d5ffb4"/><stop offset="0.615" stop-color="#e7ffb3"/><stop offset="0.692" stop-color="#faffb2"/><stop offset="0.769" stop-color="#fff1a8"/><stop offset="0.846" stop-color="#ffdf9a"/><stop offset="0.923" stop-color="#ffcf8e"/><stop offset="1.000" stop-color="#ffc183"/></linearGradient>
<linearGradient id="c311" gradientUnits="userSpaceOnUse" x1="1649.5" x2="1900" y1="0" y2="0"><stop offset="0.000" stop-color="#72ffbe"/><stop offset="0.077" stop-color="#7effbd"/><stop offset="0.154" stop-color="#8bffbc"/><stop offset="0.231" stop-color="#98ffbc"/><stop offset="0.308" stop-color="#a7ffbb"/><stop offset="0.385" stop-color="#b6ffba"/><stop offset="0.462" stop-color="#c6ffb9"/><stop offset="0.538" stop-color="#d7ffb8"/><stop offset="0.615" stop-color="#eaffb7"/><stop offset="0.692" stop-color="#fdffb6"/><stop offset="0.769" stop-color="#ffeea9"/><stop offset="0.846" stop-color="#ffdd9c"/><stop offset="0.923" stop-color="#ffcd8f"/><stop offset="1.000" stop-color="#ffbe85"/></linearGradient>
<linearGradient id="c312" gradientUnits="userSpaceOnUse" x1="1649.5" x2="1900" y1="0" y2="0"><stop offset="0.000" stop-color="#73ffc1"/><stop offset="0.077" stop-color="#80ffc1"/><stop offset="0.154" stop-color="#8cffc0"/><stop offset="0.231" stop-color="#9affbf"/><stop offset="0.308" stop-color="#a9ffbe"/><stop offset="0.385" stop-color="#b8ffbd"/><stop offset="0.462" stop-color="#c9ffbc"/><stop offset="0.538" stop-color="#daffbb"/><stop offset="0.615" stop-color="#edffbb"/><stop offset="0.692" stop-color="#fffeb9"/><stop offset="0.769" stop-color="#ffebaa"/><stop offset="0.846" stop-color="#ffda9d"/><stop offset="0.923" stop-color="#ffca91"/><stop offset="1.000" stop-color="#ffbc86"/></linearGradient>
<linearGradient id="c313" gradientUnits="userSpaceOnUse" x1="1649.5" x2="1900" y1="0" y2="0"><stop offset="0.000" stop-color="#75ffc5"/><stop offset="0.077" stop-color="#81ffc4"/><stop offset="0.154" stop-color="#8effc3"/><stop offset="0.231" stop-color="#9cffc3"/><stop offset="0.308" stop-color="#abffc2"/><stop offset="0.385" stop-color="#bbffc1"/><stop offset="0.462" stop-color="#cbffc0"/><stop offset="0.538" stop-color="#ddffbf"/><stop offset="0.615" stop-color="#f0ffbe"/><stop offset="0.692" stop-color="#fffbba"/><stop offset="0.769" stop-color="#ffe8ab"/><stop offset="0.846" stop-color="#ffd79e"/><stop offset="0.923" stop-color="#ffc792"/><stop offset="1.000" stop-color="#ffb987"/></linearGradient>
<linearGradient id="c314" gradientUnits="userSpaceOnUse" x1="1649.5" x2="1900" y1="0" y2="0"><stop offset="0.000" stop-color="#76ffc8"/><stop offset="0.077" stop-color="#83ffc8"/><stop offset="0.154" stop-color="#90ffc7"/><stop offset="0.231" stop-color="#9effc6"/><stop offset="0.308" stop-color="#adffc5"/><stop offset="0.385" stop-color="#bdffc5"/><stop offset="0.462" stop-color="#ceffc4"/><stop offset="0.538" stop-color="#e0ffc3"/><stop offset="0.615" stop-color="#f3ffc2"/><stop offset="0.692" stop-color="#fff7bc"/><stop offset="0.769" stop-color="#ffe5ad"/><stop offset="0.846" stop-color="#ffd49f"/><stop offset="0.923" stop-color="#ffc593"/><stop offset="1.000" stop-color="#ffb788"/></linearGradient>
<linearGradient id="c315" gradientUnits="userSpaceOnUse" x1="1649.5" x2="1900" y1="0" y2="0"><stop offset="0.000" stop-color="#78ffcc"/><stop offset="0.077" stop-color="#84ffcb"/><stop offset="0.154" stop-color="#92ffca"/><stop offset="0.231" stop-color="#a0ffca"/><stop offset="0.308" stop-color="#afffc9"/><stop offset="0.385" stop-color="#bfffc8"/><stop offset="0.462" stop-color="#d0ffc8"/><stop offset="0.538" stop-color="#e3ffc7"/><stop offset="0.615" stop-color="#f6ffc6"/><stop offset="0.692" stop-color="#fff4bd"/><stop offset="0.769" stop-color="#ffe2ae"/><stop offset="0.846" stop-color="#ffd1a0"/><stop offset="0.923" stop-color="#ffc294"/><stop offset="1.000" stop-color="#ffb489"/></linearGradient>
<linearGradient id="c316" gradientUnits="userSpaceOnUse" x1="1649.5" x2="1900" y1="0" y2="0"><stop offset="0.000" stop-color="#79ffcf"/><stop offset="0.077" stop-color="#86ffcf"/><stop offset="0.154" stop-color="#94ffce"/><stop offset="0.231" stop-color="#a2ffce"/><stop offset="0.308" stop-color="#b1ffcd"/><stop offset="0.385" stop-color="#c2ffcc"/><stop offset="0.462" stop-color="#d3ffcb"/><stop offset="0.538" stop-color="#e6ffcb"/><stop offset="0.615" stop-color="#f9ffca"/><stop offset="0.692" stop-color="#fff1be"/><stop offset="0.769" stop-color="#ffdfaf"/><stop offset="0.846" stop-color="#ffcea2"/><stop offset="0.923" stop-color="#ffc095"/><stop offset="1.000" stop-color="#ffb28a"/></linearGradient>
<linearGradient id="c317" gradientUnits="userSpaceOnUse" x1="1649.5" x2="1900" y1="0" y2="0"><stop offset="0.000" stop-color="#7bffd3"/><stop offset="0.077" stop-color="#88ffd3"/><stop offset="0.154" stop-color="#95ffd2"/><stop offset="0.231" stop-color="#a4ffd1"/><stop offset="0.308" stop-color="#b4ffd1"/><stop offset="0.385" stop-color="#c4ffd0"/><stop offset="0.462" stop-color="#d6ffcf"/><stop offset="0.538" stop-color="#e9ffcf"/><stop offset="0.615" stop-color="#fcffce"/><stop offset="0.692" stop-color="#ffeec0"/><stop offset="0.769" stop-color="#ffdcb1"/><stop offset="0.846" stop-color="#ffcca3"/><stop offset="0.923" stop-color="#ffbd96"/><stop offset="1.000" stop-color="#ffaf8b"/></linearGradient>
<linearGradient id="c318" gradientUnits="userSpaceOnUse" x1="1649.5" x2="1900" y1="0" y2="0"><stop offset="0.000" stop-color="#7cffd7"/><stop offset="0.077" stop-color="#89ffd6"/><stop offset="0.154" stop-color="#97ffd6"/><stop offset="0.231" stop-color="#a6ffd5"/><stop offset="0.308" stop-color="#b6ffd5"/><stop offset="0.385" stop-color="#c7ffd4"/><stop offset="0.462" stop-color="#d9ffd4"/><stop offset="0.538" stop-color="#ecffd3"/><stop offset="0.615" stop-color="#fffed2"/><stop offset="0.692" stop-color="#ffebc1"/><stop offset="0.769" stop-color="#ffd9b2"/><stop offset="0.846" stop-color="#ffc9a4"/><stop offset="0.923" stop-color="#ffba98"/><stop offset="1.000" stop-color="#ffad8c"/></linearGradient>
<linearGradient id="c319" gradientUnits="userSpaceOnUse" x1="1649.5" x2="1900" y1="0" y2="0"><stop offset="0.000" stop-color="#7effdb"/><stop offset="0.077" stop-color="#8bffda"/><stop offset="0.154" stop-color="#99ffda"/><stop offset="0.231" stop-color="#a8ffd9"/><stop offset="0.308" stop-color="#b8ffd9"/><stop offset="0.385" stop-color="#c9ffd8"/><stop offset="0.462" stop-color="#dcffd8"/><stop offset="0.538" stop-color="#efffd7"/><stop offset="0.615" stop-color="#fffbd3"/><stop offset="0.692" stop-color="#ffe8c2"/><stop offset="0.769" stop-color="#ffd6b3"/><stop offset="0.846" stop-color="#ffc6a5"/><stop offset="0.923" stop-color="#ffb899"/><stop offset="1.000" stop-color="#ffab8d"/></linearGradient>
<linearGradient id="c320" gradientUnits="userSpaceOnUse" x1="1649.5" x2="1900" y1="0" y2="0"><stop offset="0.000" stop-color="#7fffdf"/><stop offset="0.077" stop-color="#8dffde"/><stop offset="0.154" stop-color="#9bffde"/><stop offset="0.231" stop-color="#aaffdd"/><stop offset="0.308" stop-color="#bbffdd"/><stop offset="0.385" stop-color="#ccffdc"/><stop offset="0.462" stop-color="#deffdc"/><stop offset="0.538" stop-color="#f2ffdb"/><stop offset="0.615" stop-color="#fff8d5"/><stop offset="0.692" stop-color="#ffe5c4"/><stop offset="0.769" stop-color="#ffd3b4"/><stop offset="0.846" stop-color="#ffc4a7"/><stop offset="0.923" stop-color="#ffb59a"/><stop offset="1.000" stop-color="#ffa88e"/></linearGradient>
<linearGradient id="c321" gradientUnits="userSpaceOnUse" x1="1649.5" x2="1900" y1="0" y2="0"><stop offset="0.000" stop-color="#81ffe3"/><stop offset="0.077" stop-color="#8fffe2"/><stop offset="0.154" stop-color="#9dffe2"/><stop offset="0.231" stop-color="#adffe2"/><stop offset="0.308" stop-color="#bdffe1"/><stop offset="0.385" stop-color="#cfffe1"/><stop offset="0.462" stop-color="#e1ffe0"/><stop offset="0.538" stop-color="#f5ffe0"/><stop offset="0.615" stop-color="#fff4d6"/><stop offset="0.692" stop-color="#ffe1c5"/><stop offset="0.769" stop-color="#ffd0b6"/><stop offset="0.846" stop-color="#ffc1a8"/><stop offset="0.923" stop-color="#ffb39b"/><stop offset="1.000" stop-color="#ffa690"/></linearGradient>
<linearGradient id="c322" gradientUnits="userSpaceOnUse" x1="1649.5" x2="1900" y1="0" y2="0"><stop offset="0.000" stop-color="#83ffe7"/><stop offset="0.077" stop-color="#90ffe6"/><stop offset="0.154" stop-color="#9fffe6"/><stop offset="0.231" stop-color="#afffe6"/><stop offset="0.308" stop-color="#c0ffe5"/><stop offset="0.385" stop-color="#d1ffe5"/><stop offset="0.462" stop-color="#e4ffe5"/><stop offset="0.538" stop-color="#f8ffe4"/><stop offset="0.615" stop-color="#fff1d8"/><stop offset="0.692" stop-color="#ffdec6"/><stop offset="0.769" stop-color="#ffcdb7"/><stop offset="0.846" stop-color="#ffbea9"/><stop offset="0.923" stop-color="#ffb09c"/><stop offset="1.000" stop-color="#ffa391"/></linearGradient>
<linearGradient id="c323" gradientUnits="userSpaceOnUse" x1="1649.5" x2="1900" y1="0" y2="0"><stop offset="0.000" stop-color="#84ffeb"/><stop offset="0.077" stop-color="#92ffeb"/><stop offset="0.154" stop-color="#a1ffea"/><stop offset="0.231" stop-color="#b1ffea"/><stop offset="0.308" stop-color="#c2ffea"/><stop offset="0.385" stop-color="#d4ffea"/><stop offset="0.462" stop-color="#e7ffe9"/><stop offset="0.538" stop-color="#fcffe9"/><stop offset="0.615" stop-color="#ffeed9"/><stop offset="0.692" stop-color="#ffdbc8"/><stop offset="0.769" stop-color="#ffcbb8"/><stop offset="0.846" stop-color="#ffbbaa"/><stop offset="0.923" stop-color="#ffae9e"/><stop offset="1.000" stop-color="#ffa192"/></linearGradient>
<linearGradient id="c324" gradientUnits="userSpaceOnUse" x1="1649.5" x2="1900" y1="0" y2="0"><stop offset="0.000" stop-color="#86ffef"/><stop offset="0.077" stop-color="#94ffef"/><stop offset="0.154" stop-color="#a3ffef"/><stop offset="0.231" stop-color="#b4ffef"/><stop offset="0.308" stop-color="#c5ffee"/><stop offset="0.385" stop-color="#d7ffee"/><stop offset="0.462" stop-color="#ebffee"/><stop offset="0.538" stop-color="#ffffed"/><stop offset="0.615" stop-color="#ffebda"/><stop offset="0.692" stop-color="#ffd8c9"/><stop offset="0.769" stop-color="#ffc8ba"/><stop offset="0.846" stop-color="#ffb9ac"/><stop offset="0.923" stop-color="#ffab9f"/><stop offset="1.000" stop-color="#ff9f93"/></linearGradient>
<linearGradient id="c325" gradientUnits="userSpaceOnUse" x1="1649.5" x2="1900" y1="0" y2="0"><stop offset="0.000" stop-color="#88fff3"/><stop offset="0.077" stop-color="#96fff3"/><stop offset="0.154" stop-color="#a6fff3"/><stop offset="0.231" stop-color="#b6fff3"/><stop offset="0.308" stop-color="#c7fff3"/><stop offset="0.385" stop-color="#dafff3"/><stop offset="0.462" stop-color="#eefff3"/><stop offset="0.538" stop-color="#fffbef"/><stop offset="0.615" stop-color="#ffe7dc"/><stop offset="0.692" stop-color="#ffd5cb"/><stop offset="0.769" stop-color="#ffc5bb"/><stop offset="0.846" stop-color="#ffb6ad"/><stop offset="0.923" stop-color="#ffa9a0"/><stop offset="1.000" stop-color="#ff9c94"/></linearGradient>
<linearGradient id="c326" gradientUnits="userSpaceOnUse" x1="1649.5" x2="1900" y1="0" y2="0"><stop offset="0.000" stop-color="#89fff8"/><stop offset="0.077" stop-color="#98fff8"/><stop offset="0.154" stop-color="#a8fff8"/><stop offset="0.231" stop-color="#b8fff8"/><stop offset="0.308" stop-color="#cafff8"/><stop offset="0.385" stop-color="#ddfff8"/><stop offset="0.462" stop-color="#f1fff8"/><stop offset="0.538" stop-color="#fff8f0"/><stop offset="0.615" stop-color="#ffe4dd"/><stop offset="0.692" stop-color="#ffd2cc"/><stop offset="0.769" stop-color="#ffc2bc"/><stop offset="0.846" stop-color="#ffb4ae"/><stop offset="0.923" stop-color="#ffa6a1"/><stop offset="1.000" stop-color="#ff9a95"/></linearGradient>
<linearGradient id="c327" gradientUnits="userSpaceOnUse" x1="1649.5" x2="1900" y1="0" y2="0"><stop offset="0.000" stop-color="#8bfffc"/><stop offset="0.077" stop-color="#9afffc"/><stop offset="0.154" stop-color="#aafffc"/><stop offset="0.231" stop-color="#bbfffc"/><stop offset="0.308" stop-color="#cdfffc"/><stop offset="0.385" stop-color="#e0fffc"/><stop offset="0.462" stop-color="#f4fffc"/><stop offset="0.538" stop-color="#fff4f2"/><stop offset="0.615" stop-color="#ffe1df"/><stop offset="0.692" stop-color="#ffcfcd"/><stop offset="0.769" stop-color="#ffbfbe"/><stop offset="0.846" stop-color="#ffb1af"/><stop offset="0.923" stop-color="#ffa4a2"/><stop offset="1.000" stop-color="#ff9896"/></linearGradient>
<linearGradient id="c328" gradientUnits="userSpaceOnUse" x1="1649.5" x2="1900" y1="0" y2="0"><stop offset="0.000" stop-color="#8cfdff"/><stop offset="0.077" stop-color="#9bfdff"/><stop offset="0.154" stop-color="#abfdff"/><stop offset="0.231" stop-color="#bcfdff"/><stop offset="0.308" stop-color="#cefdff"/><stop offset="0.385" stop-color="#e1fdff"/><stop offset="0.462" stop-color="#f5fcff"/><stop offset="0.538" stop-color="#fff1f4"/><stop offset="0.615" stop-color="#ffdee0"/><stop offset="0.692" stop-color="#ffcccf"/><stop offset="0.769" stop-color="#ffbdbf"/><stop offset="0.846" stop-color="#ffaeb0"/><stop offset="0.923" stop-color="#ffa1a3"/><stop offset="1.000" stop-color="#ff9597"/></linearGradient>
<linearGradient id="c329" gradientUnits="userSpaceOnUse" x1="1649.5" x2="1900" y1="0" y2="0"><stop offset="0.000" stop-color="#8bf8ff"/><stop offset="0.077" stop-color="#9af8ff"/><stop offset="0.154" stop-color="#aaf8ff"/><stop offset="0.231" stop-color="#bbf8ff"/><stop offset="0.308" stop-color="#cdf8ff"/><stop offset="0.385" stop-color="#e0f8ff"/><stop offset="0.462" stop-color="#f4f7ff"/><stop offset="0.538" stop-color="#ffeef5"/><stop offset="0.615" stop-color="#ffdbe2"/><stop offset="0.692" stop-color="#ffc9d0"/><stop offset="0.769" stop-color="#ffbac0"/><stop offset="0.846" stop-color="#ffacb2"/><stop offset="0.923" stop-color="#ff9fa5"/><stop offset="1.000" stop-color="#ff9399"/></linearGradient>
<linearGradient id="c330" gradientUnits="userSpaceOnUse" x1="1649.5" x2="1900" y1="0" y2="0"><stop offset="0.000" stop-color="#8bf4ff"/><stop offset="0.077" stop-color="#99f4ff"/><stop offset="0.154" stop-color="#a9f4ff"/><stop offset="0.231" stop-color="#baf3ff"/><stop offset="0.308" stop-color="#cbf3ff"/><stop offset="0.385" stop-color="#def3ff"/><stop offset="0.462" stop-color="#f2f3ff"/><stop offset="0.538" stop-color="#ffeaf7"/><stop offset="0.615" stop-color="#ffd8e3"/><stop offset="0.692" stop-color="#ffc7d1"/><stop offset="0.769" stop-color="#ffb7c1"/><stop offset="0.846" stop-color="#ffa9b3"/><stop offset="0.923" stop-color="#ff9da6"/><stop offset="1.000" stop-color="#ff919a"/></linearGradient>
<linearGradient id="c331" gradientUnits="userSpaceOnUse" x1="1649.5" x2="1900" y1="0" y2="0"><stop offset="0.000" stop-color="#8af0ff"/><stop offset="0.077" stop-color="#99efff"/><stop offset="0.154" stop-color="#a8efff"/><stop offset="0.231" stop-color="#b9efff"/><stop offset="0.308" stop-color="#caeeff"/><stop offset="0.385" stop-color="#ddeeff"/><stop offset="0.462" stop-color="#f1eeff"/><stop offset="0.538" stop-color="#ffe7f8"/><stop offset="0.615" stop-color="#ffd4e5"/><stop offset="0.692" stop-color="#ffc4d3"/><stop offset="0.769" stop-color="#ffb4c3"/><stop offset="0.846" stop-color="#ffa7b4"/><stop offset="0.923" stop-color="#ff9aa7"/><stop offset="1.000" stop-color="#ff8f9b"/></linearGradient>
<linearGradient id="c332" gradientUnits="userSpaceOnUse" x1="1649.5" x2="1900" y1="0" y2="0"><stop offset="0.000" stop-color="#89ebff"/><stop offset="0.077" stop-color="#98ebff"/><stop offset="0.154" stop-color="#a7eaff"/><stop offset="0.231" stop-color="#b8eaff"/><stop offset="0.308" stop-color="#c9eaff"/><stop offset="0.385" stop-color="#dce9ff"/><stop offset="0.462" stop-color="#efe9ff"/><stop offset="0.538" stop-color="#ffe4fa"/><stop offset="0.615" stop-color="#ffd1e6"/><stop offset="0.692" stop-color="#ffc1d4"/><stop offset="0.769" stop-color="#ffb2c4"/><stop offset="0.846" stop-color="#ffa4b5"/><stop offset="0.923" stop-color="#ff98a8"/><stop offset="1.000" stop-color="#ff8c9c"/></linearGradient>
<linearGradient id="c333" gradientUnits="userSpaceOnUse" x1="1649.5" x2="1900" y1="0" y2="0"><stop offset="0.000" stop-color="#89e7ff"/><stop offset="0.077" stop-color="#97e7ff"/><stop offset="0.154" stop-color="#a6e6ff"/><stop offset="0.231" stop-color="#b7e6ff"/><stop offset="0.308" stop-color="#c8e5ff"/><stop offset="0.385" stop-color="#dae5ff"/><stop offset="0.462" stop-color="#eee4ff"/><stop offset="0.538" stop-color="#ffe0fb"/><stop offset="0.615" stop-color="#ffcee7"/><stop offset="0.692" stop-color="#ffbed6"/><stop offset="0.769" stop-color="#ffafc5"/><stop offset="0.846" stop-color="#ffa2b7"/><stop offset="0.923" stop-color="#ff95a9"/><stop offset="1.000" stop-color="#ff8a9d"/></linearGradient>
<linearGradient id="c334" gradientUnits="userSpaceOnUse" x1="1649.5" x2="1900" y1="0" y2="0"><stop offset="0.000" stop-color="#88e3ff"/><stop offset="0.077" stop-color="#96e2ff"/><stop offset="0.154" stop-color="#a6e2ff"/><stop offset="0.231" stop-color="#b6e1ff"/><stop offset="0.308" stop-color="#c7e1ff"/><stop offset="0.385" stop-color="#d9e0ff"/><stop offset="0.462" stop-color="#ede0ff"/><stop offset="0.538" stop-color="#ffddfd"/><stop offset="0.615" stop-color="#ffcbe9"/><stop offset="0.692" stop-color="#ffbbd7"/><stop offset="0.769" stop-color="#ffacc7"/><stop offset="0.846" stop-color="#ff9fb8"/><stop offset="0.923" stop-color="#ff93aa"/><stop offset="1.000" stop-color="#ff889e"/></linearGradient>
<linearGradient id="c335" gradientUnits="userSpaceOnUse" x1="1649.5" x2="1900" y1="0" y2="0"><stop offset="0.000" stop-color="#87dfff"/><stop offset="0.077" stop-color="#96deff"/><stop offset="0.154" stop-color="#a5ddff"/><stop offset="0.231" stop-color="#b5ddff"/><stop offset="0.308" stop-color="#c6dcff"/><stop offset="0.385" stop-color="#d8dcff"/><stop offset="0.462" stop-color="#ebdbff"/><stop offset="0.538" stop-color="#ffdafe"/><stop offset="0.615" stop-color="#ffc8ea"/><stop offset="0.692" stop-color="#ffb8d8"/><stop offset="0.769" stop-color="#ffaac8"/><stop offset="0.846" stop-color="#ff9db9"/><stop offset="0.923" stop-color="#ff91ac"/><stop offset="1.000" stop-color="#ff869f"/></linearGradient>
<linearGradient id="c336" gradientUnits="userSpaceOnUse" x1="1649.5" x2="1900" y1="0" y2="0"><stop offset="0.000" stop-color="#87daff"/><stop offset="0.077" stop-color="#95daff"/><stop offset="0.154" stop-color="#a4d9ff"/><stop offset="0.231" stop-color="#b4d9ff"/><stop offset="0.308" stop-color="#c5d8ff"/><stop offset="0.385" stop-color="#d7d7ff"/><stop offset="0.462" stop-color="#ead7ff"/><stop offset="0.538" stop-color="#fed6ff"/><stop offset="0.615" stop-color="#ffc5ec"/><stop offset="0.692" stop-color="#ffb5da"/><stop offset="0.769" stop-color="#ffa7c9"/><stop offset="0.846" stop-color="#ff9aba"/><stop offset="0.923" stop-color="#ff8fad"/><stop offset="1.000" stop-color="#ff84a0"/></linearGradient>
<linearGradient id="c337" gradientUnits="userSpaceOnUse" x1="1649.5" x2="1900" y1="0" y2="0"><stop offset="0.000" stop-color="#86d6ff"/><stop offset="0.077" stop-color="#94d6ff"/><stop offset="0.154" stop-color="#a3d5ff"/><stop offset="0.231" stop-color="#b3d4ff"/><stop offset="0.308" stop-color="#c4d4ff"/><stop offset="0.385" stop-color="#d6d3ff"/><stop offset="0.462" stop-color="#e9d2ff"/><stop offset="0.538" stop-color="#fdd2ff"/><stop offset="0.615" stop-color="#ffc2ed"/><stop offset="0.692" stop-color="#ffb3db"/><stop offset="0.769" stop-color="#ffa5cb"/><stop offset="0.846" stop-color="#ff98bc"/><stop offset="0.923" stop-color="#ff8cae"/><stop offset="1.000" stop-color="#ff82a2"/></linearGradient>
<linearGradient id="c338" gradientUnits="userSpaceOnUse" x1="1649.5" x2="1900" y1="0" y2="0"><stop offset="0.000" stop-color="#86d2ff"/><stop offset="0.077" stop-color="#93d2ff"/><stop offset="0.154" stop-color="#a2d1ff"/><stop offset="0.231" stop-color="#b2d0ff"/><stop offset="0.308" stop-color="#c3d0ff"/><stop offset="0.385" stop-color="#d4cfff"/><stop offset="0.462" stop-color="#e7ceff"/><stop offset="0.538" stop-color="#fbcdff"/><stop offset="0.615" stop-color="#ffbfef"/><stop offset="0.692" stop-color="#ffb0dc"/><stop offset="0.769" stop-color="#ffa2cc"/><stop offset="0.846" stop-color="#ff95bd"/><stop offset="0.923" stop-color="#ff8aaf"/><stop offset="1.000" stop-color="#ff7fa3"/></linearGradient>
<linearGradient id="c339" gradientUnits="userSpaceOnUse" x1="1649.5" x2="1900" y1="0" y2="0"><stop offset="0.000" stop-color="#85cfff"/><stop offset="0.077" stop-color="#93ceff"/><stop offset="0.154" stop-color="#a1cdff"/><stop offset="0.231" stop-color="#b1ccff"/><stop offset="0.308" stop-color="#c2cbff"/><stop offset="0.385" stop-color="#d3cbff"/><stop offset="0.462" stop-color="#e6caff"/><stop offset="0.538" stop-color="#fac9ff"/><stop offset="0.615" stop-color="#ffbcf0"/><stop offset="0.692" stop-color="#ffadde"/><stop offset="0.769" stop-color="#ffa0cd"/><stop offset="0.846" stop-color="#ff93be"/><stop offset="0.923" stop-color="#ff88b0"/><stop offset="1.000" stop-color="#ff7da4"/></linearGradient>
<linearGradient id="c340" gradientUnits="userSpaceOnUse" x1="1649.5" x2="1900" y1="0" y2="0"><stop offset="0.000" stop-color="#84cbff"/><stop offset="0.077" stop-color="#92caff"/><stop offset="0.154" stop-color="#a1c9ff"/><stop offset="0.231" stop-color="#b0c8ff"/><stop offset="0.308" stop-color="#c1c7ff"/><stop offset="0.385" stop-color="#d2c7ff"/><stop offset="0.462" stop-color="#e5c6ff"/><stop offset="0.538" stop-color="#f8c5ff"/><stop offset="0.615" stop-color="#ffb9f2"/><stop offset="0.692" stop-color="#ffabdf"/><stop offset="0.769" stop-color="#ff9dcf"/><stop offset="0.846" stop-color="#ff91bf"/><stop offset="0.923" stop-color="#ff85b2"/><stop offset="1.000" stop-color="#ff7ba5"/></linearGradient>
<linearGradient id="c341" gradientUnits="userSpaceOnUse" x1="1649.5" x2="1900" y1="0" y2="0"><stop offset="0.000" stop-color="#84c7ff"/><stop offset="0.077" stop-color="#91c6ff"/><stop offset="0.154" stop-color="#a0c5ff"/><stop offset="0.231" stop-color="#afc4ff"/><stop offset="0.308" stop-color="#c0c3ff"/><stop offset="0.385" stop-color="#d1c2ff"/><stop offset="0.462" stop-color="#e3c2ff"/><stop offset="0.538" stop-color="#f7c1ff"/><stop offset="0.615" stop-color="#ffb7f3"/><stop offset="0.692" stop-color="#ffa8e1"/><stop offset="0.769" stop-color="#ff9ad0"/><stop offset="0.846" stop-color="#ff8ec1"/><stop offset="0.923" stop-color="#ff83b3"/><stop offset="1.000" stop-color="#ff79a6"/></linearGradient>
<linearGradient id="c342" gradientUnits="userSpaceOnUse" x1="1649.5" x2="1900" y1="0" y2="0"><stop offset="0.000" stop-color="#83c3ff"/><stop offset="0.077" stop-color="#91c2ff"/><stop offset="0.154" stop-color="#9fc1ff"/><stop offset="0.231" stop-color="#aec0ff"/><stop offset="0.308" stop-color="#bfbfff"/><stop offset="0.385" stop-color="#d0bfff"/><stop offset="0.462" stop-color="#e2beff"/><stop offset="0.538" stop-color="#f5bcff"/><stop offset="0.615" stop-color="#ffb4f4"/><stop offset="0.692" stop-color="#ffa5e2"/><stop offset="0.769" stop-color="#ff98d1"/><stop offset="0.846" stop-color="#ff8cc2"/><stop offset="0.923" stop-color="#ff81b4"/><stop offset="1.000" stop-color="#ff77a7"/></linearGradient>
<linearGradient id="c343" gradientUnits="userSpaceOnUse" x1="1649.5" x2="1900" y1="0" y2="0"><stop offset="0.000" stop-color="#83bfff"/><stop offset="0.077" stop-color="#90bfff"/><stop offset="0.154" stop-color="#9ebeff"/><stop offset="0.231" stop-color="#adbdff"/><stop offset="0.308" stop-color="#bebcff"/><stop offset="0.385" stop-color="#cfbbff"/><stop offset="0.462" stop-color="#e1baff"/><stop offset="0.538" stop-color="#f4b8ff"/><stop offset="0.615" stop-color="#ffb1f6"/><stop offset="0.692" stop-color="#ffa2e3"/><stop offset="0.769" stop-color="#ff95d2"/><stop offset="0.846" stop-color="#ff8ac3"/><stop offset="0.923" stop-color="#ff7fb5"/><stop offset="1.000" stop-color="#ff75a8"/></linearGradient>
<linearGradient id="c344" gradientUnits="userSpaceOnUse" x1="1649.5" x2="1900" y1="0" y2="0"><stop offset="0.000" stop-color="#82bcff"/><stop offset="0.077" stop-color="#8fbbff"/><stop offset="0.154" stop-color="#9ebaff"/><stop offset="0.231" stop-color="#adb9ff"/><stop offset="0.308" stop-color="#bdb8ff"/><stop offset="0.385" stop-color="#ceb7ff"/><stop offset="0.462" stop-color="#e0b6ff"/><stop offset="0.538" stop-color="#f3b5ff"/><stop offset="0.615" stop-color="#ffaef7"/><stop offset="0.692" stop-color="#ffa0e5"/><stop offset="0.769" stop-color="#ff93d4"/><stop offset="0.846" stop-color="#ff87c4"/><stop offset="0.923" stop-color="#ff7db6"/><stop offset="1.000" stop-color="#ff73aa"/></linearGradient>
<linearGradient id="c345" gradientUnits="userSpaceOnUse" x1="1649.5" x2="1900" y1="0" y2="0"><stop offset="0.000" stop-color="#81b8ff"/><stop offset="0.077" stop-color="#8fb7ff"/><stop offset="0.154" stop-color="#9db6ff"/><stop offset="0.231" stop-color="#acb5ff"/><stop offset="0.308" stop-color="#bcb4ff"/><stop offset="0.385" stop-color="#ccb3ff"/><stop offset="0.462" stop-color="#deb2ff"/><stop offset="0.538" stop-color="#f1b1ff"/><stop offset="0.615" stop-color="#ffabf9"/><stop offset="0.692" stop-color="#ff9de6"/><stop offset="0.769" stop-color="#ff91d5"/><stop offset="0.846" stop-color="#ff85c6"/><stop offset="0.923" stop-color="#ff7bb8"/><stop offset="1.000" stop-color="#ff71ab"/></linearGradient>
<linearGradient id="c346" gradientUnits="userSpaceOnUse" x1="1649.5" x2="1900" y1="0" y2="0"><stop offset="0.000" stop-color="#81b5ff"/><stop offset="0.077" stop-color="#8eb4ff"/><stop offset="0.154" stop-color="#9cb3ff"/><stop offset="0.231" stop-color="#abb2ff"/><stop offset="0.308" stop-color="#bbb0ff"/><stop offset="0.385" stop-color="#cbafff"/><stop offset="0.462" stop-color="#ddaeff"/><stop offset="0.538" stop-color="#f0adff"/><stop offset="0.615" stop-color="#ffa8fa"/><stop offset="0.692" stop-color="#ff9be7"/><stop offset="0.769" stop-color="#ff8ed6"/><stop offset="0.846" stop-color="#ff83c7"/><stop offset="0.923" stop-color="#ff78b9"/><stop offset="1.000" stop-color="#ff6fac"/></linearGradient>
<linearGradient id="c347" gradientUnits="userSpaceOnUse" x1="1649.5" x2="1900" y1="0" y2="0"><stop offset="0.000" stop-color="#80b1ff"/><stop offset="0.077" stop-color="#8db0ff"/><stop offset="0.154" stop-color="#9bafff"/><stop offset="0.231" stop-color="#aaaeff"/><stop offset="0.308" stop-color="#baadff"/><stop offset="0.385" stop-color="#caacff"/><stop offset="0.462" stop-color="#dcaaff"/><stop offset="0.538" stop-color="#efa9ff"/><stop offset="0.615" stop-color="#ffa6fc"/><stop offset="0.692" stop-color="#ff98e9"/><stop offset="0.769" stop-color="#ff8cd8"/><stop offset="0.846" stop-color="#ff80c8"/><stop offset="0.923" stop-color="#ff76ba"/><stop offset="1.000" stop-color="#ff6dad"/></linearGradient>
<linearGradient id="c348" gradientUnits="userSpaceOnUse" x1="1649.5" x2="1900" y1="0" y2="0"><stop offset="0.000" stop-color="#80aeff"/><stop offset="0.077" stop-color="#8dadff"/><stop offset="0.154" stop-color="#9bacff"/><stop offset="0.231" stop-color="#a9aaff"/><stop offset="0.308" stop-color="#b9a9ff"/><stop offset="0.385" stop-color="#c9a8ff"/><stop offset="0.462" stop-color="#dba7ff"/><stop offset="0.538" stop-color="#eda5ff"/><stop offset="0.615" stop-color="#ffa3fd"/><stop offset="0.692" stop-color="#ff95ea"/><stop offset="0.769" stop-color="#ff89d9"/><stop offset="0.846" stop-color="#ff7ec9"/><stop offset="0.923" stop-color="#ff74bb"/><stop offset="1.000" stop-color="#ff6bae"/></linearGradient>
<linearGradient id="c349" gradientUnits="userSpaceOnUse" x1="1649.5" x2="1900" y1="0" y2="0"><stop offset="0.000" stop-color="#7faaff"/><stop offset="0.077" stop-color="#8ca9ff"/><stop offset="0.154" stop-color="#9aa8ff"/><stop offset="0.231" stop-color="#a8a7ff"/><stop offset="0.308" stop-color="#b8a6ff"/><stop offset="0.385" stop-color="#c8a4ff"/><stop offset="0.462" stop-color="#daa3ff"/><stop offset="0.538" stop-color="#eca2ff"/><stop offset="0.615" stop-color="#ffa0ff"/><stop offset="0.692" stop-color="#ff93ec"/><stop offset="0.769" stop-color="#ff87da"/><stop offset="0.846" stop-color="#ff7ccb"/><stop offset="0.923" stop-color="#ff72bc"/><stop offset="1.000" stop-color="#ff69af"/></linearGradient>
<linearGradient id="c350" gradientUnits="userSpaceOnUse" x1="1649.5" x2="1900" y1="0" y2="0"><stop offset="0.000" stop-color="#7fa7ff"/><stop offset="0.077" stop-color="#8ba6ff"/><stop offset="0.154" stop-color="#99a5ff"/><stop offset="0.231" stop-color="#a8a3ff"/><stop offset="0.308" stop-color="#b7a2ff"/><stop offset="0.385" stop-color="#c7a1ff"/><stop offset="0.462" stop-color="#d8a0ff"/><stop offset="0.538" stop-color="#eb9eff"/><stop offset="0.615" stop-color="#fe9dff"/><stop offset="0.692" stop-color="#ff90ed"/><stop offset="0.769" stop-color="#ff85dc"/><stop offset="0.846" stop-color="#ff7acc"/><stop offset="0.923" stop-color="#ff70be"/><stop offset="1.000" stop-color="#ff67b0"/></linearGradient>
<linearGradient id="c351" gradientUnits="userSpaceOnUse" x1="1649.5" x2="1900" y1="0" y2="0"><stop offset="0.000" stop-color="#7ea4ff"/><stop offset="0.077" stop-color="#8ba3ff"/><stop offset="0.154" stop-color="#98a1ff"/><stop offset="0.231" stop-color="#a7a0ff"/><stop offset="0.308" stop-color="#b69fff"/><stop offset="0.385" stop-color="#c69dff"/><stop offset="0.462" stop-color="#d79cff"/><stop offset="0.538" stop-color="#e99bff"/><stop offset="0.615" stop-color="#fc99ff"/><stop offset="0.692" stop-color="#ff8eee"/><stop offset="0.769" stop-color="#ff82dd"/><stop offset="0.846" stop-color="#ff78cd"/><stop offset="0.923" stop-color="#ff6ebf"/><stop offset="1.000" stop-color="#ff65b1"/></linearGradient>
<linearGradient id="c352" gradientUnits="userSpaceOnUse" x1="1649.5" x2="1900" y1="0" y2="0"><stop offset="0.000" stop-color="#7da1ff"/><stop offset="0.077" stop-color="#8a9fff"/><stop offset="0.154" stop-color="#989eff"/><stop offset="0.231" stop-color="#a69dff"/><stop offset="0.308" stop-color="#b59bff"/><stop offset="0.385" stop-color="#c59aff"/><stop offset="0.462" stop-color="#d699ff"/><stop offset="0.538" stop-color="#e897ff"/><stop offset="0.615" stop-color="#fb96ff"/><stop offset="0.692" stop-color="#ff8bf0"/><stop offset="0.769" stop-color="#ff80de"/><stop offset="0.846" stop-color="#ff75ce"/><stop offset="0.923" stop-color="#ff6cc0"/><stop offset="1.000" stop-color="#ff63b3"/></linearGradient>
<linearGradient id="rbR" x1="0" y1="0" x2="0" y2="1"><stop offset="0" stop-color="#ff2020"/><stop offset="1" stop-color="#d00000"/></linearGradient>
<linearGradient id="rbG" x1="0" y1="0" x2="0" y2="1"><stop offset="0" stop-color="#109010"/><stop offset="1" stop-color="#006800"/></linearGradient>
<linearGradient id="rbB" x1="0" y1="0" x2="0" y2="1"><stop offset="0" stop-color="#2a2aff"/><stop offset=".6" stop-color="#0000f0"/><stop offset="1" stop-color="#000090"/></linearGradient>
<linearGradient id="bb" x1="0" y1="0" x2="0" y2="1"><stop offset="0" stop-color="#a8a8a8"/><stop offset=".12" stop-color="#8e8e8e"/><stop offset=".58" stop-color="#848484"/><stop offset=".66" stop-color="#6c6c6c"/><stop offset="1" stop-color="#585858"/></linearGradient>
<linearGradient id="gb2" x1="0" y1="0" x2="0" y2="1"><stop offset="0" stop-color="#a8a8a8"/><stop offset="1" stop-color="#6a6a6a"/></linearGradient>
</defs>
<rect x="0" y="0" width="1920" height="81" fill="#222222"/>
<rect x="0" y="81" width="1920" height="852" fill="#2f2f2f"/>
<rect x="0" y="81" width="2.5" height="852" fill="#262626"/>
<rect x="0" y="933" width="1920" height="78" fill="#1e1e1e"/>
<rect x="-6" y="-8" width="236" height="45" rx="7" fill="url(#logo)" stroke="#7a1a18" stroke-width="1"/>
<text x="8" y="29" font-size="37" fill="#e4e4e4" font-weight="bold" textLength="145" lengthAdjust="spacingAndGlyphs" stroke="#6a1010" stroke-width="1.2" paint-order="stroke">CalMAN</text>
<text x="161" y="29" font-size="37" fill="#e4e4e4" font-weight="bold" textLength="24" lengthAdjust="spacingAndGlyphs" stroke="#6a1010" stroke-width="1.2" paint-order="stroke">5</text>
<circle cx="208" cy="17" r="12" fill="#d81818"/><path d="M202 14 L214 14 L208 21 Z" fill="#fff"/>
<rect x="238" y="15" width="1682" height="6" fill="url(#rb)"/>
<rect x="-5" y="43" width="39" height="35" rx="5" fill="url(#gbtn)"/>
<circle cx="16" cy="60" r="11" fill="#7a7a7a" stroke="#666" stroke-width="1"/><path d="M13 54 L21 60 L13 66 Z" fill="#fff"/>
<path d="M37.5 82 L37.5 49 Q37.5 43.5 43 43.5 L146 43.5 Q151.5 43.5 151.5 49 L151.5 82" fill="url(#gtab)" stroke="#555" stroke-width="1"/>
<line x1="109" y1="44" x2="109" y2="81" stroke="#555" stroke-width="1.5"/>
<text x="44" y="68" font-size="13.5" fill="#d8d8d8" textLength="58.5" lengthAdjust="spacingAndGlyphs" stroke="#d8d8d8" stroke-width="0.5">History 1</text>
<circle cx="129" cy="65" r="10" fill="#383838" stroke="#2c2c2c"/>
<text x="129" y="70" font-size="12" fill="#666" text-anchor="middle" font-weight="bold">+</text>
<rect x="1257" y="43" width="179" height="38" rx="3" fill="url(#gsel)"/>
<rect x="1257" y="43" width="7" height="38" fill="#22cc22"/>
<text x="1267" y="58" font-size="13.5" fill="#e6e6e6" textLength="132" lengthAdjust="spacingAndGlyphs" stroke="#e6e6e6" stroke-width="0.4">X-Rite i1Display Retail</text>
<text x="1267" y="76" font-size="13.5" fill="#e6e6e6" textLength="88" lengthAdjust="spacingAndGlyphs" stroke="#e6e6e6" stroke-width="0.4">LCD (LED RGB)</text>
<circle cx="1416" cy="63" r="11" fill="#5a5a5a"/><path d="M1410 60 L1422 60 L1416 67 Z" fill="#fff"/>
<rect x="1444" y="43" width="162" height="38" rx="3" fill="url(#gsel)"/>
<rect x="1444" y="43" width="7" height="38" fill="#e8e000"/>
<text x="1454" y="58" font-size="13.5" fill="#e6e6e6" textLength="41" lengthAdjust="spacingAndGlyphs" stroke="#e6e6e6" stroke-width="0.4">Source</text>
<circle cx="1586" cy="63" r="11" fill="#5a5a5a"/><path d="M1580 60 L1592 60 L1586 67 Z" fill="#fff"/>
<rect x="1614" y="43" width="178" height="38" rx="3" fill="url(#gsel)"/>
<rect x="1614" y="43" width="7" height="38" fill="#e8e000"/>
<text x="1624" y="58" font-size="13.5" fill="#e6e6e6" textLength="132" lengthAdjust="spacingAndGlyphs" stroke="#e6e6e6" stroke-width="0.4">Direct Display Control</text>
<circle cx="1772" cy="63" r="11" fill="#5a5a5a"/><path d="M1766 60 L1778 60 L1772 67 Z" fill="#fff"/>
<rect x="1797" y="43.5" width="42" height="35" rx="5" fill="url(#gbtn)" stroke="#9a9a9a" stroke-width="1.2"/>
<circle cx="1818.0" cy="61" r="11" fill="none" stroke="#6a6a6a" stroke-width="2"/>
<rect x="1842" y="43.5" width="42" height="35" rx="5" fill="url(#gbtn)" stroke="#9a9a9a" stroke-width="1.2"/>
<circle cx="1863.0" cy="61" r="11" fill="none" stroke="#6a6a6a" stroke-width="2"/>
<rect x="1887" y="43.5" width="38" height="35" rx="5" fill="url(#gbtn)" stroke="#9a9a9a" stroke-width="1.2"/>
<circle cx="1905.5" cy="61" r="11" fill="none" stroke="#6a6a6a" stroke-width="2"/>
<g transform="translate(1818 61)" fill="#e8e8e8"><circle r="5.4"/><rect x="-1.4" y="-8" width="2.8" height="4" transform="rotate(0)"/><rect x="-1.4" y="-8" width="2.8" height="4" transform="rotate(45)"/><rect x="-1.4" y="-8" width="2.8" height="4" transform="rotate(90)"/><rect x="-1.4" y="-8" width="2.8" height="4" transform="rotate(135)"/><rect x="-1.4" y="-8" width="2.8" height="4" transform="rotate(180)"/><rect x="-1.4" y="-8" width="2.8" height="4" transform="rotate(225)"/><rect x="-1.4" y="-8" width="2.8" height="4" transform="rotate(270)"/><rect x="-1.4" y="-8" width="2.8" height="4" transform="rotate(315)"/><circle r="3" fill="#777"/></g>
<text x="1862" y="68" font-size="19" fill="#f0f0f0" text-anchor="middle" font-weight="bold">?</text>
<path d="M1909 54 L1900 61 L1909 68 Z" fill="#fff"/>
<text x="30" y="142.5" font-size="41" fill="#f2f2f2" textLength="220" lengthAdjust="spacingAndGlyphs" stroke="#f2f2f2" stroke-width="0.7">Colorspace</text>
<text x="217" y="195" font-size="16.5" fill="#d8d8d8" text-anchor="middle" textLength="90" lengthAdjust="spacingAndGlyphs" stroke="#d8d8d8" stroke-width="0.3">DeltaE 2000</text>
<rect x="24" y="200" width="385.5" height="432" fill="#232323"/>
<line x1="74.8" y1="200" x2="74.8" y2="638" stroke="#7c7c7c" stroke-width="2"/>
<line x1="126.3" y1="200" x2="126.3" y2="638" stroke="#7c7c7c" stroke-width="2"/>
<line x1="177.8" y1="200" x2="177.8" y2="638" stroke="#7c7c7c" stroke-width="2"/>
<line x1="229.3" y1="200" x2="229.3" y2="638" stroke="#7c7c7c" stroke-width="2"/>
<line x1="280.8" y1="200" x2="280.8" y2="638" stroke="#7c7c7c" stroke-width="2"/>
<line x1="332.3" y1="200" x2="332.3" y2="638" stroke="#7c7c7c" stroke-width="2"/>
<line x1="383.8" y1="200" x2="383.8" y2="638" stroke="#7c7c7c" stroke-width="2"/>
<text x="23.3" y="654" font-size="16.5" fill="#d8d8d8" text-anchor="middle" stroke="#d8d8d8" stroke-width="0.3">0</text>
<text x="74.8" y="654" font-size="16.5" fill="#d8d8d8" text-anchor="middle" stroke="#d8d8d8" stroke-width="0.3">2</text>
<text x="126.3" y="654" font-size="16.5" fill="#d8d8d8" text-anchor="middle" stroke="#d8d8d8" stroke-width="0.3">4</text>
<text x="177.8" y="654" font-size="16.5" fill="#d8d8d8" text-anchor="middle" stroke="#d8d8d8" stroke-width="0.3">6</text>
<text x="229.3" y="654" font-size="16.5" fill="#d8d8d8" text-anchor="middle" stroke="#d8d8d8" stroke-width="0.3">8</text>
<text x="280.8" y="654" font-size="16.5" fill="#d8d8d8" text-anchor="middle" stroke="#d8d8d8" stroke-width="0.3">10</text>
<text x="332.3" y="654" font-size="16.5" fill="#d8d8d8" text-anchor="middle" stroke="#d8d8d8" stroke-width="0.3">12</text>
<text x="383.8" y="654" font-size="16.5" fill="#d8d8d8" text-anchor="middle" stroke="#d8d8d8" stroke-width="0.3">14</text>
<rect x="24" y="200" width="385.5" height="432" fill="none" stroke="#9a9a9a" stroke-width="2"/>
<line x1="24" y1="632" x2="24" y2="638" stroke="#9a9a9a" stroke-width="2"/>
<rect x="24" y="205.9" width="368.6" height="40.4" fill="url(#bar0)" stroke="#111" stroke-width="1.2"/>
<rect x="24" y="259.9" width="34.2" height="40.4" fill="url(#bar1)" stroke="#111" stroke-width="1.2"/>
<rect x="24" y="313.9" width="262.1" height="40.4" fill="url(#bar2)" stroke="#111" stroke-width="1.2"/>
<rect x="24" y="367.9" width="385.5" height="40.4" fill="url(#bar3)" stroke="#111" stroke-width="1.2"/>
<rect x="24" y="421.9" width="146.5" height="40.4" fill="url(#bar4)" stroke="#111" stroke-width="1.2"/>
<rect x="24" y="475.9" width="330.7" height="40.4" fill="url(#bar5)" stroke="#111" stroke-width="1.2"/>
<rect x="24" y="529.9" width="218.7" height="40.4" fill="url(#bar6)" stroke="#111" stroke-width="1.2"/>
<rect x="24" y="583.9" width="301.5" height="40.4" fill="url(#bar7)" stroke="#111" stroke-width="1.2"/>
<text x="538" y="123.5" font-size="16.5" fill="#d8d8d8" text-anchor="middle" stroke="#d8d8d8" stroke-width="0.3">DeltaL</text>
<rect x="470" y="130" width="167" height="330" fill="#232323"/>
<line x1="464" y1="130" x2="637" y2="130" stroke="#9a9a9a" stroke-width="2"/>
<text x="463" y="135.5" font-size="16.5" fill="#d8d8d8" text-anchor="end" stroke="#d8d8d8" stroke-width="0.3">15</text>
<line x1="464" y1="185" x2="637" y2="185" stroke="#7c7c7c" stroke-width="2"/>
<text x="463" y="190.5" font-size="16.5" fill="#d8d8d8" text-anchor="end" stroke="#d8d8d8" stroke-width="0.3">10</text>
<line x1="464" y1="240" x2="637" y2="240" stroke="#7c7c7c" stroke-width="2"/>
<text x="463" y="245.5" font-size="16.5" fill="#d8d8d8" text-anchor="end" stroke="#d8d8d8" stroke-width="0.3">5</text>
<line x1="464" y1="295" x2="637" y2="295" stroke="#7c7c7c" stroke-width="2"/>
<text x="463" y="300.5" font-size="16.5" fill="#d8d8d8" text-anchor="end" stroke="#d8d8d8" stroke-width="0.3">0</text>
<line x1="464" y1="350" x2="637" y2="350" stroke="#7c7c7c" stroke-width="2"/>
<text x="463" y="355.5" font-size="16.5" fill="#d8d8d8" text-anchor="end" stroke="#d8d8d8" stroke-width="0.3">-5</text>
<line x1="464" y1="405" x2="637" y2="405" stroke="#7c7c7c" stroke-width="2"/>
<text x="463" y="410.5" font-size="16.5" fill="#d8d8d8" text-anchor="end" stroke="#d8d8d8" stroke-width="0.3">-10</text>
<line x1="464" y1="460" x2="637" y2="460" stroke="#9a9a9a" stroke-width="2"/>
<text x="463" y="465.5" font-size="16.5" fill="#d8d8d8" text-anchor="end" stroke="#d8d8d8" stroke-width="0.3">-15</text>
<rect x="470" y="130" width="167" height="330" fill="none" stroke="#9a9a9a" stroke-width="2"/>
<line x1="470" y1="460" x2="470" y2="466" stroke="#9a9a9a" stroke-width="2"/>
<line x1="637" y1="460" x2="637" y2="466" stroke="#9a9a9a" stroke-width="2"/>
<text x="554" y="477" font-size="16.5" fill="#d8d8d8" text-anchor="middle" stroke="#d8d8d8" stroke-width="0.3">100W</text>
<line x1="487" y1="295" x2="620" y2="295" stroke="#1a1a1a" stroke-width="2"/>
<text x="765" y="123.5" font-size="16.5" fill="#d8d8d8" text-anchor="middle" stroke="#d8d8d8" stroke-width="0.3">DeltaC</text>
<rect x="697" y="130" width="167" height="330" fill="#232323"/>
<line x1="691" y1="130" x2="864" y2="130" stroke="#9a9a9a" stroke-width="2"/>
<text x="690" y="135.5" font-size="16.5" fill="#d8d8d8" text-anchor="end" stroke="#d8d8d8" stroke-width="0.3">15</text>
<line x1="691" y1="185" x2="864" y2="185" stroke="#7c7c7c" stroke-width="2"/>
<text x="690" y="190.5" font-size="16.5" fill="#d8d8d8" text-anchor="end" stroke="#d8d8d8" stroke-width="0.3">10</text>
<line x1="691" y1="240" x2="864" y2="240" stroke="#7c7c7c" stroke-width="2"/>
<text x="690" y="245.5" font-size="16.5" fill="#d8d8d8" text-anchor="end" stroke="#d8d8d8" stroke-width="0.3">5</text>
<line x1="691" y1="295" x2="864" y2="295" stroke="#7c7c7c" stroke-width="2"/>
<text x="690" y="300.5" font-size="16.5" fill="#d8d8d8" text-anchor="end" stroke="#d8d8d8" stroke-width="0.3">0</text>
<line x1="691" y1="350" x2="864" y2="350" stroke="#7c7c7c" stroke-width="2"/>
<text x="690" y="355.5" font-size="16.5" fill="#d8d8d8" text-anchor="end" stroke="#d8d8d8" stroke-width="0.3">-5</text>
<line x1="691" y1="405" x2="864" y2="405" stroke="#7c7c7c" stroke-width="2"/>
<text x="690" y="410.5" font-size="16.5" fill="#d8d8d8" text-anchor="end" stroke="#d8d8d8" stroke-width="0.3">-10</text>
<line x1="691" y1="460" x2="864" y2="460" stroke="#9a9a9a" stroke-width="2"/>
<text x="690" y="465.5" font-size="16.5" fill="#d8d8d8" text-anchor="end" stroke="#d8d8d8" stroke-width="0.3">-15</text>
<rect x="697" y="130" width="167" height="330" fill="none" stroke="#9a9a9a" stroke-width="2"/>
<line x1="697" y1="460" x2="697" y2="466" stroke="#9a9a9a" stroke-width="2"/>
<line x1="864" y1="460" x2="864" y2="466" stroke="#9a9a9a" stroke-width="2"/>
<text x="781" y="477" font-size="16.5" fill="#d8d8d8" text-anchor="middle" stroke="#d8d8d8" stroke-width="0.3">100W</text>
<rect x="715" y="130" width="131" height="166" fill="url(#dc)" stroke="#111" stroke-width="1.5"/>
<text x="992" y="123.5" font-size="16.5" fill="#d8d8d8" text-anchor="middle" stroke="#d8d8d8" stroke-width="0.3">DeltaH</text>
<rect x="924" y="130" width="167" height="330" fill="#232323"/>
<line x1="918" y1="130" x2="1091" y2="130" stroke="#9a9a9a" stroke-width="2"/>
<text x="917" y="135.5" font-size="16.5" fill="#d8d8d8" text-anchor="end" stroke="#d8d8d8" stroke-width="0.3">15</text>
<line x1="918" y1="185" x2="1091" y2="185" stroke="#7c7c7c" stroke-width="2"/>
<text x="917" y="190.5" font-size="16.5" fill="#d8d8d8" text-anchor="end" stroke="#d8d8d8" stroke-width="0.3">10</text>
<line x1="918" y1="240" x2="1091" y2="240" stroke="#7c7c7c" stroke-width="2"/>
<text x="917" y="245.5" font-size="16.5" fill="#d8d8d8" text-anchor="end" stroke="#d8d8d8" stroke-width="0.3">5</text>
<line x1="918" y1="295" x2="1091" y2="295" stroke="#7c7c7c" stroke-width="2"/>
<text x="917" y="300.5" font-size="16.5" fill="#d8d8d8" text-anchor="end" stroke="#d8d8d8" stroke-width="0.3">0</text>
<line x1="918" y1="350" x2="1091" y2="350" stroke="#7c7c7c" stroke-width="2"/>
<text x="917" y="355.5" font-size="16.5" fill="#d8d8d8" text-anchor="end" stroke="#d8d8d8" stroke-width="0.3">-5</text>
<line x1="918" y1="405" x2="1091" y2="405" stroke="#7c7c7c" stroke-width="2"/>
<text x="917" y="410.5" font-size="16.5" fill="#d8d8d8" text-anchor="end" stroke="#d8d8d8" stroke-width="0.3">-10</text>
<line x1="918" y1="460" x2="1091" y2="460" stroke="#9a9a9a" stroke-width="2"/>
<text x="917" y="465.5" font-size="16.5" fill="#d8d8d8" text-anchor="end" stroke="#d8d8d8" stroke-width="0.3">-15</text>
<rect x="924" y="130" width="167" height="330" fill="none" stroke="#9a9a9a" stroke-width="2"/>
<line x1="924" y1="460" x2="924" y2="466" stroke="#9a9a9a" stroke-width="2"/>
<line x1="1091" y1="460" x2="1091" y2="466" stroke="#9a9a9a" stroke-width="2"/>
<text x="1008" y="477" font-size="16.5" fill="#d8d8d8" text-anchor="middle" stroke="#d8d8d8" stroke-width="0.3">100W</text>
<line x1="941" y1="295" x2="1074" y2="295" stroke="#1a1a1a" stroke-width="2"/>
<rect x="432" y="494.5" width="681" height="169.5" fill="#000"/>
<rect x="452.4" y="501" width="71.5" height="70" fill="#c8bace"/>
<rect x="452.4" y="571" width="71.5" height="69.5" fill="#bfbfbf"/>
<rect x="452.4" y="501" width="71.5" height="139.5" fill="none" stroke="#d8d8d8" stroke-opacity=".7" stroke-width="1"/>
<text x="488.4" y="656" font-size="13.5" fill="#f0f0f0" text-anchor="middle" stroke="#f0f0f0" stroke-width="0.6">White</text>
<rect x="535.6" y="501" width="71.5" height="70" fill="#b80008"/>
<rect x="535.6" y="571" width="71.5" height="69.5" fill="#e00c0c"/>
<rect x="535.6" y="501" width="71.5" height="139.5" fill="none" stroke="#d8d8d8" stroke-opacity=".7" stroke-width="1"/>
<text x="571.6" y="656" font-size="13.5" fill="#f0f0f0" text-anchor="middle" stroke="#f0f0f0" stroke-width="0.6">Red</text>
<rect x="618.8" y="501" width="71.5" height="70" fill="#52cbc8"/>
<rect x="618.8" y="571" width="71.5" height="69.5" fill="#04c96c"/>
<rect x="618.8" y="501" width="71.5" height="139.5" fill="none" stroke="#d8d8d8" stroke-opacity=".7" stroke-width="1"/>
<text x="654.8" y="656" font-size="13.5" fill="#f0f0f0" text-anchor="middle" stroke="#f0f0f0" stroke-width="0.6">Green</text>
<rect x="702.0" y="501" width="71.5" height="70" fill="#3c00d0"/>
<rect x="702.0" y="571" width="71.5" height="69.5" fill="#2a2ec4"/>
<rect x="702.0" y="501" width="71.5" height="139.5" fill="none" stroke="#d8d8d8" stroke-opacity=".7" stroke-width="1"/>
<text x="738.0" y="656" font-size="13.5" fill="#f0f0f0" text-anchor="middle" stroke="#f0f0f0" stroke-width="0.6">Blue</text>
<rect x="785.2" y="501" width="71.5" height="70" fill="#bfc2b6"/>
<rect x="785.2" y="571" width="71.5" height="69.5" fill="#00c9cc"/>
<rect x="785.2" y="501" width="71.5" height="139.5" fill="none" stroke="#d8d8d8" stroke-opacity=".7" stroke-width="1"/>
<text x="821.2" y="656" font-size="13.5" fill="#f0f0f0" text-anchor="middle" stroke="#f0f0f0" stroke-width="0.6">Cyan</text>
<rect x="868.4" y="501" width="71.5" height="70" fill="#bd00d6"/>
<rect x="868.4" y="571" width="71.5" height="69.5" fill="#dc34c4"/>
<rect x="868.4" y="501" width="71.5" height="139.5" fill="none" stroke="#d8d8d8" stroke-opacity=".7" stroke-width="1"/>
<text x="904.4" y="656" font-size="13.5" fill="#f0f0f0" text-anchor="middle" stroke="#f0f0f0" stroke-width="0.6">Magenta</text>
<rect x="951.6" y="501" width="71.5" height="70" fill="#c8c000"/>
<rect x="951.6" y="571" width="71.5" height="69.5" fill="#c5c100"/>
<rect x="951.6" y="501" width="71.5" height="139.5" fill="none" stroke="#d8d8d8" stroke-opacity=".7" stroke-width="1"/>
<text x="987.6" y="656" font-size="13.5" fill="#f0f0f0" text-anchor="middle" stroke="#f0f0f0" stroke-width="0.6">Yellow</text>
<rect x="1034.8" y="501" width="71.5" height="70" fill="#eee4ff"/>
<rect x="1034.8" y="571" width="71.5" height="69.5" fill="#e6e6e6"/>
<rect x="1034.8" y="501" width="71.5" height="139.5" fill="none" stroke="#d8d8d8" stroke-opacity=".7" stroke-width="1"/>
<text x="1070.8" y="656" font-size="13.5" fill="#f0f0f0" text-anchor="middle" stroke="#f0f0f0" stroke-width="0.6">100W</text>
<text transform="translate(447,534) rotate(-90)" font-size="12" font-weight="bold" fill="#eee" text-anchor="middle">Actual</text>
<text transform="translate(447,611) rotate(-90)" font-size="12" font-weight="bold" fill="#eee" text-anchor="middle">Target</text>
<rect x="1120" y="96" width="800" height="583" fill="#1c1c1c"/>
<rect x="1128" y="104" width="784" height="567.5" fill="#333333"/>
<text x="1520" y="122" font-size="16.5" fill="#d8d8d8" text-anchor="middle" stroke="#d8d8d8" stroke-width="0.3">CIE 1931 xy</text>
<rect x="1162.5" y="127.5" width="745" height="514.5" fill="#252525"/>
<g clip-path="url(#hs)"><rect x="1216.7" y="131" width="39.5" height="3.5" fill="url(#c0)"/><rect x="1209.6" y="134" width="61.4" height="3.5" fill="url(#c1)"/><rect x="1202.5" y="137" width="77.2" height="3.5" fill="url(#c2)"/><rect x="1195.4" y="140" width="92.9" height="3.5" fill="url(#c3)"/><rect x="1191.9" y="143" width="105.1" height="3.5" fill="url(#c4)"/><rect x="1190.2" y="146" width="114.8" height="3.5" fill="url(#c5)"/><rect x="1188.4" y="149" width="123.4" height="3.5" fill="url(#c6)"/><rect x="1186.7" y="152" width="132.0" height="3.5" fill="url(#c7)"/><rect x="1184.9" y="155" width="140.6" height="3.5" fill="url(#c8)"/><rect x="1183.1" y="158" width="149.2" height="3.5" fill="url(#c9)"/><rect x="1181.4" y="161" width="157.4" height="3.5" fill="url(#c10)"/><rect x="1179.6" y="164" width="165.0" height="3.5" fill="url(#c11)"/><rect x="1177.8" y="167" width="172.6" height="3.5" fill="url(#c12)"/><rect x="1176.1" y="170" width="180.3" height="3.5" fill="url(#c13)"/><rect x="1174.3" y="173" width="187.9" height="3.5" fill="url(#c14)"/><rect x="1172.5" y="176" width="195.5" height="3.5" fill="url(#c15)"/><rect x="1170.9" y="179" width="202.5" height="3.5" fill="url(#c16)"/><rect x="1170.4" y="182" width="208.2" height="3.5" fill="url(#c17)"/><rect x="1170.0" y="185" width="213.9" height="3.5" fill="url(#c18)"/><rect x="1169.5" y="188" width="219.6" height="3.5" fill="url(#c19)"/><rect x="1169.1" y="191" width="225.3" height="3.5" fill="url(#c20)"/><rect x="1168.6" y="194" width="231.0" height="3.5" fill="url(#c21)"/><rect x="1168.2" y="197" width="236.5" height="3.5" fill="url(#c22)"/><rect x="1167.7" y="200" width="241.8" height="3.5" fill="url(#c23)"/><rect x="1167.2" y="203" width="247.1" height="3.5" fill="url(#c24)"/><rect x="1166.8" y="206" width="252.5" height="3.5" fill="url(#c25)"/><rect x="1166.3" y="209" width="257.8" height="3.5" fill="url(#c26)"/><rect x="1165.9" y="212" width="263.1" height="3.5" fill="url(#c27)"/><rect x="1165.4" y="215" width="268.4" height="3.5" fill="url(#c28)"/><rect x="1165.0" y="218" width="273.5" height="3.5" fill="url(#c29)"/><rect x="1164.5" y="221" width="278.6" height="3.5" fill="url(#c30)"/><rect x="1164.0" y="224" width="283.7" height="3.5" fill="url(#c31)"/><rect x="1163.6" y="227" width="288.9" height="3.5" fill="url(#c32)"/><rect x="1163.1" y="230" width="294.0" height="3.5" fill="url(#c33)"/><rect x="1162.7" y="233" width="299.1" height="3.5" fill="url(#c34)"/><rect x="1162.2" y="236" width="304.2" height="3.5" fill="url(#c35)"/><rect x="1162.1" y="239" width="308.8" height="3.5" fill="url(#c36)"/><rect x="1162.1" y="242" width="313.4" height="3.5" fill="url(#c37)"/><rect x="1162.2" y="245" width="317.8" height="3.5" fill="url(#c38)"/><rect x="1162.3" y="248" width="322.2" height="3.5" fill="url(#c39)"/><rect x="1162.5" y="251" width="326.6" height="3.5" fill="url(#c40)"/><rect x="1162.7" y="254" width="330.9" height="3.5" fill="url(#c41)"/><rect x="1162.8" y="257" width="335.3" height="3.5" fill="url(#c42)"/><rect x="1163.0" y="260" width="339.6" height="3.5" fill="url(#c43)"/><rect x="1163.1" y="263" width="343.9" height="3.5" fill="url(#c44)"/><rect x="1163.3" y="266" width="348.1" height="3.5" fill="url(#c45)"/><rect x="1163.5" y="269" width="352.4" height="3.5" fill="url(#c46)"/><rect x="1163.6" y="272" width="356.7" height="3.5" fill="url(#c47)"/><rect x="1163.8" y="275" width="361.0" height="3.5" fill="url(#c48)"/><rect x="1163.9" y="278" width="365.3" height="3.5" fill="url(#c49)"/><rect x="1164.1" y="281" width="369.5" height="3.5" fill="url(#c50)"/><rect x="1164.3" y="284" width="373.8" height="3.5" fill="url(#c51)"/><rect x="1164.4" y="287" width="378.1" height="3.5" fill="url(#c52)"/><rect x="1164.6" y="290" width="382.3" height="3.5" fill="url(#c53)"/><rect x="1164.7" y="293" width="386.6" height="3.5" fill="url(#c54)"/><rect x="1164.9" y="296" width="390.8" height="3.5" fill="url(#c55)"/><rect x="1165.1" y="299" width="395.1" height="3.5" fill="url(#c56)"/><rect x="1165.2" y="302" width="399.3" height="3.5" fill="url(#c57)"/><rect x="1165.4" y="305" width="403.5" height="3.5" fill="url(#c58)"/><rect x="1165.6" y="308" width="407.8" height="3.5" fill="url(#c59)"/><rect x="1165.7" y="311" width="412.0" height="3.5" fill="url(#c60)"/><rect x="1165.9" y="314" width="416.2" height="3.5" fill="url(#c61)"/><rect x="1166.4" y="317" width="420.1" height="3.5" fill="url(#c62)"/><rect x="1166.9" y="320" width="423.9" height="3.5" fill="url(#c63)"/><rect x="1167.4" y="323" width="427.8" height="3.5" fill="url(#c64)"/><rect x="1168.0" y="326" width="431.6" height="3.5" fill="url(#c65)"/><rect x="1168.5" y="329" width="435.5" height="3.5" fill="url(#c66)"/><rect x="1169.0" y="332" width="439.3" height="3.5" fill="url(#c67)"/><rect x="1169.6" y="335" width="443.1" height="3.5" fill="url(#c68)"/><rect x="1170.1" y="338" width="447.0" height="3.5" fill="url(#c69)"/><rect x="1170.6" y="341" width="450.8" height="3.5" fill="url(#c70)"/><rect x="1171.2" y="344" width="454.7" height="3.5" fill="url(#c71)"/><rect x="1171.7" y="347" width="458.5" height="3.5" fill="url(#c72)"/><rect x="1172.2" y="350" width="462.4" height="3.5" fill="url(#c73)"/><rect x="1172.8" y="353" width="466.2" height="3.5" fill="url(#c74)"/><rect x="1173.3" y="356" width="470.0" height="3.5" fill="url(#c75)"/><rect x="1173.8" y="359" width="473.9" height="3.5" fill="url(#c76)"/><rect x="1174.3" y="362" width="477.7" height="3.5" fill="url(#c77)"/><rect x="1174.9" y="365" width="481.6" height="3.5" fill="url(#c78)"/><rect x="1175.4" y="368" width="485.5" height="3.5" fill="url(#c79)"/><rect x="1175.9" y="371" width="489.3" height="3.5" fill="url(#c80)"/><rect x="1176.5" y="374" width="493.2" height="3.5" fill="url(#c81)"/><rect x="1177.0" y="377" width="497.0" height="3.5" fill="url(#c82)"/><rect x="1177.5" y="380" width="500.9" height="3.5" fill="url(#c83)"/><rect x="1178.1" y="383" width="504.7" height="3.5" fill="url(#c84)"/><rect x="1178.6" y="386" width="508.5" height="3.5" fill="url(#c85)"/><rect x="1179.1" y="389" width="512.4" height="3.5" fill="url(#c86)"/><rect x="1179.8" y="392" width="516.1" height="3.5" fill="url(#c87)"/><rect x="1180.6" y="395" width="519.6" height="3.5" fill="url(#c88)"/><rect x="1181.4" y="398" width="523.2" height="3.5" fill="url(#c89)"/><rect x="1182.2" y="401" width="526.8" height="3.5" fill="url(#c90)"/><rect x="1183.0" y="404" width="530.3" height="3.5" fill="url(#c91)"/><rect x="1183.8" y="407" width="533.9" height="3.5" fill="url(#c92)"/><rect x="1184.6" y="410" width="537.5" height="3.5" fill="url(#c93)"/><rect x="1185.4" y="413" width="541.0" height="3.5" fill="url(#c94)"/><rect x="1186.2" y="416" width="544.6" height="3.5" fill="url(#c95)"/><rect x="1187.1" y="419" width="548.2" height="3.5" fill="url(#c96)"/><rect x="1187.9" y="422" width="551.8" height="3.5" fill="url(#c97)"/><rect x="1188.7" y="425" width="555.4" height="3.5" fill="url(#c98)"/><rect x="1189.5" y="428" width="559.0" height="3.5" fill="url(#c99)"/><rect x="1190.3" y="431" width="562.6" height="3.5" fill="url(#c100)"/><rect x="1191.1" y="434" width="566.1" height="3.5" fill="url(#c101)"/><rect x="1191.9" y="437" width="569.7" height="3.5" fill="url(#c102)"/><rect x="1192.7" y="440" width="573.2" height="3.5" fill="url(#c103)"/><rect x="1193.5" y="443" width="576.8" height="3.5" fill="url(#c104)"/><rect x="1194.4" y="446" width="580.3" height="3.5" fill="url(#c105)"/><rect x="1195.2" y="449" width="583.9" height="3.5" fill="url(#c106)"/><rect x="1196.0" y="452" width="587.5" height="3.5" fill="url(#c107)"/><rect x="1196.8" y="455" width="591.1" height="3.5" fill="url(#c108)"/><rect x="1197.6" y="458" width="594.6" height="3.5" fill="url(#c109)"/><rect x="1198.4" y="461" width="598.2" height="3.5" fill="url(#c110)"/><rect x="1199.3" y="464" width="601.6" height="3.5" fill="url(#c111)"/><rect x="1200.4" y="467" width="604.9" height="3.5" fill="url(#c112)"/><rect x="1201.5" y="470" width="608.3" height="3.5" fill="url(#c113)"/><rect x="1202.6" y="473" width="611.5" height="3.5" fill="url(#c114)"/><rect x="1203.6" y="476" width="613.4" height="3.5" fill="url(#c115)"/><rect x="1204.7" y="479" width="612.3" height="3.5" fill="url(#c116)"/><rect x="1205.8" y="482" width="608.1" height="3.5" fill="url(#c117)"/><rect x="1206.9" y="485" width="597.6" height="3.5" fill="url(#c118)"/><rect x="1207.9" y="488" width="587.2" height="3.5" fill="url(#c119)"/><rect x="1209.0" y="491" width="576.7" height="3.5" fill="url(#c120)"/><rect x="1210.1" y="494" width="566.2" height="3.5" fill="url(#c121)"/><rect x="1211.2" y="497" width="555.8" height="3.5" fill="url(#c122)"/><rect x="1212.3" y="500" width="545.3" height="3.5" fill="url(#c123)"/><rect x="1213.3" y="503" width="534.8" height="3.5" fill="url(#c124)"/><rect x="1214.4" y="506" width="524.4" height="3.5" fill="url(#c125)"/><rect x="1215.5" y="509" width="513.9" height="3.5" fill="url(#c126)"/><rect x="1216.6" y="512" width="503.4" height="3.5" fill="url(#c127)"/><rect x="1217.6" y="515" width="493.0" height="3.5" fill="url(#c128)"/><rect x="1218.7" y="518" width="482.5" height="3.5" fill="url(#c129)"/><rect x="1219.9" y="521" width="472.0" height="3.5" fill="url(#c130)"/><rect x="1221.3" y="524" width="461.1" height="3.5" fill="url(#c131)"/><rect x="1222.8" y="527" width="450.3" height="3.5" fill="url(#c132)"/><rect x="1224.2" y="530" width="439.4" height="3.5" fill="url(#c133)"/><rect x="1225.7" y="533" width="428.6" height="3.5" fill="url(#c134)"/><rect x="1227.1" y="536" width="417.8" height="3.5" fill="url(#c135)"/><rect x="1228.6" y="539" width="406.9" height="3.5" fill="url(#c136)"/><rect x="1230.0" y="542" width="396.1" height="3.5" fill="url(#c137)"/><rect x="1231.5" y="545" width="385.2" height="3.5" fill="url(#c138)"/><rect x="1232.9" y="548" width="374.4" height="3.5" fill="url(#c139)"/><rect x="1234.4" y="551" width="363.6" height="3.5" fill="url(#c140)"/><rect x="1235.8" y="554" width="352.7" height="3.5" fill="url(#c141)"/><rect x="1237.2" y="557" width="341.9" height="3.5" fill="url(#c142)"/><rect x="1238.7" y="560" width="331.0" height="3.5" fill="url(#c143)"/><rect x="1240.2" y="563" width="320.1" height="3.5" fill="url(#c144)"/><rect x="1242.0" y="566" width="309.0" height="3.5" fill="url(#c145)"/><rect x="1243.7" y="569" width="297.9" height="3.5" fill="url(#c146)"/><rect x="1245.5" y="572" width="286.7" height="3.5" fill="url(#c147)"/><rect x="1247.2" y="575" width="275.6" height="3.5" fill="url(#c148)"/><rect x="1248.9" y="578" width="264.5" height="3.5" fill="url(#c149)"/><rect x="1250.7" y="581" width="253.3" height="3.5" fill="url(#c150)"/><rect x="1252.4" y="584" width="242.2" height="3.5" fill="url(#c151)"/><rect x="1254.1" y="587" width="231.1" height="3.5" fill="url(#c152)"/><rect x="1255.9" y="590" width="220.0" height="3.5" fill="url(#c153)"/><rect x="1258.1" y="593" width="208.4" height="3.5" fill="url(#c154)"/><rect x="1260.2" y="596" width="196.8" height="3.5" fill="url(#c155)"/><rect x="1262.4" y="599" width="185.3" height="3.5" fill="url(#c156)"/><rect x="1264.6" y="602" width="173.7" height="3.5" fill="url(#c157)"/><rect x="1266.8" y="605" width="162.1" height="3.5" fill="url(#c158)"/><rect x="1269.0" y="608" width="150.5" height="3.5" fill="url(#c159)"/><rect x="1271.8" y="611" width="138.3" height="3.5" fill="url(#c160)"/><rect x="1274.6" y="614" width="126.2" height="3.5" fill="url(#c161)"/><rect x="1277.3" y="617" width="114.0" height="3.5" fill="url(#c162)"/><rect x="1280.5" y="620" width="101.5" height="3.5" fill="url(#c163)"/><rect x="1284.1" y="623" width="88.4" height="3.5" fill="url(#c164)"/><rect x="1288.0" y="626" width="75.2" height="3.5" fill="url(#c165)"/><rect x="1292.4" y="629" width="61.4" height="3.5" fill="url(#c166)"/><rect x="1297.2" y="632" width="47.2" height="3.5" fill="url(#c167)"/><rect x="1302.2" y="635" width="32.8" height="3.5" fill="url(#c168)"/><rect x="1307.1" y="638" width="18.5" height="3.5" fill="url(#c169)"/></g>
<g clip-path="url(#tri)"><rect x="1344.7" y="206" width="10.8" height="3.5" fill="url(#c170)"/><rect x="1344.3" y="209" width="16.2" height="3.5" fill="url(#c171)"/><rect x="1343.9" y="212" width="21.5" height="3.5" fill="url(#c172)"/><rect x="1343.5" y="215" width="26.8" height="3.5" fill="url(#c173)"/><rect x="1343.1" y="218" width="32.2" height="3.5" fill="url(#c174)"/><rect x="1342.7" y="221" width="37.5" height="3.5" fill="url(#c175)"/><rect x="1342.3" y="224" width="42.8" height="3.5" fill="url(#c176)"/><rect x="1341.9" y="227" width="48.2" height="3.5" fill="url(#c177)"/><rect x="1341.5" y="230" width="53.5" height="3.5" fill="url(#c178)"/><rect x="1341.1" y="233" width="58.8" height="3.5" fill="url(#c179)"/><rect x="1340.7" y="236" width="64.2" height="3.5" fill="url(#c180)"/><rect x="1340.3" y="239" width="69.5" height="3.5" fill="url(#c181)"/><rect x="1339.9" y="242" width="74.9" height="3.5" fill="url(#c182)"/><rect x="1339.5" y="245" width="80.2" height="3.5" fill="url(#c183)"/><rect x="1339.1" y="248" width="85.5" height="3.5" fill="url(#c184)"/><rect x="1338.7" y="251" width="90.9" height="3.5" fill="url(#c185)"/><rect x="1338.3" y="254" width="96.2" height="3.5" fill="url(#c186)"/><rect x="1337.9" y="257" width="101.5" height="3.5" fill="url(#c187)"/><rect x="1337.5" y="260" width="106.9" height="3.5" fill="url(#c188)"/><rect x="1337.1" y="263" width="112.2" height="3.5" fill="url(#c189)"/><rect x="1336.7" y="266" width="117.5" height="3.5" fill="url(#c190)"/><rect x="1336.3" y="269" width="122.9" height="3.5" fill="url(#c191)"/><rect x="1335.9" y="272" width="128.2" height="3.5" fill="url(#c192)"/><rect x="1335.5" y="275" width="133.6" height="3.5" fill="url(#c193)"/><rect x="1335.1" y="278" width="138.9" height="3.5" fill="url(#c194)"/><rect x="1334.7" y="281" width="144.2" height="3.5" fill="url(#c195)"/><rect x="1334.3" y="284" width="149.6" height="3.5" fill="url(#c196)"/><rect x="1333.8" y="287" width="154.9" height="3.5" fill="url(#c197)"/><rect x="1333.4" y="290" width="160.2" height="3.5" fill="url(#c198)"/><rect x="1333.0" y="293" width="165.6" height="3.5" fill="url(#c199)"/><rect x="1332.6" y="296" width="170.9" height="3.5" fill="url(#c200)"/><rect x="1332.2" y="299" width="176.2" height="3.5" fill="url(#c201)"/><rect x="1331.8" y="302" width="181.6" height="3.5" fill="url(#c202)"/><rect x="1331.4" y="305" width="186.9" height="3.5" fill="url(#c203)"/><rect x="1331.0" y="308" width="192.3" height="3.5" fill="url(#c204)"/><rect x="1330.6" y="311" width="197.6" height="3.5" fill="url(#c205)"/><rect x="1330.2" y="314" width="202.9" height="3.5" fill="url(#c206)"/><rect x="1329.8" y="317" width="208.3" height="3.5" fill="url(#c207)"/><rect x="1329.4" y="320" width="213.6" height="3.5" fill="url(#c208)"/><rect x="1329.0" y="323" width="218.9" height="3.5" fill="url(#c209)"/><rect x="1328.6" y="326" width="224.3" height="3.5" fill="url(#c210)"/><rect x="1328.2" y="329" width="229.6" height="3.5" fill="url(#c211)"/><rect x="1327.8" y="332" width="234.9" height="3.5" fill="url(#c212)"/><rect x="1327.4" y="335" width="240.3" height="3.5" fill="url(#c213)"/><rect x="1327.0" y="338" width="245.6" height="3.5" fill="url(#c214)"/><rect x="1326.6" y="341" width="251.0" height="3.5" fill="url(#c215)"/><rect x="1326.2" y="344" width="256.3" height="3.5" fill="url(#c216)"/><rect x="1325.8" y="347" width="261.6" height="3.5" fill="url(#c217)"/><rect x="1325.4" y="350" width="267.0" height="3.5" fill="url(#c218)"/><rect x="1325.0" y="353" width="272.3" height="3.5" fill="url(#c219)"/><rect x="1324.6" y="356" width="277.6" height="3.5" fill="url(#c220)"/><rect x="1324.2" y="359" width="283.0" height="3.5" fill="url(#c221)"/><rect x="1323.8" y="362" width="288.3" height="3.5" fill="url(#c222)"/><rect x="1323.4" y="365" width="293.6" height="3.5" fill="url(#c223)"/><rect x="1323.0" y="368" width="299.0" height="3.5" fill="url(#c224)"/><rect x="1322.6" y="371" width="304.3" height="3.5" fill="url(#c225)"/><rect x="1322.2" y="374" width="309.6" height="3.5" fill="url(#c226)"/><rect x="1321.8" y="377" width="315.0" height="3.5" fill="url(#c227)"/><rect x="1321.4" y="380" width="320.3" height="3.5" fill="url(#c228)"/><rect x="1321.0" y="383" width="325.7" height="3.5" fill="url(#c229)"/><rect x="1320.6" y="386" width="331.0" height="3.5" fill="url(#c230)"/><rect x="1320.2" y="389" width="336.3" height="3.5" fill="url(#c231)"/><rect x="1319.8" y="392" width="341.7" height="3.5" fill="url(#c232)"/><rect x="1319.4" y="395" width="347.0" height="3.5" fill="url(#c233)"/><rect x="1319.0" y="398" width="352.3" height="3.5" fill="url(#c234)"/><rect x="1318.6" y="401" width="357.7" height="3.5" fill="url(#c235)"/><rect x="1318.2" y="404" width="363.0" height="3.5" fill="url(#c236)"/><rect x="1317.8" y="407" width="368.3" height="3.5" fill="url(#c237)"/><rect x="1317.3" y="410" width="373.7" height="3.5" fill="url(#c238)"/><rect x="1316.9" y="413" width="379.0" height="3.5" fill="url(#c239)"/><rect x="1316.5" y="416" width="384.4" height="3.5" fill="url(#c240)"/><rect x="1316.1" y="419" width="389.7" height="3.5" fill="url(#c241)"/><rect x="1315.7" y="422" width="395.0" height="3.5" fill="url(#c242)"/><rect x="1315.3" y="425" width="400.4" height="3.5" fill="url(#c243)"/><rect x="1314.9" y="428" width="405.7" height="3.5" fill="url(#c244)"/><rect x="1314.5" y="431" width="411.0" height="3.5" fill="url(#c245)"/><rect x="1314.1" y="434" width="416.4" height="3.5" fill="url(#c246)"/><rect x="1313.7" y="437" width="418.4" height="3.5" fill="url(#c247)"/><rect x="1313.3" y="440" width="418.8" height="3.5" fill="url(#c248)"/><rect x="1312.9" y="443" width="416.0" height="3.5" fill="url(#c249)"/><rect x="1312.5" y="446" width="408.5" height="3.5" fill="url(#c250)"/><rect x="1312.1" y="449" width="400.9" height="3.5" fill="url(#c251)"/><rect x="1311.7" y="452" width="393.4" height="3.5" fill="url(#c252)"/><rect x="1311.3" y="455" width="385.9" height="3.5" fill="url(#c253)"/><rect x="1310.9" y="458" width="378.4" height="3.5" fill="url(#c254)"/><rect x="1310.5" y="461" width="370.9" height="3.5" fill="url(#c255)"/><rect x="1310.1" y="464" width="363.4" height="3.5" fill="url(#c256)"/><rect x="1309.7" y="467" width="355.9" height="3.5" fill="url(#c257)"/><rect x="1309.3" y="470" width="348.4" height="3.5" fill="url(#c258)"/><rect x="1308.9" y="473" width="340.9" height="3.5" fill="url(#c259)"/><rect x="1308.5" y="476" width="333.4" height="3.5" fill="url(#c260)"/><rect x="1308.1" y="479" width="325.8" height="3.5" fill="url(#c261)"/><rect x="1307.7" y="482" width="318.3" height="3.5" fill="url(#c262)"/><rect x="1307.3" y="485" width="310.8" height="3.5" fill="url(#c263)"/><rect x="1306.9" y="488" width="303.3" height="3.5" fill="url(#c264)"/><rect x="1306.5" y="491" width="295.8" height="3.5" fill="url(#c265)"/><rect x="1306.1" y="494" width="288.3" height="3.5" fill="url(#c266)"/><rect x="1305.7" y="497" width="280.8" height="3.5" fill="url(#c267)"/><rect x="1305.3" y="500" width="273.3" height="3.5" fill="url(#c268)"/><rect x="1304.9" y="503" width="265.8" height="3.5" fill="url(#c269)"/><rect x="1304.5" y="506" width="258.2" height="3.5" fill="url(#c270)"/><rect x="1304.1" y="509" width="250.7" height="3.5" fill="url(#c271)"/><rect x="1303.7" y="512" width="243.2" height="3.5" fill="url(#c272)"/><rect x="1303.3" y="515" width="235.7" height="3.5" fill="url(#c273)"/><rect x="1302.9" y="518" width="228.2" height="3.5" fill="url(#c274)"/><rect x="1302.5" y="521" width="220.7" height="3.5" fill="url(#c275)"/><rect x="1302.1" y="524" width="213.2" height="3.5" fill="url(#c276)"/><rect x="1301.7" y="527" width="205.7" height="3.5" fill="url(#c277)"/><rect x="1301.2" y="530" width="198.2" height="3.5" fill="url(#c278)"/><rect x="1300.8" y="533" width="190.7" height="3.5" fill="url(#c279)"/><rect x="1300.4" y="536" width="183.1" height="3.5" fill="url(#c280)"/><rect x="1300.0" y="539" width="175.6" height="3.5" fill="url(#c281)"/><rect x="1299.6" y="542" width="168.1" height="3.5" fill="url(#c282)"/><rect x="1299.2" y="545" width="160.6" height="3.5" fill="url(#c283)"/><rect x="1298.8" y="548" width="153.1" height="3.5" fill="url(#c284)"/><rect x="1298.4" y="551" width="145.6" height="3.5" fill="url(#c285)"/><rect x="1298.0" y="554" width="138.1" height="3.5" fill="url(#c286)"/><rect x="1297.6" y="557" width="130.6" height="3.5" fill="url(#c287)"/><rect x="1297.2" y="560" width="123.1" height="3.5" fill="url(#c288)"/><rect x="1296.8" y="563" width="115.6" height="3.5" fill="url(#c289)"/><rect x="1296.4" y="566" width="108.0" height="3.5" fill="url(#c290)"/><rect x="1296.0" y="569" width="100.5" height="3.5" fill="url(#c291)"/><rect x="1295.6" y="572" width="93.0" height="3.5" fill="url(#c292)"/><rect x="1295.2" y="575" width="85.5" height="3.5" fill="url(#c293)"/><rect x="1294.8" y="578" width="78.0" height="3.5" fill="url(#c294)"/><rect x="1294.4" y="581" width="70.5" height="3.5" fill="url(#c295)"/><rect x="1294.0" y="584" width="63.0" height="3.5" fill="url(#c296)"/><rect x="1293.6" y="587" width="55.5" height="3.5" fill="url(#c297)"/><rect x="1293.2" y="590" width="48.0" height="3.5" fill="url(#c298)"/><rect x="1292.8" y="593" width="40.5" height="3.5" fill="url(#c299)"/><rect x="1292.4" y="596" width="32.9" height="3.5" fill="url(#c300)"/><rect x="1292.0" y="599" width="25.4" height="3.5" fill="url(#c301)"/><rect x="1291.9" y="602" width="17.7" height="3.5" fill="url(#c302)"/><rect x="1291.9" y="605" width="9.7" height="3.5" fill="url(#c303)"/></g>
<rect x="1162.5" y="127.5" width="745" height="514.5" fill="none" stroke="#9a9a9a" stroke-width="2"/>
<line x1="1156" y1="641.6" x2="1162.5" y2="641.6" stroke="#9a9a9a" stroke-width="2"/>
<text x="1155" y="647.6" font-size="16.5" fill="#d8d8d8" text-anchor="end" stroke="#d8d8d8" stroke-width="0.3">0</text>
<line x1="1161.6" y1="642" x2="1161.6" y2="648" stroke="#9a9a9a" stroke-width="2"/>
<text x="1161.6" y="665" font-size="16.5" fill="#d8d8d8" text-anchor="middle" stroke="#d8d8d8" stroke-width="0.3">0</text>
<line x1="1156" y1="580.5" x2="1162.5" y2="580.5" stroke="#9a9a9a" stroke-width="2"/>
<text x="1155" y="586.5" font-size="16.5" fill="#d8d8d8" text-anchor="end" stroke="#d8d8d8" stroke-width="0.3">0.1</text>
<line x1="1250.3999999999999" y1="642" x2="1250.3999999999999" y2="648" stroke="#9a9a9a" stroke-width="2"/>
<text x="1250.3999999999999" y="665" font-size="16.5" fill="#d8d8d8" text-anchor="middle" stroke="#d8d8d8" stroke-width="0.3">0.1</text>
<line x1="1156" y1="519.4" x2="1162.5" y2="519.4" stroke="#9a9a9a" stroke-width="2"/>
<text x="1155" y="525.4" font-size="16.5" fill="#d8d8d8" text-anchor="end" stroke="#d8d8d8" stroke-width="0.3">0.2</text>
<line x1="1339.1999999999998" y1="642" x2="1339.1999999999998" y2="648" stroke="#9a9a9a" stroke-width="2"/>
<text x="1339.1999999999998" y="665" font-size="16.5" fill="#d8d8d8" text-anchor="middle" stroke="#d8d8d8" stroke-width="0.3">0.2</text>
<line x1="1156" y1="458.30000000000007" x2="1162.5" y2="458.30000000000007" stroke="#9a9a9a" stroke-width="2"/>
<text x="1155" y="464.30000000000007" font-size="16.5" fill="#d8d8d8" text-anchor="end" stroke="#d8d8d8" stroke-width="0.3">0.3</text>
<line x1="1428.0" y1="642" x2="1428.0" y2="648" stroke="#9a9a9a" stroke-width="2"/>
<text x="1428.0" y="665" font-size="16.5" fill="#d8d8d8" text-anchor="middle" stroke="#d8d8d8" stroke-width="0.3">0.3</text>
<line x1="1156" y1="397.20000000000005" x2="1162.5" y2="397.20000000000005" stroke="#9a9a9a" stroke-width="2"/>
<text x="1155" y="403.20000000000005" font-size="16.5" fill="#d8d8d8" text-anchor="end" stroke="#d8d8d8" stroke-width="0.3">0.4</text>
<line x1="1516.8" y1="642" x2="1516.8" y2="648" stroke="#9a9a9a" stroke-width="2"/>
<text x="1516.8" y="665" font-size="16.5" fill="#d8d8d8" text-anchor="middle" stroke="#d8d8d8" stroke-width="0.3">0.4</text>
<line x1="1156" y1="336.1" x2="1162.5" y2="336.1" stroke="#9a9a9a" stroke-width="2"/>
<text x="1155" y="342.1" font-size="16.5" fill="#d8d8d8" text-anchor="end" stroke="#d8d8d8" stroke-width="0.3">0.5</text>
<line x1="1605.6" y1="642" x2="1605.6" y2="648" stroke="#9a9a9a" stroke-width="2"/>
<text x="1605.6" y="665" font-size="16.5" fill="#d8d8d8" text-anchor="middle" stroke="#d8d8d8" stroke-width="0.3">0.5</text>
<line x1="1156" y1="275.00000000000006" x2="1162.5" y2="275.00000000000006" stroke="#9a9a9a" stroke-width="2"/>
<text x="1155" y="281.00000000000006" font-size="16.5" fill="#d8d8d8" text-anchor="end" stroke="#d8d8d8" stroke-width="0.3">0.6</text>
<line x1="1694.3999999999999" y1="642" x2="1694.3999999999999" y2="648" stroke="#9a9a9a" stroke-width="2"/>
<text x="1694.3999999999999" y="665" font-size="16.5" fill="#d8d8d8" text-anchor="middle" stroke="#d8d8d8" stroke-width="0.3">0.6</text>
<line x1="1156" y1="213.90000000000003" x2="1162.5" y2="213.90000000000003" stroke="#9a9a9a" stroke-width="2"/>
<text x="1155" y="219.90000000000003" font-size="16.5" fill="#d8d8d8" text-anchor="end" stroke="#d8d8d8" stroke-width="0.3">0.7</text>
<line x1="1783.1999999999998" y1="642" x2="1783.1999999999998" y2="648" stroke="#9a9a9a" stroke-width="2"/>
<text x="1783.1999999999998" y="665" font-size="16.5" fill="#d8d8d8" text-anchor="middle" stroke="#d8d8d8" stroke-width="0.3">0.7</text>
<line x1="1156" y1="152.8" x2="1162.5" y2="152.8" stroke="#9a9a9a" stroke-width="2"/>
<text x="1155" y="158.8" font-size="16.5" fill="#d8d8d8" text-anchor="end" stroke="#d8d8d8" stroke-width="0.3">0.8</text>
<line x1="1872.0" y1="642" x2="1872.0" y2="648" stroke="#9a9a9a" stroke-width="2"/>
<text x="1872.0" y="665" font-size="16.5" fill="#d8d8d8" text-anchor="middle" stroke="#d8d8d8" stroke-width="0.3">0.8</text>
<rect x="1340.0" y="199.7" width="15" height="13" fill="none" stroke="#b8ffb8" stroke-width="2.2"/>
<rect x="1721.6" y="432.6" width="15" height="13" fill="none" stroke="#ffd8d8" stroke-width="2.2"/>
<rect x="1286.2" y="597.2" width="15" height="13" fill="none" stroke="#c8c8ff" stroke-width="2.2"/>
<rect x="1310.3" y="433.7" width="15" height="13" fill="none" stroke="#c0ffff" stroke-width="2.2"/>
<rect x="1468.6" y="529.0" width="15" height="13" fill="none" stroke="#ffc8ff" stroke-width="2.2"/>
<rect x="1532.5" y="317.7" width="15" height="13" fill="none" stroke="#ffffa8" stroke-width="2.2"/>
<ellipse cx="1456.1" cy="276.5" rx="5.3" ry="4.8" fill="#10a020" stroke="#0a4a10" stroke-width="2"/>
<ellipse cx="1545.1" cy="328.5" rx="5.3" ry="4.8" fill="#b8c810" stroke="#3a3a08" stroke-width="2"/>
<ellipse cx="1733.6" cy="442.0" rx="5.3" ry="4.8" fill="#e00010" stroke="#500000" stroke-width="2"/>
<ellipse cx="1370.5" cy="459.5" rx="5.3" ry="4.8" fill="#20c0b0" stroke="#0a5858" stroke-width="2"/>
<ellipse cx="1421.1" cy="565.7" rx="5.3" ry="4.8" fill="#c020c0" stroke="#500050" stroke-width="2"/>
<ellipse cx="1298.2" cy="614.0" rx="5.3" ry="4.8" fill="#0010c0" stroke="#000050" stroke-width="2"/>
<ellipse cx="1434.5" cy="456.3" rx="5.3" ry="4.8" fill="#c8c8c8" stroke="#555555" stroke-width="2"/>
<ellipse cx="1430.2" cy="459.1" rx="5.3" ry="4.8" fill="#ffffff" stroke="#555555" stroke-width="2"/>
<rect x="1432.8" y="433.4" width="14" height="13.5" fill="none" stroke="#1a1a1a" stroke-width="2.4"/>
<rect x="1648.0" y="133.5" width="253.5" height="195.5" fill="#8a8a8a"/>
<g><rect x="1649.5" y="135.0" width="250.5" height="4.6" fill="url(#c304)"/><rect x="1649.5" y="139.0" width="250.5" height="4.6" fill="url(#c305)"/><rect x="1649.5" y="143.0" width="250.5" height="4.6" fill="url(#c306)"/><rect x="1649.5" y="147.0" width="250.5" height="4.6" fill="url(#c307)"/><rect x="1649.5" y="151.0" width="250.5" height="4.6" fill="url(#c308)"/><rect x="1649.5" y="155.0" width="250.5" height="4.6" fill="url(#c309)"/><rect x="1649.5" y="159.0" width="250.5" height="4.6" fill="url(#c310)"/><rect x="1649.5" y="163.0" width="250.5" height="4.6" fill="url(#c311)"/><rect x="1649.5" y="167.0" width="250.5" height="4.6" fill="url(#c312)"/><rect x="1649.5" y="171.0" width="250.5" height="4.6" fill="url(#c313)"/><rect x="1649.5" y="175.0" width="250.5" height="4.6" fill="url(#c314)"/><rect x="1649.5" y="179.0" width="250.5" height="4.6" fill="url(#c315)"/><rect x="1649.5" y="183.0" width="250.5" height="4.6" fill="url(#c316)"/><rect x="1649.5" y="187.0" width="250.5" height="4.6" fill="url(#c317)"/><rect x="1649.5" y="191.0" width="250.5" height="4.6" fill="url(#c318)"/><rect x="1649.5" y="195.0" width="250.5" height="4.6" fill="url(#c319)"/><rect x="1649.5" y="199.0" width="250.5" height="4.6" fill="url(#c320)"/><rect x="1649.5" y="203.0" width="250.5" height="4.6" fill="url(#c321)"/><rect x="1649.5" y="207.0" width="250.5" height="4.6" fill="url(#c322)"/><rect x="1649.5" y="211.0" width="250.5" height="4.6" fill="url(#c323)"/><rect x="1649.5" y="215.0" width="250.5" height="4.6" fill="url(#c324)"/><rect x="1649.5" y="219.0" width="250.5" height="4.6" fill="url(#c325)"/><rect x="1649.5" y="223.0" width="250.5" height="4.6" fill="url(#c326)"/><rect x="1649.5" y="227.0" width="250.5" height="4.6" fill="url(#c327)"/><rect x="1649.5" y="231.0" width="250.5" height="4.6" fill="url(#c328)"/><rect x="1649.5" y="235.0" width="250.5" height="4.6" fill="url(#c329)"/><rect x="1649.5" y="239.0" width="250.5" height="4.6" fill="url(#c330)"/><rect x="1649.5" y="243.0" width="250.5" height="4.6" fill="url(#c331)"/><rect x="1649.5" y="247.0" width="250.5" height="4.6" fill="url(#c332)"/><rect x="1649.5" y="251.0" width="250.5" height="4.6" fill="url(#c333)"/><rect x="1649.5" y="255.0" width="250.5" height="4.6" fill="url(#c334)"/><rect x="1649.5" y="259.0" width="250.5" height="4.6" fill="url(#c335)"/><rect x="1649.5" y="263.0" width="250.5" height="4.6" fill="url(#c336)"/><rect x="1649.5" y="267.0" width="250.5" height="4.6" fill="url(#c337)"/><rect x="1649.5" y="271.0" width="250.5" height="4.6" fill="url(#c338)"/><rect x="1649.5" y="275.0" width="250.5" height="4.6" fill="url(#c339)"/><rect x="1649.5" y="279.0" width="250.5" height="4.6" fill="url(#c340)"/><rect x="1649.5" y="283.0" width="250.5" height="4.6" fill="url(#c341)"/><rect x="1649.5" y="287.0" width="250.5" height="4.6" fill="url(#c342)"/><rect x="1649.5" y="291.0" width="250.5" height="4.6" fill="url(#c343)"/><rect x="1649.5" y="295.0" width="250.5" height="4.6" fill="url(#c344)"/><rect x="1649.5" y="299.0" width="250.5" height="4.6" fill="url(#c345)"/><rect x="1649.5" y="303.0" width="250.5" height="4.6" fill="url(#c346)"/><rect x="1649.5" y="307.0" width="250.5" height="4.6" fill="url(#c347)"/><rect x="1649.5" y="311.0" width="250.5" height="4.6" fill="url(#c348)"/><rect x="1649.5" y="315.0" width="250.5" height="4.6" fill="url(#c349)"/><rect x="1649.5" y="319.0" width="250.5" height="4.6" fill="url(#c350)"/><rect x="1649.5" y="323.0" width="250.5" height="4.5" fill="url(#c351)"/><rect x="1649.5" y="327.0" width="250.5" height="0.5" fill="url(#c352)"/></g>
<rect x="1765.5" y="223" width="15" height="14" fill="none" stroke="#111" stroke-width="2.5"/>
<ellipse cx="1754" cy="300" rx="5.5" ry="5" fill="#bdbdbd" stroke="#333" stroke-width="1.5"/>
<ellipse cx="1737" cy="313" rx="5.5" ry="5" fill="#fff" stroke="#333" stroke-width="1.5"/>
<rect x="1614" y="608" width="290" height="28" fill="#333333"/>
<text x="1614" y="631" font-size="23" fill="#eeeeee" textLength="256" lengthAdjust="spacingAndGlyphs" stroke="#eeeeee" stroke-width="0.5">Gamut Coverage:&#160; 69.6%</text>
<text x="18.5" y="740.3" font-size="29" fill="#f2f2f2" textLength="251" lengthAdjust="spacingAndGlyphs" stroke="#f2f2f2" stroke-width="0.6">Current Reading</text>
<text x="18.5" y="785.0" font-size="26" fill="#f0f0f0" textLength="117" lengthAdjust="spacingAndGlyphs" stroke="#f0f0f0" stroke-width="0.5">x: 0.3025</text>
<text x="18.5" y="827.4" font-size="26" fill="#f0f0f0" textLength="117.5" lengthAdjust="spacingAndGlyphs" stroke="#f0f0f0" stroke-width="0.5">y: 0.2987</text>
<text x="18.5" y="869.8" font-size="26" fill="#f0f0f0" textLength="110" lengthAdjust="spacingAndGlyphs" stroke="#f0f0f0" stroke-width="0.5">fL: 81.72</text>
<text x="18.5" y="912.2" font-size="26" fill="#f0f0f0" textLength="142.5" lengthAdjust="spacingAndGlyphs" stroke="#f0f0f0" stroke-width="0.5">cd/m²: 280</text>
<text x="537.5" y="713.7" font-size="16.5" fill="#d8d8d8" text-anchor="middle" stroke="#d8d8d8" stroke-width="0.3">RGB Balance</text>
<rect x="407.5" y="719.7" width="291.3" height="187.5" fill="#232323"/>
<line x1="401" y1="751.7" x2="698.8" y2="751.7" stroke="#7c7c7c" stroke-width="2"/>
<text x="400" y="757.2" font-size="16.5" fill="#d8d8d8" text-anchor="end" stroke="#d8d8d8" stroke-width="0.3">20</text>
<line x1="401" y1="814" x2="698.8" y2="814" stroke="#7c7c7c" stroke-width="2"/>
<text x="400" y="819.5" font-size="16.5" fill="#d8d8d8" text-anchor="end" stroke="#d8d8d8" stroke-width="0.3">0</text>
<line x1="401" y1="877" x2="698.8" y2="877" stroke="#7c7c7c" stroke-width="2"/>
<text x="400" y="882.5" font-size="16.5" fill="#d8d8d8" text-anchor="end" stroke="#d8d8d8" stroke-width="0.3">-20</text>
<rect x="437.7" y="799.2" width="76.3" height="14.8" fill="url(#rbR)" stroke="#111" stroke-width="1.5"/>
<rect x="514" y="814" width="78.5" height="18.4" fill="url(#rbG)" stroke="#111" stroke-width="1.5"/>
<rect x="594.4" y="728.7" width="76.6" height="85.3" fill="url(#rbB)" stroke="#111" stroke-width="1.5"/>
<rect x="407.5" y="719.7" width="291.3" height="187.5" fill="none" stroke="#9a9a9a" stroke-width="2"/>
<line x1="407.5" y1="907" x2="407.5" y2="913" stroke="#9a9a9a" stroke-width="2"/>
<line x1="698.8" y1="907" x2="698.8" y2="913" stroke="#9a9a9a" stroke-width="2"/>
<text x="553" y="924" font-size="16.5" fill="#d8d8d8" text-anchor="middle" stroke="#d8d8d8" stroke-width="0.3">100W</text>
<rect x="724" y="696" width="796.3" height="40.3" fill="#2a2a2a"/>
<rect x="724" y="715.6" width="796.3" height="20.7" fill="#1a1a1a"/>
<rect x="724" y="696" width="16.6" height="40.3" fill="#050505"/>
<rect x="740.6" y="736.3" width="779.7" height="38.0" fill="#3a3a3a"/>
<rect x="724" y="736.3" width="16.6" height="38.0" fill="#262626"/>
<rect x="740.6" y="774.3" width="779.7" height="37.200000000000045" fill="#7a7a7a"/>
<rect x="724" y="774.3" width="16.6" height="37.200000000000045" fill="#222222"/>
<rect x="740.6" y="811.5" width="779.7" height="37.5" fill="#3a3a3a"/>
<rect x="724" y="811.5" width="16.6" height="37.5" fill="#262626"/>
<rect x="740.6" y="849" width="779.7" height="38.5" fill="#7a7a7a"/>
<rect x="724" y="849" width="16.6" height="38.5" fill="#222222"/>
<rect x="740.6" y="887.5" width="779.7" height="37.5" fill="#3a3a3a"/>
<rect x="724" y="887.5" width="16.6" height="37.5" fill="#262626"/>
<text x="827.5" y="725" font-size="24" fill="#eeeeee" stroke="#eeeeee" stroke-width="0.7" transform="translate(827.5 0) scale(0.78 1) translate(-827.5 0)">White</text>
<text x="918.5" y="725" font-size="24" fill="#eeeeee" stroke="#eeeeee" stroke-width="0.7" transform="translate(918.5 0) scale(0.78 1) translate(-918.5 0)">Red</text>
<text x="999.2" y="725" font-size="24" fill="#eeeeee" stroke="#eeeeee" stroke-width="0.7" transform="translate(999.2 0) scale(0.78 1) translate(-999.2 0)">Green</text>
<text x="1090.2" y="725" font-size="24" fill="#eeeeee" stroke="#eeeeee" stroke-width="0.7" transform="translate(1090.2 0) scale(0.78 1) translate(-1090.2 0)">Blue</text>
<text x="1170" y="725" font-size="24" fill="#eeeeee" stroke="#eeeeee" stroke-width="0.7" transform="translate(1170 0) scale(0.78 1) translate(-1170 0)">Cyan</text>
<text x="1261" y="725" font-size="24" fill="#eeeeee" stroke="#eeeeee" stroke-width="0.7" transform="translate(1261 0) scale(0.78 1) translate(-1261 0)">Magenta</text>
<text x="1343.5" y="725" font-size="24" fill="#eeeeee" stroke="#eeeeee" stroke-width="0.7" transform="translate(1343.5 0) scale(0.78 1) translate(-1343.5 0)">Yellow</text>
<text x="1435" y="725" font-size="24" fill="#eeeeee" stroke="#eeeeee" stroke-width="0.7" transform="translate(1435 0) scale(0.78 1) translate(-1435 0)">100W</text>
<text x="744.7" y="763.8" font-size="24" fill="#eeeeee" stroke="#eeeeee" stroke-width="0.4" transform="translate(744.7 0) scale(0.78 1) translate(-744.7 0)">x: CIE31</text>
<text x="827.5" y="763.8" font-size="24" fill="#eeeeee" stroke="#eeeeee" stroke-width="0.4" transform="translate(827.5 0) scale(0.78 1) translate(-827.5 0)">0.3073</text>
<text x="918.5" y="763.8" font-size="24" fill="#eeeeee" stroke="#eeeeee" stroke-width="0.4" transform="translate(918.5 0) scale(0.78 1) translate(-918.5 0)">0.6441</text>
<text x="999.2" y="763.8" font-size="24" fill="#eeeeee" stroke="#eeeeee" stroke-width="0.4" transform="translate(999.2 0) scale(0.78 1) translate(-999.2 0)">0.3317</text>
<text x="1090.2" y="763.8" font-size="24" fill="#eeeeee" stroke="#eeeeee" stroke-width="0.4" transform="translate(1090.2 0) scale(0.78 1) translate(-1090.2 0)">0.1538</text>
<text x="1170" y="763.8" font-size="24" fill="#eeeeee" stroke="#eeeeee" stroke-width="0.4" transform="translate(1170 0) scale(0.78 1) translate(-1170 0)">0.2352</text>
<text x="1261" y="763.8" font-size="24" fill="#eeeeee" stroke="#eeeeee" stroke-width="0.4" transform="translate(1261 0) scale(0.78 1) translate(-1261 0)">0.2922</text>
<text x="1343.5" y="763.8" font-size="24" fill="#eeeeee" stroke="#eeeeee" stroke-width="0.4" transform="translate(1343.5 0) scale(0.78 1) translate(-1343.5 0)">0.4319</text>
<text x="1435" y="763.8" font-size="24" fill="#eeeeee" stroke="#eeeeee" stroke-width="0.4" transform="translate(1435 0) scale(0.78 1) translate(-1435 0)">0.3025</text>
<text x="744.7" y="801.8" font-size="24" fill="#eeeeee" stroke="#eeeeee" stroke-width="0.4" transform="translate(744.7 0) scale(0.78 1) translate(-744.7 0)">y: CIE31</text>
<text x="827.5" y="801.8" font-size="24" fill="#eeeeee" stroke="#eeeeee" stroke-width="0.4" transform="translate(827.5 0) scale(0.78 1) translate(-827.5 0)">0.3032</text>
<text x="918.5" y="801.8" font-size="24" fill="#eeeeee" stroke="#eeeeee" stroke-width="0.4" transform="translate(918.5 0) scale(0.78 1) translate(-918.5 0)">0.3267</text>
<text x="999.2" y="801.8" font-size="24" fill="#eeeeee" stroke="#eeeeee" stroke-width="0.4" transform="translate(999.2 0) scale(0.78 1) translate(-999.2 0)">0.5975</text>
<text x="1090.2" y="801.8" font-size="24" fill="#eeeeee" stroke="#eeeeee" stroke-width="0.4" transform="translate(1090.2 0) scale(0.78 1) translate(-1090.2 0)">0.0451</text>
<text x="1170" y="801.8" font-size="24" fill="#eeeeee" stroke="#eeeeee" stroke-width="0.4" transform="translate(1170 0) scale(0.78 1) translate(-1170 0)">0.2981</text>
<text x="1261" y="801.8" font-size="24" fill="#eeeeee" stroke="#eeeeee" stroke-width="0.4" transform="translate(1261 0) scale(0.78 1) translate(-1261 0)">0.1242</text>
<text x="1343.5" y="801.8" font-size="24" fill="#eeeeee" stroke="#eeeeee" stroke-width="0.4" transform="translate(1343.5 0) scale(0.78 1) translate(-1343.5 0)">0.5125</text>
<text x="1435" y="801.8" font-size="24" fill="#eeeeee" stroke="#eeeeee" stroke-width="0.4" transform="translate(1435 0) scale(0.78 1) translate(-1435 0)">0.2987</text>
<text x="744.7" y="839.0" font-size="24" fill="#eeeeee" stroke="#eeeeee" stroke-width="0.4" transform="translate(744.7 0) scale(0.78 1) translate(-744.7 0)">Y</text>
<text x="827.5" y="839.0" font-size="24" fill="#eeeeee" stroke="#eeeeee" stroke-width="0.4" transform="translate(827.5 0) scale(0.78 1) translate(-827.5 0)">146.4328</text>
<text x="918.5" y="839.0" font-size="24" fill="#eeeeee" stroke="#eeeeee" stroke-width="0.4" transform="translate(918.5 0) scale(0.78 1) translate(-918.5 0)">27.2708</text>
<text x="999.2" y="839.0" font-size="24" fill="#eeeeee" stroke="#eeeeee" stroke-width="0.4" transform="translate(999.2 0) scale(0.78 1) translate(-999.2 0)">106.7542</text>
<text x="1090.2" y="839.0" font-size="24" fill="#eeeeee" stroke="#eeeeee" stroke-width="0.4" transform="translate(1090.2 0) scale(0.78 1) translate(-1090.2 0)">9.5728</text>
<text x="1170" y="839.0" font-size="24" fill="#eeeeee" stroke="#eeeeee" stroke-width="0.4" transform="translate(1170 0) scale(0.78 1) translate(-1170 0)">117.5056</text>
<text x="1261" y="839.0" font-size="24" fill="#eeeeee" stroke="#eeeeee" stroke-width="0.4" transform="translate(1261 0) scale(0.78 1) translate(-1261 0)">36.9912</text>
<text x="1343.5" y="839.0" font-size="24" fill="#eeeeee" stroke="#eeeeee" stroke-width="0.4" transform="translate(1343.5 0) scale(0.78 1) translate(-1343.5 0)">135.2383</text>
<text x="1435" y="839.0" font-size="24" fill="#eeeeee" stroke="#eeeeee" stroke-width="0.4" transform="translate(1435 0) scale(0.78 1) translate(-1435 0)">279.9967</text>
<text x="744.7" y="876.5" font-size="24" fill="#eeeeee" stroke="#eeeeee" stroke-width="0.4" transform="translate(744.7 0) scale(0.78 1) translate(-744.7 0)">Target Y</text>
<text x="827.5" y="876.5" font-size="24" fill="#eeeeee" stroke="#eeeeee" stroke-width="0.4" transform="translate(827.5 0) scale(0.78 1) translate(-827.5 0)">146.4328</text>
<text x="918.5" y="876.5" font-size="24" fill="#eeeeee" stroke="#eeeeee" stroke-width="0.4" transform="translate(918.5 0) scale(0.78 1) translate(-918.5 0)">43.5434</text>
<text x="999.2" y="876.5" font-size="24" fill="#eeeeee" stroke="#eeeeee" stroke-width="0.4" transform="translate(999.2 0) scale(0.78 1) translate(-999.2 0)">91.8653</text>
<text x="1090.2" y="876.5" font-size="24" fill="#eeeeee" stroke="#eeeeee" stroke-width="0.4" transform="translate(1090.2 0) scale(0.78 1) translate(-1090.2 0)">11.0242</text>
<text x="1170" y="876.5" font-size="24" fill="#eeeeee" stroke="#eeeeee" stroke-width="0.4" transform="translate(1170 0) scale(0.78 1) translate(-1170 0)">102.8894</text>
<text x="1261" y="876.5" font-size="24" fill="#eeeeee" stroke="#eeeeee" stroke-width="0.4" transform="translate(1261 0) scale(0.78 1) translate(-1261 0)">54.5675</text>
<text x="1343.5" y="876.5" font-size="24" fill="#eeeeee" stroke="#eeeeee" stroke-width="0.4" transform="translate(1343.5 0) scale(0.78 1) translate(-1343.5 0)">135.4087</text>
<text x="1435" y="876.5" font-size="24" fill="#eeeeee" stroke="#eeeeee" stroke-width="0.4" transform="translate(1435 0) scale(0.78 1) translate(-1435 0)">279.9967</text>
<text x="744.7" y="915.0" font-size="24" fill="#eeeeee" stroke="#eeeeee" stroke-width="0.4" transform="translate(744.7 0) scale(0.78 1) translate(-744.7 0)">ΔE 2000</text>
<text x="827.5" y="915.0" font-size="24" fill="#eeeeee" stroke="#eeeeee" stroke-width="0.4" transform="translate(827.5 0) scale(0.78 1) translate(-827.5 0)">11.7357</text>
<text x="918.5" y="915.0" font-size="24" fill="#eeeeee" stroke="#eeeeee" stroke-width="0.4" transform="translate(918.5 0) scale(0.78 1) translate(-918.5 0)">8.5199</text>
<text x="999.2" y="915.0" font-size="24" fill="#eeeeee" stroke="#eeeeee" stroke-width="0.4" transform="translate(999.2 0) scale(0.78 1) translate(-999.2 0)">12.8692</text>
<text x="1090.2" y="915.0" font-size="24" fill="#eeeeee" stroke="#eeeeee" stroke-width="0.4" transform="translate(1090.2 0) scale(0.78 1) translate(-1090.2 0)">5.7183</text>
<text x="1170" y="915.0" font-size="24" fill="#eeeeee" stroke="#eeeeee" stroke-width="0.4" transform="translate(1170 0) scale(0.78 1) translate(-1170 0)">15.9078</text>
<text x="1261" y="915.0" font-size="24" fill="#eeeeee" stroke="#eeeeee" stroke-width="0.4" transform="translate(1261 0) scale(0.78 1) translate(-1261 0)">10.2043</text>
<text x="1343.5" y="915.0" font-size="24" fill="#eeeeee" stroke="#eeeeee" stroke-width="0.4" transform="translate(1343.5 0) scale(0.78 1) translate(-1343.5 0)">1.3550</text>
<text x="1435" y="915.0" font-size="24" fill="#eeeeee" stroke="#eeeeee" stroke-width="0.4" transform="translate(1435 0) scale(0.78 1) translate(-1435 0)">14.3425</text>
<rect x="2.0" y="935" width="186.5" height="90" rx="4" fill="url(#bb)"/>
<rect x="10.0" y="942" width="172" height="44.5" rx="4" fill="#c0c0c0"/>
<text x="95.0" y="1005.5" font-size="13.5" fill="#3c3c3c" text-anchor="middle" stroke="#3c3c3c" stroke-width="0.6">White</text>
<rect x="191.2" y="935" width="186.5" height="90" rx="4" fill="url(#bb)"/>
<rect x="199.2" y="942" width="172" height="44.5" rx="4" fill="#c00000"/>
<text x="284.2" y="1005.5" font-size="13.5" fill="#3c3c3c" text-anchor="middle" stroke="#3c3c3c" stroke-width="0.6">Red</text>
<rect x="380.4" y="935" width="186.5" height="90" rx="4" fill="url(#bb)"/>
<rect x="388.4" y="942" width="172" height="44.5" rx="4" fill="#00c000"/>
<text x="473.4" y="1005.5" font-size="13.5" fill="#3c3c3c" text-anchor="middle" stroke="#3c3c3c" stroke-width="0.6">Green</text>
<rect x="569.5999999999999" y="935" width="186.5" height="90" rx="4" fill="url(#bb)"/>
<rect x="577.5999999999999" y="942" width="172" height="44.5" rx="4" fill="#0000c0"/>
<text x="662.5999999999999" y="1005.5" font-size="13.5" fill="#3c3c3c" text-anchor="middle" stroke="#3c3c3c" stroke-width="0.6">Blue</text>
<rect x="758.8" y="935" width="186.5" height="90" rx="4" fill="url(#bb)"/>
<rect x="766.8" y="942" width="172" height="44.5" rx="4" fill="#00c0c0"/>
<text x="851.8" y="1005.5" font-size="13.5" fill="#3c3c3c" text-anchor="middle" stroke="#3c3c3c" stroke-width="0.6">Cyan</text>
<rect x="948.0" y="935" width="186.5" height="90" rx="4" fill="url(#bb)"/>
<rect x="956.0" y="942" width="172" height="44.5" rx="4" fill="#c000c0"/>
<text x="1041.0" y="1005.5" font-size="13.5" fill="#3c3c3c" text-anchor="middle" stroke="#3c3c3c" stroke-width="0.6">Magenta</text>
<rect x="1137.1999999999998" y="935" width="186.5" height="90" rx="4" fill="url(#bb)"/>
<rect x="1145.1999999999998" y="942" width="172" height="44.5" rx="4" fill="#c0c000"/>
<text x="1230.1999999999998" y="1005.5" font-size="13.5" fill="#3c3c3c" text-anchor="middle" stroke="#3c3c3c" stroke-width="0.6">Yellow</text>
<rect x="1326.3999999999999" y="935" width="186.5" height="90" rx="4" fill="#222"/>
<rect x="1334.3999999999999" y="941.5" width="170.5" height="45" rx="4" fill="#ffffff" stroke="#999" stroke-width="1"/>
<text x="1419.3999999999999" y="1005.5" font-size="13.5" fill="#f4f4f4" text-anchor="middle" stroke="#f4f4f4" stroke-width="0.6">100W</text>
<rect x="1517" y="935" width="59" height="22" rx="4" fill="url(#gb2)"/>
<circle cx="1546.5" cy="946" r="8" fill="#8a8a8a"/><path d="M1541 949 L1552 949 L1546.5 943 Z" fill="#333"/>
<rect x="1517" y="957" width="59" height="60" fill="url(#gb2)"/>
<rect x="1528" y="966" width="37" height="37" rx="5" fill="#a8a8a8" stroke="#222" stroke-width="3"/>
<rect x="1537.5" y="976" width="18" height="17" fill="#111"/>
<rect x="1578" y="935" width="283" height="37" fill="url(#gb2)"/>
<line x1="1635.6" y1="935" x2="1635.6" y2="972" stroke="#555" stroke-width="1.5"/>
<line x1="1692" y1="935" x2="1692" y2="972" stroke="#555" stroke-width="1.5"/>
<line x1="1748.3" y1="935" x2="1748.3" y2="972" stroke="#555" stroke-width="1.5"/>
<line x1="1805.2" y1="935" x2="1805.2" y2="972" stroke="#555" stroke-width="1.5"/>
<rect x="1861" y="935" width="59" height="37" fill="#2a2a2a"/>
<circle cx="1890" cy="953" r="11" fill="#222"/>
<circle cx="1606.5" cy="954" r="11" fill="#9a9a9a"/>
<circle cx="1664" cy="954" r="11" fill="#9a9a9a"/>
<circle cx="1720" cy="954" r="11" fill="#9a9a9a"/>
<circle cx="1776.5" cy="954" r="11" fill="#9a9a9a"/>
<circle cx="1833" cy="954" r="11" fill="#9a9a9a"/>
<rect x="1601" y="948" width="11" height="11" fill="#2a2a2a"/>
<path d="M1660 947 L1670 954 L1660 961 Z" fill="#2a2a2a"/>
<path d="M1716 947 L1713.5 947 L1713.5 961 L1716 961 M1724 947 L1726.5 947 L1726.5 961 L1724 961 M1716.5 954 L1723.5 954 M1716.5 950 L1716.5 958 M1723.5 950 L1723.5 958" stroke="#2e2e2e" stroke-width="2" fill="none"/>
<path d="M1776.5 953 C1773 948 1768.5 948 1768.5 953 C1768.5 958 1773 958 1776.5 953 C1780 948 1784.5 948 1784.5 953 C1784.5 958 1780 958 1776.5 953 Z" stroke="#2e2e2e" stroke-width="2.2" fill="none"/>
<path d="M1827.5 955 A5.5 5.5 0 0 1 1837 949.5 M1838.5 953 A5.5 5.5 0 0 1 1829 958.5" stroke="#2e2e2e" stroke-width="2.4" fill="none"/><path d="M1834.5 946 L1840 949 L1835 952.5 Z M1831.5 962 L1826 959 L1831 955.5 Z" fill="#2e2e2e"/>
<rect x="1578" y="974" width="170" height="40" rx="5" fill="url(#gb2)"/>
<rect x="1749" y="974" width="169" height="40" rx="5" fill="url(#gb2)"/>
<circle cx="1616" cy="993" r="11" fill="#9a9a9a"/>
<text x="1616" y="999" font-size="18" fill="#333" text-anchor="middle" font-weight="bold">«</text>
<circle cx="1883" cy="993" r="11" fill="#9a9a9a"/>
<text x="1883" y="999" font-size="18" fill="#333" text-anchor="middle" font-weight="bold">»</text>
<text x="1651" y="1003" font-size="27" fill="#2a2a2a" textLength="61" lengthAdjust="spacingAndGlyphs" stroke="#2a2a2a" stroke-width="0.8">Back</text>
<text x="1783" y="1003" font-size="27" fill="#2a2a2a" textLength="64" lengthAdjust="spacingAndGlyphs" stroke="#2a2a2a" stroke-width="0.8">Next</text>
</svg>
</body></html>
